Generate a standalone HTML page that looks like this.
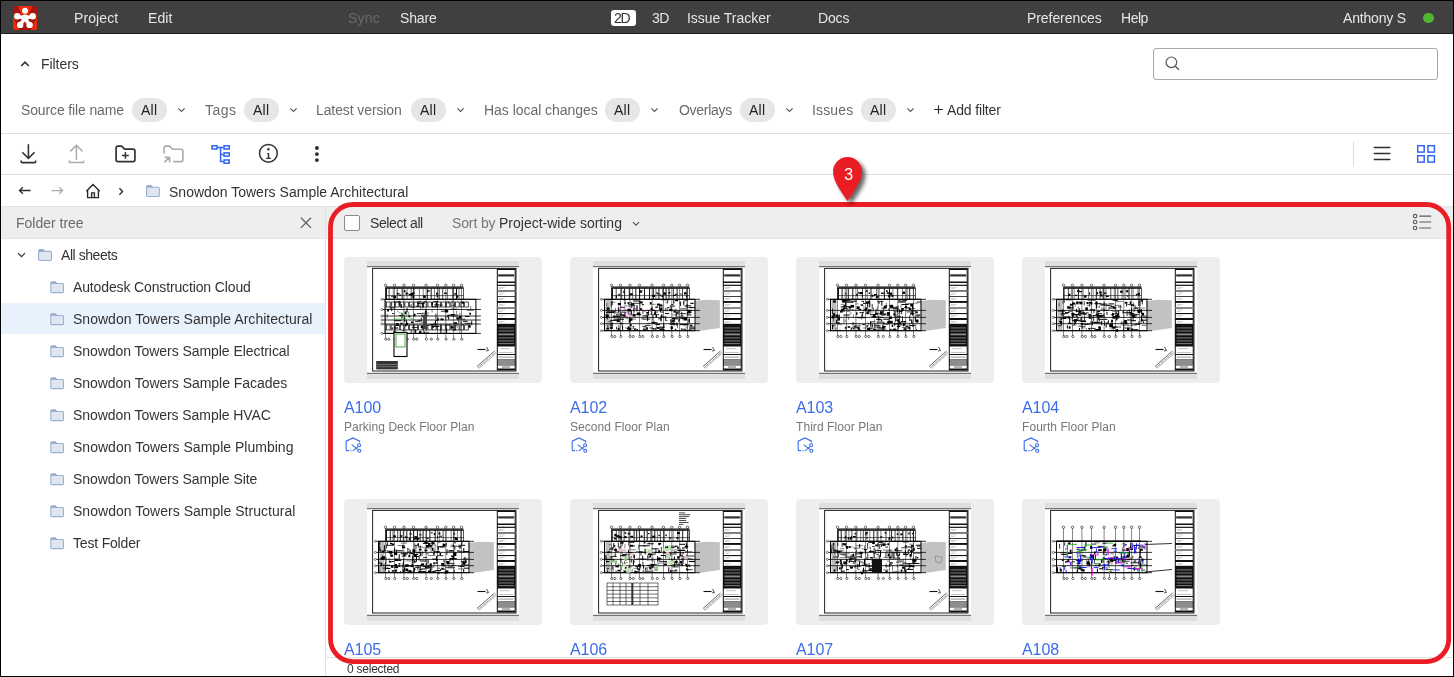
<!DOCTYPE html>
<html><head><meta charset="utf-8"><style>
html,body{margin:0;padding:0;}
body{width:1454px;height:677px;position:relative;overflow:hidden;background:#fff;font-family:"Liberation Sans",sans-serif;}
.t{position:absolute;white-space:nowrap;will-change:transform;}
.b{position:absolute;}
svg.b{overflow:visible}
</style></head><body>
<div class="b" style="left:1px;top:1px;width:1452px;height:32px;background:#404040"></div>
<div class="b" style="left:1px;top:33px;width:1452px;height:1px;background:#1f1f1f"></div>
<svg class="b" style="left:13px;top:6px" width="24" height="24" viewBox="0 0 24 24">
<defs><clipPath id="lc"><rect x="0" y="0" width="24" height="24" rx="2.5"/></clipPath></defs>
<g clip-path="url(#lc)">
<rect width="24" height="24" fill="#a8140e"/>
<path d="M4.9 0 L19.1 0 L12 19 Z" fill="#ec2a0c"/>
<path d="M0 10 L0 24 L6 24 Z" fill="#ec2a0c"/>
<path d="M24 10 L24 24 L18 24 Z" fill="#ec2a0c"/>
</g>
<g fill="#fff">
<circle cx="12" cy="4.75" r="3"/>
<circle cx="4.3" cy="10.3" r="3.2"/>
<circle cx="19.7" cy="10.3" r="3.2"/>
<circle cx="7.2" cy="18.9" r="3.2"/>
<circle cx="16.6" cy="18.9" r="3.2"/>
<circle cx="12" cy="12" r="3.6"/>
</g>
<g stroke="#fff" stroke-width="3.4" stroke-linecap="round">
<line x1="12" y1="12" x2="4.8" y2="10.5"/>
<line x1="12" y1="12" x2="19.2" y2="10.5"/>
<line x1="12" y1="12" x2="7.5" y2="18.5"/>
<line x1="12" y1="12" x2="16.3" y2="18.5"/>
</g>
</svg>
<div class="t" style="left:73.80px;top:11.15px;font-size:14px;line-height:14px;color:#e6e6e6;letter-spacing:0.108px;">Project</div>
<div class="t" style="left:148.40px;top:11.15px;font-size:14px;line-height:14px;color:#e6e6e6;letter-spacing:0.100px;">Edit</div>
<div class="t" style="left:348.00px;top:11.15px;font-size:14px;line-height:14px;color:#6a6a6a;letter-spacing:0.233px;">Sync</div>
<div class="t" style="left:400.30px;top:11.15px;font-size:14px;line-height:14px;color:#e6e6e6;letter-spacing:-0.138px;">Share</div>
<div class="b" style="left:611px;top:10px;width:25px;height:15.5px;background:#fff;border-radius:3px"></div>
<div class="t" style="left:614.30px;top:11.15px;font-size:14px;line-height:14px;color:#333;letter-spacing:-1.400px;">2D</div>
<div class="t" style="left:651.60px;top:11.15px;font-size:14px;line-height:14px;color:#e6e6e6;letter-spacing:-0.500px;">3D</div>
<div class="t" style="left:687.00px;top:11.15px;font-size:14px;line-height:14px;color:#e6e6e6;letter-spacing:-0.038px;">Issue Tracker</div>
<div class="t" style="left:818.20px;top:11.15px;font-size:14px;line-height:14px;color:#e6e6e6;letter-spacing:-0.167px;">Docs</div>
<div class="t" style="left:1027.00px;top:11.15px;font-size:14px;line-height:14px;color:#e6e6e6;letter-spacing:-0.070px;">Preferences</div>
<div class="t" style="left:1121.00px;top:11.15px;font-size:14px;line-height:14px;color:#e6e6e6;letter-spacing:-0.467px;">Help</div>
<div class="t" style="left:1343.20px;top:11.15px;font-size:14px;line-height:14px;color:#e6e6e6;letter-spacing:-0.187px;">Anthony S</div>
<div class="b" style="left:1423px;top:12.5px;width:10.5px;height:10.5px;background:#52b431;border-radius:50%"></div>
<svg class="b" style="left:19px;top:59px" width="12" height="9" viewBox="0 0 12 9"><path d="M2.2 7 L6 3.2 L9.8 7" fill="none" stroke="#333" stroke-width="1.6"/></svg>
<div class="t" style="left:40.60px;top:57.15px;font-size:14px;line-height:14px;color:#333;letter-spacing:-0.050px;">Filters</div>
<div class="b" style="left:1153px;top:48px;width:285px;height:32px;border:1px solid #a8a8a8;border-radius:3px;box-sizing:border-box"></div>
<svg class="b" style="left:1163px;top:54px" width="20" height="20" viewBox="0 0 20 20"><circle cx="8.4" cy="8.3" r="5.3" fill="none" stroke="#555" stroke-width="1.2"/><line x1="12.3" y1="12.2" x2="16" y2="15.8" stroke="#555" stroke-width="1.3"/></svg>
<div class="t" style="left:21.30px;top:103.15px;font-size:14px;line-height:14px;color:#6b6b6b;letter-spacing:-0.137px;">Source file name</div>
<div class="b" style="left:132px;top:98px;width:35px;height:24px;background:#e6e6e6;border-radius:12px"></div>
<div class="t" style="left:141.00px;top:103.15px;font-size:14px;line-height:14px;color:#222;letter-spacing:0.225px;">All</div>
<svg class="b" style="left:176px;top:105px" width="12" height="10" viewBox="0 0 12 10"><path d="M2.40 3.40 L5.50 6.40 L8.60 3.40" fill="none" stroke="#505050" stroke-width="1.1"/></svg>
<div class="t" style="left:205.20px;top:103.15px;font-size:14px;line-height:14px;color:#6b6b6b;letter-spacing:0.483px;">Tags</div>
<div class="b" style="left:244px;top:98px;width:35px;height:24px;background:#e6e6e6;border-radius:12px"></div>
<div class="t" style="left:253.00px;top:103.15px;font-size:14px;line-height:14px;color:#222;letter-spacing:0.225px;">All</div>
<svg class="b" style="left:288px;top:105px" width="12" height="10" viewBox="0 0 12 10"><path d="M2.40 3.40 L5.50 6.40 L8.60 3.40" fill="none" stroke="#505050" stroke-width="1.1"/></svg>
<div class="t" style="left:316.00px;top:103.15px;font-size:14px;line-height:14px;color:#6b6b6b;letter-spacing:-0.104px;">Latest version</div>
<div class="b" style="left:411px;top:98px;width:35px;height:24px;background:#e6e6e6;border-radius:12px"></div>
<div class="t" style="left:420.00px;top:103.15px;font-size:14px;line-height:14px;color:#222;letter-spacing:0.225px;">All</div>
<svg class="b" style="left:454px;top:105px" width="12" height="10" viewBox="0 0 12 10"><path d="M3.40 3.40 L6.50 6.40 L9.60 3.40" fill="none" stroke="#505050" stroke-width="1.1"/></svg>
<div class="t" style="left:483.60px;top:103.15px;font-size:14px;line-height:14px;color:#6b6b6b;letter-spacing:-0.037px;">Has local changes</div>
<div class="b" style="left:605px;top:98px;width:35px;height:24px;background:#e6e6e6;border-radius:12px"></div>
<div class="t" style="left:614.00px;top:103.15px;font-size:14px;line-height:14px;color:#222;letter-spacing:0.225px;">All</div>
<svg class="b" style="left:648px;top:105px" width="12" height="10" viewBox="0 0 12 10"><path d="M3.40 3.40 L6.50 6.40 L9.60 3.40" fill="none" stroke="#505050" stroke-width="1.1"/></svg>
<div class="t" style="left:678.60px;top:103.15px;font-size:14px;line-height:14px;color:#6b6b6b;letter-spacing:-0.293px;">Overlays</div>
<div class="b" style="left:740px;top:98px;width:35px;height:24px;background:#e6e6e6;border-radius:12px"></div>
<div class="t" style="left:749.00px;top:103.15px;font-size:14px;line-height:14px;color:#222;letter-spacing:0.225px;">All</div>
<svg class="b" style="left:784px;top:105px" width="12" height="10" viewBox="0 0 12 10"><path d="M2.40 3.40 L5.50 6.40 L8.60 3.40" fill="none" stroke="#505050" stroke-width="1.1"/></svg>
<div class="t" style="left:812.00px;top:103.15px;font-size:14px;line-height:14px;color:#6b6b6b;letter-spacing:0.150px;">Issues</div>
<div class="b" style="left:861px;top:98px;width:35px;height:24px;background:#e6e6e6;border-radius:12px"></div>
<div class="t" style="left:870.00px;top:103.15px;font-size:14px;line-height:14px;color:#222;letter-spacing:0.225px;">All</div>
<svg class="b" style="left:904px;top:105px" width="12" height="10" viewBox="0 0 12 10"><path d="M3.40 3.40 L6.50 6.40 L9.60 3.40" fill="none" stroke="#505050" stroke-width="1.1"/></svg>
<svg class="b" style="left:932px;top:103px" width="12" height="12" viewBox="0 0 12 12"><path d="M6.5 2.2 V10.7 M2.05 6.45 H10.8" stroke="#2a2a2a" stroke-width="1.1"/></svg>
<div class="t" style="left:946.50px;top:103.15px;font-size:14px;line-height:14px;color:#333;letter-spacing:-0.150px;">Add filter</div>
<div class="b" style="left:1px;top:133px;width:1452px;height:1px;background:#dedede"></div>
<div class="b" style="left:1px;top:174px;width:1452px;height:1px;background:#dedede"></div>
<svg class="b" style="left:0;top:0" width="340" height="180" viewBox="0 0 340 180">
<g fill="none" stroke="#333" stroke-width="1.6" stroke-linecap="butt" stroke-linejoin="miter">
<path d="M28.4 144.2 V158"/><path d="M22.3 152.3 L28.4 158.4 L34.5 152.3"/>
<path d="M21.2 160.4 V161.8 Q21.2 162.6 22 162.6 H34.8 Q35.6 162.6 35.6 161.8 V160.4"/>
</g>
<g fill="none" stroke="#ababab" stroke-width="1.5">
<path d="M76.4 145.2 V159.8"/><path d="M70.3 151.4 L76.4 145.3 L82.5 151.4"/>
<path d="M69.2 160.4 V161.8 Q69.2 162.6 70 162.6 H82.8 Q83.6 162.6 83.6 161.8 V160.4"/>
</g>
<g fill="none" stroke="#333" stroke-width="1.7" stroke-linejoin="round">
<path d="M116.1 148 Q116.1 146.1 118 146.1 H121.6 L124.6 149.2 H133 Q134.9 149.2 134.9 151.1 V159.7 Q134.9 161.6 133 161.6 H118 Q116.1 161.6 116.1 159.7 Z"/>
<path d="M125.4 152.1 V158.8 M122 155.4 H128.8" stroke-width="1.5"/>
</g>
<g fill="none" stroke="#ababab" stroke-width="1.6" stroke-linejoin="round">
<path d="M164.1 153.5 V148 Q164.1 146.1 166 146.1 H169.6 L172.6 149.2 H181 Q182.9 149.2 182.9 151.1 V159.7 Q182.9 161.6 181 161.6 H173.3"/>
<path d="M164.4 162.4 L169.4 157.4 M164.6 157.4 H169.6 V162.6"/>
</g>
<g fill="none" stroke="#2f63f4" stroke-width="1.5">
<rect x="212" y="145.8" width="5" height="3.2"/><rect x="224" y="145.8" width="5.2" height="3.2"/><rect x="224" y="152.9" width="5.2" height="3.2"/><rect x="224" y="160" width="5.2" height="3.2"/>
<path d="M217.7 147.4 H223.3 M220.6 147.4 V161.6 H223.3 M220.6 154.5 H223.3"/>
</g>
<g fill="none" stroke="#333">
<circle cx="268.4" cy="153.3" r="8.9" stroke-width="1.5"/>
<path d="M267.2 153.6 H268.5 V158.4 M266.2 158.4 H270.8" stroke-width="1.4"/>
</g>
<circle cx="268.4" cy="149.3" r="1.2" fill="#333"/>
<circle cx="316.9" cy="148" r="1.9" fill="#2b2b2b"/><circle cx="316.9" cy="154.1" r="1.9" fill="#2b2b2b"/><circle cx="316.9" cy="160.1" r="1.9" fill="#2b2b2b"/>
</svg>
<div class="b" style="left:1353px;top:141px;width:1px;height:26px;background:#dcdcdc"></div>
<svg class="b" style="left:1372px;top:144px" width="20" height="20" viewBox="0 0 20 20"><path d="M2.3 3.5 H17.8 M2.3 9.4 H17.8 M2.3 15.5 H17.8" stroke="#2e2e2e" stroke-width="1.5" stroke-linecap="round"/></svg>
<svg class="b" style="left:1414px;top:143px" width="24" height="22" viewBox="0 0 24 22"><g fill="none" stroke="#2f63f4" stroke-width="1.45"><rect x="3.7" y="2.7" width="6.5" height="6.4"/><rect x="13.9" y="2.7" width="6.5" height="6.4"/><rect x="3.7" y="12.7" width="6.5" height="6.4"/><rect x="13.9" y="12.7" width="6.5" height="6.4"/></g></svg>
<svg class="b" style="left:16px;top:184px" width="18" height="14" viewBox="0 0 18 14"><path d="M3.6 6.5 H14.6 M6.8 3.2 L3.5 6.5 L6.8 9.8" fill="none" stroke="#2e2e2e" stroke-width="1.35"/></svg>
<svg class="b" style="left:48px;top:184px" width="18" height="14" viewBox="0 0 18 14"><path d="M3.3 6.5 H14.6 M11.3 3.2 L14.6 6.5 L11.3 9.8" fill="none" stroke="#ababab" stroke-width="1.25"/></svg>
<svg class="b" style="left:84px;top:182px" width="18" height="18" viewBox="0 0 18 18"><path d="M2.3 9.3 L9 2.5 L15.7 9.3 M3.6 8 V15.6 H14.4 V8 M7.6 15.6 V10.9 H10.4 V15.6" fill="none" stroke="#2b2b2b" stroke-width="1.4" stroke-linejoin="miter"/></svg>
<svg class="b" style="left:116px;top:186px" width="10" height="11" viewBox="0 0 10 11"><path d="M3.4 2.3 L6.6 5.5 L3.4 8.7" fill="none" stroke="#2b2b2b" stroke-width="1.3"/></svg>
<svg class="b" style="left:145px;top:184px" width="16" height="14" viewBox="0 0 16 14"><g transform="translate(0.45,0.65)"><path d="M1.1 2.2 Q1.1 0.9 2.3 0.9 H5.6 L7.1 2.6 H12.6 Q13.9 2.6 13.9 3.9 V10.5 Q13.9 11.8 12.6 11.8 H2.4 Q1.1 11.8 1.1 10.5 Z" fill="#dfe6f0" stroke="#9cafd0" stroke-width="1.1"/><path d="M1.1 1.5 Q1.1 0.9 2.3 0.9 H5.6 L7.1 2.6 V3.2 H1.1 Z" fill="#9cafd0"/></g></svg>
<div class="t" style="left:169.40px;top:185.15px;font-size:14px;line-height:14px;color:#333;letter-spacing:0.019px;">Snowdon Towers Sample Architectural</div>
<div class="b" style="left:1px;top:206px;width:324px;height:32px;background:#eeeeee"></div>
<div class="b" style="left:1px;top:238px;width:324px;height:1px;background:#e3e3e3"></div>
<div class="b" style="left:1px;top:206px;width:324px;height:1px;background:#e4e4e4"></div>
<div class="t" style="left:16.20px;top:215.85px;font-size:14px;line-height:14px;color:#6a6a6a;letter-spacing:-0.010px;">Folder tree</div>
<svg class="b" style="left:298px;top:215px" width="16" height="16" viewBox="0 0 16 16"><path d="M2.9 2.8 L13 12.9 M13 2.8 L2.9 12.9" stroke="#606060" stroke-width="1.3"/></svg>
<div class="b" style="left:325px;top:206px;width:1px;height:470px;background:#e2e2e2"></div>
<div class="b" style="left:1px;top:303px;width:324px;height:31px;background:#e8f2fd"></div>
<svg class="b" style="left:16px;top:250px" width="12" height="10" viewBox="0 0 12 10"><path d="M2 3.1 L5.5 6.6 L9 3.1" fill="none" stroke="#333" stroke-width="1.25"/></svg>
<svg class="b" style="left:37px;top:248px" width="16" height="14" viewBox="0 0 16 14"><g transform="translate(0.55,0.75)"><path d="M1.1 2.2 Q1.1 0.9 2.3 0.9 H5.6 L7.1 2.6 H12.6 Q13.9 2.6 13.9 3.9 V10.5 Q13.9 11.8 12.6 11.8 H2.4 Q1.1 11.8 1.1 10.5 Z" fill="#dfe6f0" stroke="#9cafd0" stroke-width="1.1"/><path d="M1.1 1.5 Q1.1 0.9 2.3 0.9 H5.6 L7.1 2.6 V3.2 H1.1 Z" fill="#9cafd0"/></g></svg>
<div class="t" style="left:61.20px;top:248.35px;font-size:14px;line-height:14px;color:#333;letter-spacing:-0.444px;">All sheets</div>
<svg class="b" style="left:49px;top:280px" width="16" height="14" viewBox="0 0 16 14"><g transform="translate(0.65,0.85)"><path d="M1.1 2.2 Q1.1 0.9 2.3 0.9 H5.6 L7.1 2.6 H12.6 Q13.9 2.6 13.9 3.9 V10.5 Q13.9 11.8 12.6 11.8 H2.4 Q1.1 11.8 1.1 10.5 Z" fill="#dfe6f0" stroke="#9cafd0" stroke-width="1.1"/><path d="M1.1 1.5 Q1.1 0.9 2.3 0.9 H5.6 L7.1 2.6 V3.2 H1.1 Z" fill="#9cafd0"/></g></svg>
<div class="t" style="left:73.10px;top:280.15px;font-size:14px;line-height:14px;color:#333;letter-spacing:-0.135px;">Autodesk Construction Cloud</div>
<svg class="b" style="left:49px;top:312px" width="16" height="14" viewBox="0 0 16 14"><g transform="translate(0.65,0.85)"><path d="M1.1 2.2 Q1.1 0.9 2.3 0.9 H5.6 L7.1 2.6 H12.6 Q13.9 2.6 13.9 3.9 V10.5 Q13.9 11.8 12.6 11.8 H2.4 Q1.1 11.8 1.1 10.5 Z" fill="#dfe6f0" stroke="#9cafd0" stroke-width="1.1"/><path d="M1.1 1.5 Q1.1 0.9 2.3 0.9 H5.6 L7.1 2.6 V3.2 H1.1 Z" fill="#9cafd0"/></g></svg>
<div class="t" style="left:73.10px;top:312.15px;font-size:14px;line-height:14px;color:#333;letter-spacing:0.022px;">Snowdon Towers Sample Architectural</div>
<svg class="b" style="left:49px;top:344px" width="16" height="14" viewBox="0 0 16 14"><g transform="translate(0.65,0.85)"><path d="M1.1 2.2 Q1.1 0.9 2.3 0.9 H5.6 L7.1 2.6 H12.6 Q13.9 2.6 13.9 3.9 V10.5 Q13.9 11.8 12.6 11.8 H2.4 Q1.1 11.8 1.1 10.5 Z" fill="#dfe6f0" stroke="#9cafd0" stroke-width="1.1"/><path d="M1.1 1.5 Q1.1 0.9 2.3 0.9 H5.6 L7.1 2.6 V3.2 H1.1 Z" fill="#9cafd0"/></g></svg>
<div class="t" style="left:73.10px;top:344.15px;font-size:14px;line-height:14px;color:#333;letter-spacing:-0.055px;">Snowdon Towers Sample Electrical</div>
<svg class="b" style="left:49px;top:376px" width="16" height="14" viewBox="0 0 16 14"><g transform="translate(0.65,0.85)"><path d="M1.1 2.2 Q1.1 0.9 2.3 0.9 H5.6 L7.1 2.6 H12.6 Q13.9 2.6 13.9 3.9 V10.5 Q13.9 11.8 12.6 11.8 H2.4 Q1.1 11.8 1.1 10.5 Z" fill="#dfe6f0" stroke="#9cafd0" stroke-width="1.1"/><path d="M1.1 1.5 Q1.1 0.9 2.3 0.9 H5.6 L7.1 2.6 V3.2 H1.1 Z" fill="#9cafd0"/></g></svg>
<div class="t" style="left:73.10px;top:376.15px;font-size:14px;line-height:14px;color:#333;letter-spacing:-0.039px;">Snowdon Towers Sample Facades</div>
<svg class="b" style="left:49px;top:408px" width="16" height="14" viewBox="0 0 16 14"><g transform="translate(0.65,0.85)"><path d="M1.1 2.2 Q1.1 0.9 2.3 0.9 H5.6 L7.1 2.6 H12.6 Q13.9 2.6 13.9 3.9 V10.5 Q13.9 11.8 12.6 11.8 H2.4 Q1.1 11.8 1.1 10.5 Z" fill="#dfe6f0" stroke="#9cafd0" stroke-width="1.1"/><path d="M1.1 1.5 Q1.1 0.9 2.3 0.9 H5.6 L7.1 2.6 V3.2 H1.1 Z" fill="#9cafd0"/></g></svg>
<div class="t" style="left:73.10px;top:408.15px;font-size:14px;line-height:14px;color:#333;letter-spacing:-0.062px;">Snowdon Towers Sample HVAC</div>
<svg class="b" style="left:49px;top:440px" width="16" height="14" viewBox="0 0 16 14"><g transform="translate(0.65,0.85)"><path d="M1.1 2.2 Q1.1 0.9 2.3 0.9 H5.6 L7.1 2.6 H12.6 Q13.9 2.6 13.9 3.9 V10.5 Q13.9 11.8 12.6 11.8 H2.4 Q1.1 11.8 1.1 10.5 Z" fill="#dfe6f0" stroke="#9cafd0" stroke-width="1.1"/><path d="M1.1 1.5 Q1.1 0.9 2.3 0.9 H5.6 L7.1 2.6 V3.2 H1.1 Z" fill="#9cafd0"/></g></svg>
<div class="t" style="left:73.10px;top:440.15px;font-size:14px;line-height:14px;color:#333;letter-spacing:0.016px;">Snowdon Towers Sample Plumbing</div>
<svg class="b" style="left:49px;top:472px" width="16" height="14" viewBox="0 0 16 14"><g transform="translate(0.65,0.85)"><path d="M1.1 2.2 Q1.1 0.9 2.3 0.9 H5.6 L7.1 2.6 H12.6 Q13.9 2.6 13.9 3.9 V10.5 Q13.9 11.8 12.6 11.8 H2.4 Q1.1 11.8 1.1 10.5 Z" fill="#dfe6f0" stroke="#9cafd0" stroke-width="1.1"/><path d="M1.1 1.5 Q1.1 0.9 2.3 0.9 H5.6 L7.1 2.6 V3.2 H1.1 Z" fill="#9cafd0"/></g></svg>
<div class="t" style="left:73.10px;top:472.15px;font-size:14px;line-height:14px;color:#333;letter-spacing:-0.054px;">Snowdon Towers Sample Site</div>
<svg class="b" style="left:49px;top:504px" width="16" height="14" viewBox="0 0 16 14"><g transform="translate(0.65,0.85)"><path d="M1.1 2.2 Q1.1 0.9 2.3 0.9 H5.6 L7.1 2.6 H12.6 Q13.9 2.6 13.9 3.9 V10.5 Q13.9 11.8 12.6 11.8 H2.4 Q1.1 11.8 1.1 10.5 Z" fill="#dfe6f0" stroke="#9cafd0" stroke-width="1.1"/><path d="M1.1 1.5 Q1.1 0.9 2.3 0.9 H5.6 L7.1 2.6 V3.2 H1.1 Z" fill="#9cafd0"/></g></svg>
<div class="t" style="left:73.10px;top:504.15px;font-size:14px;line-height:14px;color:#333;letter-spacing:0.029px;">Snowdon Towers Sample Structural</div>
<svg class="b" style="left:49px;top:536px" width="16" height="14" viewBox="0 0 16 14"><g transform="translate(0.65,0.85)"><path d="M1.1 2.2 Q1.1 0.9 2.3 0.9 H5.6 L7.1 2.6 H12.6 Q13.9 2.6 13.9 3.9 V10.5 Q13.9 11.8 12.6 11.8 H2.4 Q1.1 11.8 1.1 10.5 Z" fill="#dfe6f0" stroke="#9cafd0" stroke-width="1.1"/><path d="M1.1 1.5 Q1.1 0.9 2.3 0.9 H5.6 L7.1 2.6 V3.2 H1.1 Z" fill="#9cafd0"/></g></svg>
<div class="t" style="left:73.10px;top:536.15px;font-size:14px;line-height:14px;color:#333;letter-spacing:-0.185px;">Test Folder</div>
<div class="b" style="left:326px;top:206px;width:1127px;height:32px;background:#eeeeee"></div>
<div class="b" style="left:326px;top:238px;width:1127px;height:1px;background:#e3e3e3"></div>
<div class="b" style="left:326px;top:206px;width:1127px;height:1px;background:#e4e4e4"></div>
<div class="b" style="left:344px;top:215px;width:16px;height:16px;background:#fff;border:1px solid #8a8a8a;border-radius:2px;box-sizing:border-box"></div>
<div class="t" style="left:370.40px;top:216.15px;font-size:14px;line-height:14px;color:#333;letter-spacing:-0.400px;">Select all</div>
<div class="t" style="left:452.20px;top:216.15px;font-size:14px;line-height:14px;color:#777;letter-spacing:-0.125px;">Sort by</div>
<div class="t" style="left:499.40px;top:216.15px;font-size:14px;line-height:14px;color:#333;">Project-wide sorting</div>
<svg class="b" style="left:630px;top:219px" width="12" height="10" viewBox="0 0 12 10"><path d="M2.90 3.20 L6.00 6.20 L9.10 3.20" fill="none" stroke="#505050" stroke-width="1.1"/></svg>
<svg class="b" style="left:1410px;top:211px" width="24" height="22" viewBox="0 0 24 22"><g fill="none" stroke="#5a5a5a" stroke-width="1.1"><circle cx="5.1" cy="5.1" r="1.75"/><circle cx="5.1" cy="11" r="1.75"/><circle cx="5.1" cy="17" r="1.75"/></g><path d="M9.2 5.1 H21.2 M9.2 11 H21.2 M9.2 17 H21.2" stroke="#5a5a5a" stroke-width="1.15"/></svg>
<svg width="0" height="0" style="position:absolute"><defs><symbol id="frame" viewBox="0 0 152 118"><rect width="152" height="118" fill="#dfdfdf"/><rect x="0" y="5.4" width="152" height="107.2" fill="#fff"/><path d="M0 5.7 H152 M0 112.3 H152" stroke="#444" stroke-width="0.9"/><rect x="5.6" y="7.4" width="143.4" height="102.6" fill="none" stroke="#222" stroke-width="1"/><g><rect x="129.8" y="7.5" width="18.9" height="102" fill="#111"/><rect x="130.8" y="9" width="16.9" height="11.5" fill="#fff"/><rect x="130.8" y="22" width="16.9" height="1.7" fill="#fff"/><rect x="130.8" y="24.9" width="16.9" height="4.4" fill="#fff"/><rect x="130.8" y="30.5" width="16.9" height="4.5" fill="#fff"/><rect x="130.8" y="35.8" width="16.9" height="4.2" fill="#fff"/><rect x="130.8" y="41.9" width="16.9" height="4.1" fill="#fff"/><rect x="130.8" y="47.5" width="16.9" height="4.5" fill="#fff"/><rect x="130.8" y="53.1" width="16.9" height="3.9" fill="#fff"/><rect x="130.8" y="59" width="16.9" height="3.8" fill="#fff"/><rect x="130.8" y="85.5" width="16.9" height="7.5" fill="#fff"/><rect x="130.8" y="94" width="16.9" height="4.2" fill="#fff"/><rect x="130.8" y="104.4" width="16.9" height="3.1" fill="#fff"/><rect x="131.8" y="26.1" width="6" height="0.5" fill="#aaa"/><rect x="131.8" y="27.5" width="4" height="0.5" fill="#aaa"/><rect x="131.8" y="31.7" width="6" height="0.5" fill="#aaa"/><rect x="131.8" y="33.1" width="4" height="0.5" fill="#aaa"/><rect x="131.8" y="37.0" width="6" height="0.5" fill="#aaa"/><rect x="131.8" y="38.4" width="4" height="0.5" fill="#aaa"/><rect x="131.8" y="43.1" width="6" height="0.5" fill="#aaa"/><rect x="131.8" y="44.5" width="4" height="0.5" fill="#aaa"/><rect x="131.8" y="48.7" width="6" height="0.5" fill="#aaa"/><rect x="131.8" y="50.1" width="4" height="0.5" fill="#aaa"/><rect x="131.8" y="54.3" width="6" height="0.5" fill="#aaa"/><rect x="131.8" y="55.7" width="4" height="0.5" fill="#aaa"/><rect x="131.8" y="60.2" width="6" height="0.5" fill="#aaa"/><rect x="131.8" y="61.6" width="4" height="0.5" fill="#aaa"/><rect x="129.8" y="29.3" width="18.9" height="1.2" fill="#888"/><rect x="129.8" y="46" width="18.9" height="1.5" fill="#888"/><rect x="131.2" y="13.3" width="16" height="2.2" fill="#333"/><rect x="131.5" y="66.5" width="15.5" height="0.9" fill="#8a8a8a"/><rect x="131.5" y="69.5" width="15.5" height="0.9" fill="#8a8a8a"/><rect x="131.5" y="72.5" width="15.5" height="1.8" fill="#8a8a8a"/><rect x="131.5" y="76.5" width="15.5" height="0.9" fill="#8a8a8a"/><rect x="131.5" y="79.5" width="15.5" height="0.9" fill="#8a8a8a"/><rect x="131.5" y="82.2" width="15.5" height="0.9" fill="#8a8a8a"/><rect x="133" y="87.5" width="10" height="0.6" fill="#999"/><rect x="132" y="91" width="14" height="0.6" fill="#999"/><rect x="131.5" y="95.5" width="15" height="1.2" fill="#aaa"/><rect x="130.8" y="98.2" width="16.9" height="6.2" fill="#8d8d8d"/><rect x="135" y="105.5" width="8" height="1" fill="#666"/></g><path d="M110.5 88.5 H118.5" stroke="#111" stroke-width="1.1"/><path d="M119.5 86 L121.5 89.5 L119 90" fill="none" stroke="#222" stroke-width="0.8"/><path d="M110 105.5 L127.5 90" stroke="#222" stroke-width="0.7"/><path d="M111.2 106.6 L128.5 91.3" stroke="#555" stroke-width="0.9" stroke-dasharray="1.2 0.8"/><path d="M112 107.5 L129 92.5" stroke="#888" stroke-width="0.6"/></symbol><symbol id="sheet0" viewBox="0 0 152 118"><use href="#frame"/><circle cx="18.5" cy="24.3" r="1.2" fill="#fff" stroke="#111" stroke-width="0.6"/><path d="M18.5 25.5 V78.4" stroke="#111" stroke-width="0.5"/><circle cx="27.5" cy="24.3" r="1.2" fill="#fff" stroke="#111" stroke-width="0.6"/><path d="M27.5 25.5 V78.4" stroke="#111" stroke-width="0.5"/><circle cx="36.9" cy="24.3" r="1.2" fill="#fff" stroke="#111" stroke-width="0.6"/><path d="M36.9 25.5 V78.4" stroke="#111" stroke-width="0.5"/><circle cx="46.5" cy="24.3" r="1.2" fill="#fff" stroke="#111" stroke-width="0.6"/><path d="M46.5 25.5 V78.4" stroke="#111" stroke-width="0.5"/><circle cx="59.1" cy="24.3" r="1.2" fill="#fff" stroke="#111" stroke-width="0.6"/><path d="M59.1 25.5 V78.4" stroke="#111" stroke-width="0.5"/><circle cx="70.5" cy="24.3" r="1.2" fill="#fff" stroke="#111" stroke-width="0.6"/><path d="M70.5 25.5 V78.4" stroke="#111" stroke-width="0.5"/><circle cx="78.8" cy="24.3" r="1.2" fill="#fff" stroke="#111" stroke-width="0.6"/><path d="M78.8 25.5 V78.4" stroke="#111" stroke-width="0.5"/><circle cx="86.6" cy="24.3" r="1.2" fill="#fff" stroke="#111" stroke-width="0.6"/><path d="M86.6 25.5 V78.4" stroke="#111" stroke-width="0.5"/><circle cx="94.5" cy="24.3" r="1.2" fill="#fff" stroke="#111" stroke-width="0.6"/><path d="M94.5 25.5 V78.4" stroke="#111" stroke-width="0.5"/><circle cx="18.8" cy="78.2" r="1.1" fill="#fff" stroke="#111" stroke-width="0.6"/><circle cx="27.8" cy="78.2" r="1.1" fill="#fff" stroke="#111" stroke-width="0.6"/><circle cx="37.199999999999996" cy="78.2" r="1.1" fill="#fff" stroke="#111" stroke-width="0.6"/><circle cx="46.8" cy="78.2" r="1.1" fill="#fff" stroke="#111" stroke-width="0.6"/><circle cx="59.4" cy="78.2" r="1.1" fill="#fff" stroke="#111" stroke-width="0.6"/><circle cx="70.8" cy="78.2" r="1.1" fill="#fff" stroke="#111" stroke-width="0.6"/><circle cx="79.1" cy="78.2" r="1.1" fill="#fff" stroke="#111" stroke-width="0.6"/><circle cx="86.89999999999999" cy="78.2" r="1.1" fill="#fff" stroke="#111" stroke-width="0.6"/><circle cx="94.8" cy="78.2" r="1.1" fill="#fff" stroke="#111" stroke-width="0.6"/><circle cx="21.8" cy="78.2" r="1.1" fill="#fff" stroke="#111" stroke-width="0.6"/><circle cx="40.3" cy="78.2" r="1.1" fill="#fff" stroke="#111" stroke-width="0.6"/><circle cx="49.8" cy="78.2" r="1.1" fill="#fff" stroke="#111" stroke-width="0.6"/><circle cx="64.3" cy="78.2" r="1.1" fill="#fff" stroke="#111" stroke-width="0.6"/><rect x="18.5" y="25.4" width="78" height="2" fill="#333"/><rect x="18.5" y="27.4" width="78" height="10.9" fill="none" stroke="#111" stroke-width="0.7"/><path d="M19.5 27.4 V38.3" stroke="#000" stroke-width="0.9"/><path d="M22.1 27.4 V38.3" stroke="#000" stroke-width="0.7"/><path d="M26.3 27.4 V38.3" stroke="#000" stroke-width="0.5"/><path d="M30.2 27.4 V38.3" stroke="#000" stroke-width="0.7"/><path d="M35.2 27.4 V38.3" stroke="#000" stroke-width="0.9"/><path d="M40.1 27.4 V38.3" stroke="#000" stroke-width="0.5"/><path d="M44.2 27.4 V38.3" stroke="#000" stroke-width="0.7"/><path d="M46.9 27.4 V38.3" stroke="#000" stroke-width="0.9"/><path d="M52.4 27.4 V38.3" stroke="#000" stroke-width="0.5"/><path d="M56.2 27.4 V38.3" stroke="#000" stroke-width="0.5"/><path d="M60.5 27.4 V38.3" stroke="#000" stroke-width="0.7"/><path d="M64.2 27.4 V38.3" stroke="#000" stroke-width="0.9"/><path d="M67.5 27.4 V38.3" stroke="#000" stroke-width="0.5"/><path d="M72.1 27.4 V38.3" stroke="#000" stroke-width="0.9"/><path d="M75.7 27.4 V38.3" stroke="#000" stroke-width="0.7"/><path d="M80.5 27.4 V38.3" stroke="#000" stroke-width="0.5"/><path d="M85.9 27.4 V38.3" stroke="#000" stroke-width="0.9"/><path d="M89.5 27.4 V38.3" stroke="#000" stroke-width="0.9"/><path d="M92.0 27.4 V38.3" stroke="#000" stroke-width="0.5"/><rect x="87.2" y="32.2" width="2.5" height="1.4" fill="#000"/><rect x="69.0" y="31.7" width="1.9" height="2.0" fill="#000"/><rect x="43.4" y="32.0" width="2.7" height="2.5" fill="#000"/><rect x="36.9" y="29.2" width="1.6" height="1.9" fill="#000"/><rect x="24.4" y="34.5" width="1.2" height="1.6" fill="#000"/><rect x="89.9" y="34.5" width="1.3" height="2.4" fill="#000"/><rect x="77.0" y="31.6" width="3.0" height="1.3" fill="#000"/><rect x="45.2" y="34.8" width="1.9" height="2.0" fill="#000"/><rect x="29.8" y="32.1" width="2.7" height="1.4" fill="#000"/><rect x="41.7" y="33.0" width="2.9" height="1.3" fill="#000"/><rect x="32.2" y="33.6" width="1.7" height="1.3" fill="#000"/><rect x="59.9" y="29.3" width="2.8" height="1.4" fill="#000"/><rect x="38.6" y="31.4" width="1.3" height="2.4" fill="#000"/><rect x="56.2" y="34.4" width="2.5" height="2.5" fill="#000"/><rect x="39.4" y="31.9" width="2.0" height="1.2" fill="#000"/><rect x="69.6" y="34.4" width="1.3" height="1.8" fill="#000"/><rect x="45.2" y="31.3" width="2.4" height="1.8" fill="#000"/><rect x="26.4" y="34.8" width="2.7" height="2.3" fill="#000"/><path d="M18.5 34.6 H96.5" stroke="#000" stroke-width="0.6"/><path d="M15.5 38.3 H113.9" stroke="#111" stroke-width="0.85"/><circle cx="14.8" cy="38.3" r="1" fill="#fff" stroke="#111" stroke-width="0.5"/><path d="M15.5 48.5 H113.9" stroke="#111" stroke-width="0.85"/><circle cx="14.8" cy="48.5" r="1" fill="#fff" stroke="#111" stroke-width="0.5"/><path d="M15.5 55 H113.9" stroke="#111" stroke-width="0.85"/><circle cx="14.8" cy="55" r="1" fill="#fff" stroke="#111" stroke-width="0.5"/><path d="M15.5 59 H113.9" stroke="#111" stroke-width="0.85"/><circle cx="14.8" cy="59" r="1" fill="#fff" stroke="#111" stroke-width="0.5"/><path d="M15.5 63 H113.9" stroke="#111" stroke-width="0.85"/><circle cx="14.8" cy="63" r="1" fill="#fff" stroke="#111" stroke-width="0.5"/><path d="M15.5 72.4 H113.9" stroke="#111" stroke-width="0.85"/><circle cx="14.8" cy="72.4" r="1" fill="#fff" stroke="#111" stroke-width="0.5"/><rect x="18" y="38.3" width="90.9" height="34.1" fill="none" stroke="#000" stroke-width="1"/><path d="M56.7 40.9 H59.6" stroke="#000" stroke-width="1.0"/><path d="M58.0 71.2 V72.4" stroke="#000" stroke-width="0.8"/><path d="M85.5 68.9 H89.1" stroke="#000" stroke-width="1.0"/><path d="M58.4 49.5 V53.6" stroke="#000" stroke-width="1.0"/><path d="M39.4 59.0 V63.6" stroke="#000" stroke-width="1.0"/><path d="M68.4 59.3 H71.1" stroke="#000" stroke-width="0.8"/><path d="M56.4 66.8 V72.4" stroke="#000" stroke-width="0.5"/><rect x="70.3" y="56.8" width="1.4" height="2.7" fill="#000"/><path d="M33.0 54.4 H37.4" stroke="#000" stroke-width="0.5"/><path d="M103.7 44.8 V48.5" stroke="#000" stroke-width="0.5"/><rect x="77.8" y="48.9" width="3.2" height="2.6" fill="#000"/><path d="M90.1 62.4 V67.3" stroke="#000" stroke-width="0.5"/><path d="M41.8 50.7 V55.2" stroke="#000" stroke-width="0.5"/><path d="M55.4 52.1 H62.3" stroke="#000" stroke-width="0.5"/><path d="M25.0 52.6 H27.4" stroke="#000" stroke-width="0.8"/><path d="M49.9 52.6 H56.4" stroke="#000" stroke-width="0.8"/><path d="M78.7 55.3 V58.4" stroke="#000" stroke-width="0.8"/><path d="M73.9 50.2 H81.4" stroke="#000" stroke-width="0.8"/><path d="M69.4 41.5 V45.0" stroke="#000" stroke-width="1.0"/><rect x="53.8" y="64.7" width="3.5" height="2.5" fill="#000"/><rect x="24.6" y="66.4" width="1.2" height="1.8" fill="#000"/><path d="M46.7 62.9 V66.1" stroke="#000" stroke-width="0.5"/><path d="M39.7 48.8 V54.1" stroke="#000" stroke-width="0.5"/><rect x="37.9" y="63.1" width="1.6" height="2.2" fill="#000"/><rect x="56.7" y="70.6" width="1.2" height="1.6" fill="#000"/><path d="M91.8 57.5 V62.8" stroke="#000" stroke-width="0.8"/><path d="M93.8 60.2 V62.4" stroke="#000" stroke-width="0.8"/><path d="M92.9 51.7 V54.4" stroke="#000" stroke-width="0.5"/><path d="M29.1 64.5 H32.1" stroke="#000" stroke-width="1.0"/><path d="M98.1 55.5 H102.5" stroke="#000" stroke-width="1.0"/><rect x="94.7" y="40.7" width="2.2" height="2.0" fill="#000"/><path d="M57.8 53.2 V56.6" stroke="#000" stroke-width="0.8"/><path d="M89.6 50.0 V53.8" stroke="#000" stroke-width="0.5"/><path d="M27.3 59.7 H34.5" stroke="#000" stroke-width="1.0"/><rect x="73.5" y="57.4" width="3.0" height="1.8" fill="#000"/><path d="M51.3 40.4 H55.2" stroke="#000" stroke-width="0.5"/><path d="M23.3 44.6 V48.0" stroke="#000" stroke-width="0.5"/><path d="M45.0 66.5 H51.6" stroke="#000" stroke-width="0.5"/><path d="M48.7 45.2 H53.1" stroke="#000" stroke-width="0.8"/><path d="M99.8 49.5 H106.8" stroke="#000" stroke-width="0.5"/><path d="M68.9 52.5 V58.1" stroke="#000" stroke-width="0.8"/><rect x="102.3" y="51.7" width="1.7" height="2.0" fill="#000"/><path d="M73.9 62.4 V67.8" stroke="#000" stroke-width="0.5"/><path d="M48.7 68.4 V72.4" stroke="#000" stroke-width="1.0"/><rect x="44.0" y="60.5" width="2.1" height="1.6" fill="#000"/><path d="M62.8 63.6 H70.3" stroke="#000" stroke-width="1.0"/><rect x="37.7" y="50.4" width="1.6" height="2.8" fill="#000"/><rect x="64.6" y="41.2" width="1.2" height="2.7" fill="#000"/><path d="M48.1 68.7 V72.2" stroke="#000" stroke-width="1.0"/><path d="M59.9 64.5 H62.7" stroke="#000" stroke-width="0.5"/><path d="M40.2 46.8 V51.2" stroke="#000" stroke-width="0.8"/><path d="M94.1 63.6 H96.8" stroke="#000" stroke-width="0.5"/><path d="M77.9 63.8 H84.1" stroke="#000" stroke-width="0.5"/><path d="M20.3 52.9 V57.4" stroke="#000" stroke-width="0.5"/><path d="M66.4 40.5 H71.1" stroke="#000" stroke-width="0.8"/><path d="M35.0 51.8 V57.6" stroke="#000" stroke-width="1.0"/><path d="M50.3 41.1 H53.4" stroke="#000" stroke-width="0.8"/><rect x="20.1" y="47.9" width="1.9" height="2.6" fill="#000"/><path d="M65.1 48.2 V51.5" stroke="#000" stroke-width="0.5"/><path d="M68.5 59.5 V63.2" stroke="#000" stroke-width="1.0"/><path d="M31.5 40.7 H33.9" stroke="#000" stroke-width="0.5"/><path d="M65.0 45.8 H71.2" stroke="#000" stroke-width="0.8"/><path d="M32.0 39.7 V44.5" stroke="#000" stroke-width="0.8"/><path d="M44.7 66.5 H50.5" stroke="#000" stroke-width="0.5"/><path d="M53.6 43.8 V48.6" stroke="#000" stroke-width="0.5"/><path d="M48.1 60.6 H53.0" stroke="#000" stroke-width="0.8"/><rect x="33.3" y="61.7" width="2.3" height="1.8" fill="#000"/><rect x="101.5" y="63.9" width="2.1" height="2.8" fill="#000"/><path d="M100.8 62.9 H103.2" stroke="#000" stroke-width="0.5"/><path d="M76.9 70.4 V72.4" stroke="#000" stroke-width="0.5"/><path d="M97.5 62.3 H105.4" stroke="#000" stroke-width="0.8"/><rect x="56.4" y="60.3" width="3.3" height="2.5" fill="#000"/><path d="M26.8 41.0 H31.5" stroke="#000" stroke-width="0.8"/><path d="M34.3 42.9 V47.1" stroke="#000" stroke-width="1.0"/><path d="M35.5 69.8 H38.5" stroke="#000" stroke-width="0.8"/><path d="M37.7 55.6 V60.9" stroke="#000" stroke-width="1.0"/><rect x="52.1" y="70.1" width="2.4" height="2.5" fill="#000"/><path d="M92.3 58.1 H98.3" stroke="#000" stroke-width="0.8"/><rect x="26.6" y="69.7" width="2.2" height="2.4" fill="#000"/><path d="M50.5 59.4 H54.3" stroke="#000" stroke-width="0.8"/><path d="M32.3 54.6 H34.3" stroke="#000" stroke-width="1.0"/><path d="M44.2 68.1 V72.4" stroke="#000" stroke-width="0.8"/><rect x="80.3" y="53.8" width="1.5" height="2.7" fill="#000"/><path d="M55.9 41.8 V47.3" stroke="#000" stroke-width="0.5"/><rect x="89.4" y="56.1" width="2.4" height="2.5" fill="#000"/><rect x="41.3" y="54.5" width="2.2" height="1.4" fill="#000"/><path d="M54.0 54.3 H61.3" stroke="#000" stroke-width="0.8"/><path d="M104.7 59.4 V64.2" stroke="#000" stroke-width="0.8"/><path d="M67.3 43.9 H72.1" stroke="#000" stroke-width="1.0"/><path d="M59.2 48.6 V54.3" stroke="#000" stroke-width="1.0"/><path d="M84.3 55.1 H90.5" stroke="#000" stroke-width="0.8"/><path d="M45.1 46.4 H48.0" stroke="#000" stroke-width="0.5"/><rect x="65.5" y="64.9" width="1.3" height="2.0" fill="#000"/><path d="M84.4 44.2 H87.4" stroke="#000" stroke-width="0.8"/><path d="M22.7 46.8 H28.8" stroke="#000" stroke-width="0.8"/><path d="M85.3 39.5 V42.9" stroke="#000" stroke-width="0.5"/><path d="M32.3 40.2 V44.8" stroke="#000" stroke-width="0.5"/><rect x="28.8" y="62.1" width="3.0" height="1.7" fill="#000"/><rect x="46.5" y="52.7" width="2.0" height="2.7" fill="#000"/><path d="M55.9 42.3 V47.2" stroke="#000" stroke-width="0.8"/><path d="M81.4 54.2 H86.9" stroke="#000" stroke-width="1.0"/><path d="M84.0 48.2 H90.4" stroke="#000" stroke-width="0.8"/><path d="M81.2 40.2 V42.8" stroke="#000" stroke-width="0.8"/><path d="M50.0 42.7 H57.7" stroke="#000" stroke-width="1.0"/><rect x="92.0" y="54.8" width="2.5" height="2.9" fill="#000"/><path d="M61.0 70.7 V72.4" stroke="#000" stroke-width="1.0"/><path d="M26.4 67.0 H31.1" stroke="#000" stroke-width="1.0"/><path d="M67.1 61.2 V64.9" stroke="#000" stroke-width="0.5"/><rect x="38.9" y="61.7" width="2.3" height="2.5" fill="#000"/><rect x="83.8" y="65.1" width="2.7" height="2.5" fill="#000"/><path d="M81.7 55.8 V58.6" stroke="#000" stroke-width="1.0"/><path d="M52.8 61.1 H57.8" stroke="#000" stroke-width="0.5"/><rect x="86.8" y="61.3" width="3.2" height="1.8" fill="#000"/><path d="M92.9 67.7 V72.4" stroke="#000" stroke-width="0.5"/><path d="M87.7 54.1 H92.5" stroke="#000" stroke-width="0.5"/><path d="M55.2 55.6 H57.6" stroke="#000" stroke-width="1.0"/><path d="M24.6 46.9 V50.2" stroke="#000" stroke-width="0.8"/><path d="M65.0 65.5 H72.3" stroke="#000" stroke-width="1.0"/><path d="M87.1 68.5 H89.5" stroke="#000" stroke-width="0.5"/><path d="M83.8 53.5 H88.2" stroke="#000" stroke-width="1.0"/><path d="M72.2 44.1 H75.6" stroke="#000" stroke-width="0.8"/><path d="M24.7 41.4 V44.4" stroke="#000" stroke-width="0.5"/><path d="M73.9 67.7 V72.4" stroke="#000" stroke-width="1.0"/><path d="M96.0 60.3 H100.6" stroke="#000" stroke-width="1.0"/><path d="M54.3 56.3 V60.6" stroke="#000" stroke-width="0.8"/><path d="M44.1 43.2 V46.6" stroke="#000" stroke-width="0.8"/><path d="M79.6 67.5 V72.3" stroke="#000" stroke-width="1.0"/><rect x="19.5" y="41" width="3.6" height="5" fill="none" stroke="#000" stroke-width="0.7"/><rect x="24.1" y="41" width="3.6" height="5" fill="none" stroke="#000" stroke-width="0.7"/><rect x="28.7" y="41" width="3.6" height="5" fill="none" stroke="#000" stroke-width="0.7"/><rect x="33.3" y="41" width="3.6" height="5" fill="none" stroke="#000" stroke-width="0.7"/><rect x="37.9" y="41" width="3.6" height="5" fill="none" stroke="#000" stroke-width="0.7"/><rect x="42.5" y="41" width="3.6" height="5" fill="none" stroke="#000" stroke-width="0.7"/><rect x="47.1" y="41" width="3.6" height="5" fill="none" stroke="#000" stroke-width="0.7"/><rect x="51.7" y="41" width="3.6" height="5" fill="none" stroke="#000" stroke-width="0.7"/><rect x="56.3" y="41" width="3.6" height="5" fill="none" stroke="#000" stroke-width="0.7"/><rect x="60.9" y="41" width="3.6" height="5" fill="none" stroke="#000" stroke-width="0.7"/><rect x="65.5" y="41" width="3.6" height="5" fill="none" stroke="#000" stroke-width="0.7"/><rect x="70.1" y="41" width="3.6" height="5" fill="none" stroke="#000" stroke-width="0.7"/><rect x="74.7" y="41" width="3.6" height="5" fill="none" stroke="#000" stroke-width="0.7"/><rect x="79.3" y="41" width="3.6" height="5" fill="none" stroke="#000" stroke-width="0.7"/><rect x="83.9" y="41" width="3.6" height="5" fill="none" stroke="#000" stroke-width="0.7"/><rect x="88.5" y="41" width="3.6" height="5" fill="none" stroke="#000" stroke-width="0.7"/><rect x="93.1" y="41" width="3.6" height="5" fill="none" stroke="#000" stroke-width="0.7"/><rect x="97.7" y="41" width="3.6" height="5" fill="none" stroke="#000" stroke-width="0.7"/><rect x="19.5" y="64" width="3.6" height="5" fill="none" stroke="#000" stroke-width="0.7"/><rect x="24.1" y="64" width="3.6" height="5" fill="none" stroke="#000" stroke-width="0.7"/><rect x="28.7" y="64" width="3.6" height="5" fill="none" stroke="#000" stroke-width="0.7"/><rect x="33.3" y="64" width="3.6" height="5" fill="none" stroke="#000" stroke-width="0.7"/><rect x="37.9" y="64" width="3.6" height="5" fill="none" stroke="#000" stroke-width="0.7"/><rect x="42.5" y="64" width="3.6" height="5" fill="none" stroke="#000" stroke-width="0.7"/><rect x="47.1" y="64" width="3.6" height="5" fill="none" stroke="#000" stroke-width="0.7"/><rect x="51.7" y="64" width="3.6" height="5" fill="none" stroke="#000" stroke-width="0.7"/><rect x="56.3" y="64" width="3.6" height="5" fill="none" stroke="#000" stroke-width="0.7"/><rect x="60.9" y="64" width="3.6" height="5" fill="none" stroke="#000" stroke-width="0.7"/><rect x="65.5" y="64" width="3.6" height="5" fill="none" stroke="#000" stroke-width="0.7"/><rect x="70.1" y="64" width="3.6" height="5" fill="none" stroke="#000" stroke-width="0.7"/><rect x="74.7" y="64" width="3.6" height="5" fill="none" stroke="#000" stroke-width="0.7"/><rect x="79.3" y="64" width="3.6" height="5" fill="none" stroke="#000" stroke-width="0.7"/><rect x="83.9" y="64" width="3.6" height="5" fill="none" stroke="#000" stroke-width="0.7"/><rect x="88.5" y="64" width="3.6" height="5" fill="none" stroke="#000" stroke-width="0.7"/><rect x="93.1" y="64" width="3.6" height="5" fill="none" stroke="#000" stroke-width="0.7"/><rect x="97.7" y="64" width="3.6" height="5" fill="none" stroke="#000" stroke-width="0.7"/><rect x="27" y="71.5" width="13" height="24" fill="#fff" stroke="#000" stroke-width="1.1"/><rect x="29" y="73" width="9" height="13" fill="none" stroke="#1a9a1a" stroke-width="0.8"/><path d="M27 58 L40 58 M30 50 Q40 56 50 60" fill="none" stroke="#22aa22" stroke-width="0.6"/><rect x="56" y="54" width="4" height="14" fill="#444"/><rect x="9.2" y="100" width="21.6" height="8.4" fill="#333"/><rect x="10" y="103" width="20" height="0.6" fill="#999"/><rect x="10" y="105.5" width="20" height="0.6" fill="#999"/></symbol><symbol id="sheet1" viewBox="0 0 152 118"><use href="#frame"/><path d="M101 40.1 L113 38.8 L126.8 39.2 L126.8 66.9 L107.4 69.7 L103 69.7 Z" fill="#c2c2c2"/><circle cx="18.5" cy="24.3" r="1.2" fill="#fff" stroke="#111" stroke-width="0.6"/><path d="M18.5 25.5 V75.7" stroke="#111" stroke-width="0.5"/><circle cx="27.5" cy="24.3" r="1.2" fill="#fff" stroke="#111" stroke-width="0.6"/><path d="M27.5 25.5 V75.7" stroke="#111" stroke-width="0.5"/><circle cx="36.9" cy="24.3" r="1.2" fill="#fff" stroke="#111" stroke-width="0.6"/><path d="M36.9 25.5 V75.7" stroke="#111" stroke-width="0.5"/><circle cx="46.5" cy="24.3" r="1.2" fill="#fff" stroke="#111" stroke-width="0.6"/><path d="M46.5 25.5 V75.7" stroke="#111" stroke-width="0.5"/><circle cx="59.1" cy="24.3" r="1.2" fill="#fff" stroke="#111" stroke-width="0.6"/><path d="M59.1 25.5 V75.7" stroke="#111" stroke-width="0.5"/><circle cx="70.5" cy="24.3" r="1.2" fill="#fff" stroke="#111" stroke-width="0.6"/><path d="M70.5 25.5 V75.7" stroke="#111" stroke-width="0.5"/><circle cx="78.8" cy="24.3" r="1.2" fill="#fff" stroke="#111" stroke-width="0.6"/><path d="M78.8 25.5 V75.7" stroke="#111" stroke-width="0.5"/><circle cx="86.6" cy="24.3" r="1.2" fill="#fff" stroke="#111" stroke-width="0.6"/><path d="M86.6 25.5 V75.7" stroke="#111" stroke-width="0.5"/><circle cx="94.5" cy="24.3" r="1.2" fill="#fff" stroke="#111" stroke-width="0.6"/><path d="M94.5 25.5 V75.7" stroke="#111" stroke-width="0.5"/><circle cx="18.8" cy="75.5" r="1.1" fill="#fff" stroke="#111" stroke-width="0.6"/><circle cx="27.8" cy="75.5" r="1.1" fill="#fff" stroke="#111" stroke-width="0.6"/><circle cx="37.199999999999996" cy="75.5" r="1.1" fill="#fff" stroke="#111" stroke-width="0.6"/><circle cx="46.8" cy="75.5" r="1.1" fill="#fff" stroke="#111" stroke-width="0.6"/><circle cx="59.4" cy="75.5" r="1.1" fill="#fff" stroke="#111" stroke-width="0.6"/><circle cx="70.8" cy="75.5" r="1.1" fill="#fff" stroke="#111" stroke-width="0.6"/><circle cx="79.1" cy="75.5" r="1.1" fill="#fff" stroke="#111" stroke-width="0.6"/><circle cx="86.89999999999999" cy="75.5" r="1.1" fill="#fff" stroke="#111" stroke-width="0.6"/><circle cx="94.8" cy="75.5" r="1.1" fill="#fff" stroke="#111" stroke-width="0.6"/><circle cx="21.8" cy="75.5" r="1.1" fill="#fff" stroke="#111" stroke-width="0.6"/><circle cx="40.3" cy="75.5" r="1.1" fill="#fff" stroke="#111" stroke-width="0.6"/><circle cx="49.8" cy="75.5" r="1.1" fill="#fff" stroke="#111" stroke-width="0.6"/><circle cx="64.3" cy="75.5" r="1.1" fill="#fff" stroke="#111" stroke-width="0.6"/><rect x="18.5" y="25.4" width="78" height="2" fill="#333"/><rect x="18.5" y="27.4" width="78" height="10.9" fill="none" stroke="#111" stroke-width="0.7"/><path d="M19.5 27.4 V38.3" stroke="#000" stroke-width="0.9"/><path d="M23.2 27.4 V38.3" stroke="#000" stroke-width="0.7"/><path d="M28.6 27.4 V38.3" stroke="#000" stroke-width="0.7"/><path d="M31.6 27.4 V38.3" stroke="#000" stroke-width="0.9"/><path d="M36.3 27.4 V38.3" stroke="#000" stroke-width="0.9"/><path d="M39.6 27.4 V38.3" stroke="#000" stroke-width="0.5"/><path d="M42.8 27.4 V38.3" stroke="#000" stroke-width="0.9"/><path d="M46.6 27.4 V38.3" stroke="#000" stroke-width="0.9"/><path d="M51.5 27.4 V38.3" stroke="#000" stroke-width="0.9"/><path d="M56.5 27.4 V38.3" stroke="#000" stroke-width="0.9"/><path d="M60.3 27.4 V38.3" stroke="#000" stroke-width="0.9"/><path d="M62.9 27.4 V38.3" stroke="#000" stroke-width="0.5"/><path d="M65.9 27.4 V38.3" stroke="#000" stroke-width="0.9"/><path d="M70.0 27.4 V38.3" stroke="#000" stroke-width="0.9"/><path d="M73.1 27.4 V38.3" stroke="#000" stroke-width="0.9"/><path d="M76.0 27.4 V38.3" stroke="#000" stroke-width="0.9"/><path d="M80.4 27.4 V38.3" stroke="#000" stroke-width="0.7"/><path d="M84.1 27.4 V38.3" stroke="#000" stroke-width="0.9"/><path d="M89.5 27.4 V38.3" stroke="#000" stroke-width="0.7"/><path d="M93.9 27.4 V38.3" stroke="#000" stroke-width="0.9"/><rect x="79.9" y="33.9" width="2.8" height="1.0" fill="#000"/><rect x="46.9" y="29.3" width="2.5" height="1.5" fill="#000"/><rect x="91.0" y="31.2" width="2.5" height="2.3" fill="#000"/><rect x="36.9" y="32.3" width="2.9" height="1.8" fill="#000"/><rect x="46.0" y="30.6" width="2.6" height="1.3" fill="#000"/><rect x="64.3" y="32.3" width="2.1" height="1.2" fill="#000"/><rect x="68.4" y="34.5" width="1.6" height="1.5" fill="#000"/><rect x="87.2" y="32.5" width="1.5" height="1.0" fill="#000"/><rect x="75.5" y="31.1" width="1.9" height="1.4" fill="#000"/><rect x="66.5" y="33.4" width="1.6" height="1.1" fill="#000"/><rect x="93.0" y="34.5" width="1.0" height="1.8" fill="#000"/><rect x="70.4" y="31.4" width="2.5" height="2.4" fill="#000"/><rect x="63.3" y="31.3" width="1.4" height="1.4" fill="#000"/><rect x="30.3" y="29.7" width="1.4" height="2.3" fill="#000"/><rect x="59.3" y="33.8" width="2.8" height="2.2" fill="#000"/><rect x="22.7" y="34.6" width="1.2" height="2.2" fill="#000"/><rect x="81.9" y="32.9" width="1.8" height="1.1" fill="#000"/><rect x="25.4" y="32.8" width="1.5" height="1.8" fill="#000"/><path d="M18.5 34.6 H96.5" stroke="#000" stroke-width="0.6"/><rect x="12.5" y="38.3" width="5" height="31.4" fill="#bdbdbd"/><path d="M9.0 38.3 H107" stroke="#111" stroke-width="0.85"/><circle cx="8.3" cy="38.3" r="1" fill="#fff" stroke="#111" stroke-width="0.5"/><path d="M9.0 49.4 H107" stroke="#111" stroke-width="0.85"/><circle cx="8.3" cy="49.4" r="1" fill="#fff" stroke="#111" stroke-width="0.5"/><path d="M9.0 56.4 H107" stroke="#111" stroke-width="0.85"/><circle cx="8.3" cy="56.4" r="1" fill="#fff" stroke="#111" stroke-width="0.5"/><path d="M9.0 62.7 H107" stroke="#111" stroke-width="0.85"/><circle cx="8.3" cy="62.7" r="1" fill="#fff" stroke="#111" stroke-width="0.5"/><path d="M9.0 69.7 H107" stroke="#111" stroke-width="0.85"/><circle cx="8.3" cy="69.7" r="1" fill="#fff" stroke="#111" stroke-width="0.5"/><rect x="11.5" y="38.3" width="90.5" height="31.4" fill="none" stroke="#000" stroke-width="1"/><path d="M35.2 43.7 H41.5" stroke="#000" stroke-width="0.8"/><path d="M62.6 63.5 H67.1" stroke="#000" stroke-width="1.0"/><path d="M50.6 67.7 V69.7" stroke="#000" stroke-width="0.8"/><path d="M82.6 67.8 V69.7" stroke="#000" stroke-width="1.0"/><rect x="61.1" y="51.4" width="2.0" height="2.2" fill="#000"/><path d="M92.0 55.4 V58.9" stroke="#000" stroke-width="0.5"/><path d="M38.4 49.4 V53.5" stroke="#000" stroke-width="1.0"/><rect x="13.4" y="67.0" width="2.5" height="1.5" fill="#000"/><path d="M52.1 64.4 H57.4" stroke="#000" stroke-width="0.8"/><rect x="13.5" y="46.7" width="3.1" height="2.0" fill="#000"/><path d="M76.8 45.1 H81.9" stroke="#000" stroke-width="1.0"/><path d="M13.8 42.2 V45.4" stroke="#000" stroke-width="0.5"/><rect x="97.4" y="41.8" width="3.1" height="1.2" fill="#000"/><path d="M58.4 61.5 H64.3" stroke="#000" stroke-width="0.8"/><path d="M80.4 51.6 H85.6" stroke="#000" stroke-width="0.5"/><path d="M95.8 46.6 H102.0" stroke="#000" stroke-width="1.0"/><path d="M82.6 68.0 V69.7" stroke="#000" stroke-width="0.8"/><path d="M19.4 61.2 V65.7" stroke="#000" stroke-width="0.8"/><path d="M40.3 42.3 H47.3" stroke="#000" stroke-width="0.8"/><path d="M82.8 52.0 H85.2" stroke="#000" stroke-width="0.8"/><path d="M39.0 44.8 H42.3" stroke="#000" stroke-width="1.0"/><path d="M25.5 47.6 V51.7" stroke="#000" stroke-width="0.8"/><rect x="79.3" y="56.9" width="2.7" height="1.5" fill="#000"/><path d="M62.6 66.8 V69.7" stroke="#000" stroke-width="0.8"/><path d="M94.3 51.0 V53.6" stroke="#000" stroke-width="1.0"/><path d="M25.4 45.8 V50.0" stroke="#000" stroke-width="0.8"/><path d="M76.7 62.7 H80.1" stroke="#000" stroke-width="0.8"/><path d="M55.5 49.9 V53.3" stroke="#000" stroke-width="0.5"/><path d="M49.3 65.4 H52.3" stroke="#000" stroke-width="0.8"/><path d="M18.7 49.0 V52.2" stroke="#000" stroke-width="0.5"/><rect x="76.1" y="48.0" width="3.3" height="2.1" fill="#000"/><rect x="24.8" y="41.9" width="3.2" height="2.4" fill="#000"/><path d="M78.7 62.5 H81.9" stroke="#000" stroke-width="0.8"/><path d="M84.3 51.8 H86.7" stroke="#000" stroke-width="0.8"/><rect x="95.5" y="58.1" width="1.2" height="2.8" fill="#000"/><path d="M62.3 49.3 V52.9" stroke="#000" stroke-width="1.0"/><rect x="34.7" y="47.8" width="3.4" height="2.6" fill="#000"/><path d="M30.7 45.0 H38.0" stroke="#000" stroke-width="0.5"/><path d="M32.2 57.7 H36.9" stroke="#000" stroke-width="0.5"/><path d="M42.9 53.8 H48.4" stroke="#000" stroke-width="1.0"/><path d="M50.3 58.1 H57.5" stroke="#000" stroke-width="0.8"/><path d="M32.0 50.8 V56.2" stroke="#000" stroke-width="1.0"/><path d="M80.4 48.6 H83.7" stroke="#000" stroke-width="0.5"/><path d="M54.6 52.9 V58.9" stroke="#000" stroke-width="0.8"/><path d="M21.0 68.5 V69.7" stroke="#000" stroke-width="0.5"/><path d="M29.5 46.5 H32.2" stroke="#000" stroke-width="0.8"/><rect x="17.1" y="65.7" width="2.7" height="2.2" fill="#000"/><rect x="67.8" y="54.3" width="1.3" height="2.4" fill="#000"/><path d="M73.1 47.3 V49.6" stroke="#000" stroke-width="0.5"/><rect x="36.0" y="57.2" width="3.4" height="2.6" fill="#000"/><path d="M21.7 49.9 V53.2" stroke="#000" stroke-width="0.8"/><path d="M43.9 45.4 V50.6" stroke="#000" stroke-width="0.8"/><path d="M56.8 43.3 H62.5" stroke="#000" stroke-width="0.5"/><path d="M16.0 50.5 H22.5" stroke="#000" stroke-width="0.5"/><path d="M68.0 55.2 V59.9" stroke="#000" stroke-width="0.8"/><path d="M14.1 56.5 V59.1" stroke="#000" stroke-width="0.5"/><path d="M38.9 58.1 H42.9" stroke="#000" stroke-width="0.5"/><path d="M49.9 50.3 V52.7" stroke="#000" stroke-width="0.8"/><path d="M58.4 48.5 V53.5" stroke="#000" stroke-width="0.8"/><path d="M20.5 58.1 H28.0" stroke="#000" stroke-width="1.0"/><path d="M86.6 63.6 H94.4" stroke="#000" stroke-width="1.0"/><path d="M40.0 40.0 H47.6" stroke="#000" stroke-width="1.0"/><path d="M70.5 64.9 V69.7" stroke="#000" stroke-width="0.5"/><path d="M82.2 50.2 H87.3" stroke="#000" stroke-width="0.8"/><path d="M80.7 59.0 V63.2" stroke="#000" stroke-width="1.0"/><path d="M47.1 42.7 V48.1" stroke="#000" stroke-width="0.5"/><path d="M68.7 52.9 V55.7" stroke="#000" stroke-width="0.5"/><path d="M83.9 61.3 V65.0" stroke="#000" stroke-width="0.8"/><path d="M82.0 57.3 H84.7" stroke="#000" stroke-width="0.5"/><rect x="34.7" y="65.4" width="2.0" height="2.0" fill="#000"/><path d="M72.9 54.8 V59.8" stroke="#000" stroke-width="0.5"/><path d="M66.3 68.6 H71.8" stroke="#000" stroke-width="1.0"/><path d="M88.2 68.2 H93.8" stroke="#000" stroke-width="0.8"/><path d="M63.7 63.5 V69.2" stroke="#000" stroke-width="0.5"/><path d="M23.5 65.7 V68.3" stroke="#000" stroke-width="0.8"/><path d="M91.0 39.0 H95.2" stroke="#000" stroke-width="1.0"/><path d="M72.3 41.8 H75.1" stroke="#000" stroke-width="0.5"/><path d="M64.4 67.3 H69.2" stroke="#000" stroke-width="0.8"/><path d="M72.3 46.6 V50.4" stroke="#000" stroke-width="0.5"/><path d="M27.2 46.2 H29.8" stroke="#000" stroke-width="1.0"/><path d="M74.3 46.5 V50.5" stroke="#000" stroke-width="0.5"/><path d="M51.2 65.6 V69.7" stroke="#000" stroke-width="0.5"/><path d="M30.7 39.8 H33.0" stroke="#000" stroke-width="0.8"/><path d="M78.0 45.6 V48.2" stroke="#000" stroke-width="1.0"/><path d="M96.2 57.3 V62.7" stroke="#000" stroke-width="1.0"/><path d="M77.8 58.3 V61.7" stroke="#000" stroke-width="1.0"/><rect x="52.3" y="65.3" width="1.3" height="1.3" fill="#000"/><rect x="26.9" y="61.7" width="2.7" height="1.5" fill="#000"/><rect x="37.0" y="63.0" width="1.6" height="2.5" fill="#000"/><path d="M41.6 67.9 V69.7" stroke="#000" stroke-width="0.8"/><path d="M68.0 57.5 V60.4" stroke="#000" stroke-width="1.0"/><rect x="63.7" y="66.0" width="2.3" height="1.8" fill="#000"/><path d="M17.8 61.8 V65.1" stroke="#000" stroke-width="0.8"/><path d="M15.7 60.7 H18.3" stroke="#000" stroke-width="0.8"/><rect x="62.6" y="53.8" width="1.4" height="2.6" fill="#000"/><path d="M25.9 64.1 V69.7" stroke="#000" stroke-width="0.8"/><path d="M83.3 53.0 H86.6" stroke="#000" stroke-width="0.8"/><path d="M15.0 45.9 V51.2" stroke="#000" stroke-width="1.0"/><path d="M67.4 51.1 H71.0" stroke="#000" stroke-width="0.8"/><path d="M58.0 49.1 H61.9" stroke="#000" stroke-width="0.8"/><rect x="36.1" y="67.7" width="1.8" height="2.0" fill="#000"/><path d="M80.8 39.1 V42.7" stroke="#000" stroke-width="1.0"/><path d="M41.2 45.1 V49.1" stroke="#000" stroke-width="0.5"/><path d="M65.0 57.8 H68.5" stroke="#000" stroke-width="0.8"/><path d="M72.6 59.6 H74.8" stroke="#000" stroke-width="0.5"/><path d="M76.8 63.4 H84.5" stroke="#000" stroke-width="0.8"/><path d="M86.2 57.2 H94.0" stroke="#000" stroke-width="1.0"/><rect x="67.6" y="46.7" width="1.9" height="2.9" fill="#000"/><rect x="82.1" y="39.0" width="3.1" height="1.2" fill="#000"/><rect x="62.3" y="45.5" width="2.8" height="1.3" fill="#000"/><path d="M84.5 63.0 V67.3" stroke="#000" stroke-width="0.5"/><rect x="29.5" y="54.1" width="2.5" height="1.6" fill="#000"/><path d="M13.2 51.4 H21.0" stroke="#000" stroke-width="1.0"/><path d="M96.1 66.1 H101.9" stroke="#000" stroke-width="1.0"/><path d="M55.6 50.2 V54.7" stroke="#000" stroke-width="0.8"/><path d="M17.2 59.4 H24.4" stroke="#000" stroke-width="1.0"/><path d="M86.0 42.2 H88.3" stroke="#000" stroke-width="0.5"/><rect x="80.4" y="49.9" width="2.3" height="1.2" fill="#000"/><path d="M92.0 68.3 V69.7" stroke="#000" stroke-width="1.0"/><path d="M26.7 58.2 H31.0" stroke="#000" stroke-width="1.0"/><path d="M12.9 51.0 H20.5" stroke="#000" stroke-width="0.5"/><path d="M22.4 46.9 V52.0" stroke="#000" stroke-width="0.5"/><path d="M70.8 62.4 V65.9" stroke="#000" stroke-width="1.0"/><rect x="96.7" y="63.7" width="2.7" height="1.6" fill="#000"/><rect x="94.5" y="49.6" width="2.7" height="2.9" fill="#000"/><path d="M38.7 41.3 V46.9" stroke="#000" stroke-width="1.0"/><rect x="59.6" y="67.0" width="2.0" height="1.6" fill="#000"/><path d="M56.4 67.0 H60.0" stroke="#000" stroke-width="0.8"/><path d="M96.4 67.8 H102.0" stroke="#000" stroke-width="1.0"/><path d="M58.9 45.5 V48.2" stroke="#000" stroke-width="1.0"/><rect x="79.2" y="59.0" width="1.9" height="1.9" fill="#000"/><rect x="57.6" y="47.0" width="1.7" height="2.3" fill="#000"/><path d="M61.3 51.0 H65.2" stroke="#000" stroke-width="0.8"/><path d="M93.1 46.2 H99.2" stroke="#000" stroke-width="0.5"/><path d="M23.0 54.2 H30.8" stroke="#000" stroke-width="0.5"/><path d="M33.5 67.5 H37.0" stroke="#000" stroke-width="0.5"/><path d="M42.0 67.3 V69.7" stroke="#000" stroke-width="1.0"/><rect x="34.4" y="41.2" width="2.1" height="1.6" fill="#000"/><path d="M25.0 53.0 H28.0" stroke="#000" stroke-width="0.8"/><path d="M69.3 66.2 V69.6" stroke="#000" stroke-width="0.8"/><path d="M72.4 56.1 V59.6" stroke="#000" stroke-width="0.8"/><path d="M93.9 39.6 V44.2" stroke="#000" stroke-width="0.5"/><path d="M92.2 66.1 H95.0" stroke="#000" stroke-width="0.5"/><path d="M27.2 53.9 H32.0" stroke="#000" stroke-width="1.0"/><path d="M33.7 48.6 H35.8" stroke="#000" stroke-width="0.5"/><path d="M90.2 56.3 V59.7" stroke="#000" stroke-width="0.5"/><path d="M40.5 54.9 H42.9" stroke="#000" stroke-width="0.8"/><rect x="63.9" y="42.6" width="3.2" height="2.0" fill="#000"/><path d="M18.2 40.5 V45.7" stroke="#000" stroke-width="0.8"/><path d="M29.6 65.0 V69.5" stroke="#000" stroke-width="1.0"/><path d="M69.1 44.5 V47.5" stroke="#000" stroke-width="0.5"/><path d="M24.0 52.4 V54.8" stroke="#000" stroke-width="1.0"/><path d="M79.1 57.8 H85.0" stroke="#000" stroke-width="1.0"/><path d="M78.3 47.5 V50.3" stroke="#000" stroke-width="0.5"/><path d="M90.9 39.4 V44.5" stroke="#000" stroke-width="0.5"/><path d="M78.2 43.5 H80.5" stroke="#000" stroke-width="0.8"/><path d="M66.0 66.2 H71.9" stroke="#000" stroke-width="1.0"/><path d="M54.6 55.1 V60.0" stroke="#000" stroke-width="1.0"/><path d="M19.3 39.9 V44.0" stroke="#000" stroke-width="0.8"/><path d="M88.5 67.0 V69.7" stroke="#000" stroke-width="0.5"/><rect x="17.5" y="62.8" width="1.3" height="1.7" fill="#000"/><path d="M19.6 55.4 H27.3" stroke="#000" stroke-width="1.0"/><rect x="38.7" y="42.2" width="2.3" height="1.6" fill="#000"/><rect x="20.4" y="54.5" width="1.9" height="1.9" fill="#000"/><path d="M86.2 58.1 V60.1" stroke="#000" stroke-width="0.8"/><rect x="97.0" y="50.3" width="1.5" height="1.7" fill="#000"/><path d="M91.2 45.4 H95.1" stroke="#000" stroke-width="0.5"/><rect x="39.7" y="65.0" width="1.4" height="1.5" fill="#000"/><path d="M25.4 54.5 V59.2" stroke="#000" stroke-width="0.5"/><path d="M66.7 45.0 V49.7" stroke="#000" stroke-width="0.8"/><rect x="12.6" y="53.5" width="3.2" height="2.9" fill="#000"/><path d="M88.7 50.8 V55.9" stroke="#000" stroke-width="0.8"/><rect x="53.2" y="66.3" width="1.8" height="2.4" fill="#000"/><path d="M68.1 55.9 H72.6" stroke="#000" stroke-width="0.8"/><path d="M35.7 66.9 V69.7" stroke="#000" stroke-width="0.5"/><path d="M49.5 54.9 H54.6" stroke="#000" stroke-width="1.0"/><path d="M48.4 57.9 H51.4" stroke="#000" stroke-width="0.8"/><path d="M87.5 40.5 V45.2" stroke="#000" stroke-width="0.8"/><path d="M67.6 47.2 V50.6" stroke="#000" stroke-width="0.8"/><path d="M90.7 39.9 V43.7" stroke="#000" stroke-width="0.8"/><path d="M94.2 43.2 V47.2" stroke="#000" stroke-width="0.8"/><path d="M92.0 44.7 H98.1" stroke="#000" stroke-width="0.8"/><path d="M87.2 47.9 H94.1" stroke="#000" stroke-width="0.8"/><path d="M31.9 66.9 H38.6" stroke="#000" stroke-width="0.5"/><path d="M81.6 56.7 V60.6" stroke="#000" stroke-width="1.0"/><path d="M79.0 58.6 V62.6" stroke="#000" stroke-width="0.8"/><path d="M88.9 57.7 H91.5" stroke="#000" stroke-width="1.0"/><path d="M72.0 52.6 H76.2" stroke="#000" stroke-width="1.0"/><path d="M53.1 53.3 V55.9" stroke="#000" stroke-width="0.5"/><path d="M20.3 49.8 V52.2" stroke="#000" stroke-width="0.8"/><path d="M35.2 47.8 V53.7" stroke="#000" stroke-width="0.8"/><path d="M34.7 67.0 V69.7" stroke="#000" stroke-width="0.8"/><rect x="35.2" y="67.1" width="3.1" height="1.7" fill="#000"/><path d="M93.6 53.9 H98.4" stroke="#000" stroke-width="1.0"/><path d="M13.8 51.9 V56.0" stroke="#000" stroke-width="0.5"/><path d="M40.9 46.6 V51.7" stroke="#000" stroke-width="1.0"/><path d="M78.7 65.0 V69.7" stroke="#000" stroke-width="0.8"/><rect x="46.8" y="47.3" width="2.4" height="1.9" fill="#000"/><rect x="90.9" y="56.6" width="3.1" height="2.9" fill="#000"/><rect x="35.7" y="58.8" width="2.1" height="2.8" fill="#000"/><path d="M18.4 41.2 H22.4" stroke="#000" stroke-width="0.5"/><path d="M29.7 56.7 V61.2" stroke="#000" stroke-width="0.5"/><path d="M97.0 67.9 V69.7" stroke="#000" stroke-width="1.0"/><rect x="46.3" y="40.4" width="3.4" height="2.1" fill="#000"/><path d="M96.3 68.3 V69.7" stroke="#000" stroke-width="1.0"/><path d="M50.2 68.3 H53.5" stroke="#000" stroke-width="0.8"/><path d="M14.2 53.5 V58.0" stroke="#000" stroke-width="0.8"/><path d="M60.7 59.2 V61.5" stroke="#000" stroke-width="0.5"/><path d="M69.2 38.9 H76.2" stroke="#000" stroke-width="0.8"/><rect x="43.9" y="51.4" width="3.4" height="2.6" fill="#000"/><path d="M37.4 40.5 V42.5" stroke="#000" stroke-width="0.5"/><rect x="31.3" y="41.1" width="1.4" height="2.2" fill="#000"/><rect x="53.3" y="51.0" width="2.1" height="1.7" fill="#000"/><path d="M48.8 43.7 H51.0" stroke="#000" stroke-width="1.0"/><path d="M61.9 63.1 H64.9" stroke="#000" stroke-width="0.8"/><path d="M27.5 51.1 H34.1" stroke="#000" stroke-width="0.5"/><path d="M83.2 51.2 V55.8" stroke="#000" stroke-width="1.0"/><path d="M83.7 55.3 H89.4" stroke="#000" stroke-width="0.5"/><path d="M66.6 45.3 V48.9" stroke="#000" stroke-width="0.5"/><path d="M54.2 54.5 V57.4" stroke="#000" stroke-width="0.5"/><path d="M53.6 62.3 H57.7" stroke="#000" stroke-width="0.5"/><path d="M67.3 46.7 V50.9" stroke="#000" stroke-width="1.0"/><path d="M89.8 53.7 V56.0" stroke="#000" stroke-width="0.8"/><rect x="39.5" y="52.8" width="2.9" height="2.6" fill="#000"/><path d="M81.1 62.2 V65.2" stroke="#000" stroke-width="0.5"/><path d="M26.0 66.7 V69.7" stroke="#000" stroke-width="0.5"/><path d="M85.9 56.8 V61.2" stroke="#000" stroke-width="0.8"/><path d="M87.3 52.6 H92.9" stroke="#000" stroke-width="0.8"/><path d="M52.6 67.8 V69.7" stroke="#000" stroke-width="1.0"/><rect x="59.1" y="60.8" width="2.9" height="1.8" fill="#000"/><path d="M14.9 63.7 V68.3" stroke="#000" stroke-width="0.8"/><path d="M74.6 39.4 V42.1" stroke="#000" stroke-width="0.8"/><path d="M60.0 54.0 V59.2" stroke="#000" stroke-width="0.8"/><path d="M29.3 63.1 V65.7" stroke="#000" stroke-width="0.8"/><path d="M49.4 50.1 H53.5" stroke="#000" stroke-width="0.5"/><rect x="56.8" y="41.1" width="1.8" height="2.1" fill="#000"/><path d="M59.4 53.6 H66.2" stroke="#000" stroke-width="0.8"/><path d="M38.9 67.7 H43.1" stroke="#000" stroke-width="0.5"/><path d="M78.6 53.9 H83.2" stroke="#000" stroke-width="0.5"/><rect x="77.5" y="65.5" width="2.4" height="2.5" fill="#000"/><path d="M54.3 49.4 H61.5" stroke="#000" stroke-width="1.0"/><path d="M38.4 51.3 V54.9" stroke="#000" stroke-width="0.5"/><rect x="66.4" y="43.4" width="3.0" height="2.0" fill="#000"/><path d="M27.3 51.2 H31.6" stroke="#000" stroke-width="0.5"/><rect x="24.6" y="67.1" width="1.8" height="2.3" fill="#000"/><path d="M28.2 52.0 V56.9" stroke="#000" stroke-width="0.8"/><path d="M44.1 44.0 V48.8" stroke="#000" stroke-width="0.8"/><path d="M74.2 46.7 H76.4" stroke="#000" stroke-width="1.0"/><rect x="23.7" y="58.3" width="3.1" height="2.9" fill="#000"/><path d="M89.8 63.8 H95.9" stroke="#000" stroke-width="1.0"/><path d="M26.0 48.4 V51.4" stroke="#000" stroke-width="1.0"/><path d="M93.1 49.3 H98.9" stroke="#000" stroke-width="1.0"/><rect x="43.3" y="68.0" width="1.7" height="1.8" fill="#000"/><path d="M68.8 53.6 V57.0" stroke="#000" stroke-width="1.0"/><path d="M56.8 53.5 H58.8" stroke="#000" stroke-width="0.5"/><rect x="36.4" y="52.6" width="2" height="1" fill="#d020d0"/><rect x="23.1" y="50.7" width="2" height="1" fill="#d020d0"/><rect x="56.8" y="49.3" width="2" height="1" fill="#d020d0"/><rect x="31.1" y="52.4" width="2" height="1" fill="#d020d0"/><rect x="41.3" y="47.1" width="2" height="1" fill="#d020d0"/><rect x="30.7" y="47.8" width="2" height="1" fill="#d020d0"/><rect x="26.2" y="46.5" width="2" height="1" fill="#d020d0"/><rect x="32.6" y="54.7" width="2" height="1" fill="#d020d0"/></symbol><symbol id="sheet2" viewBox="0 0 152 118"><use href="#frame"/><path d="M101 40.1 L113 38.8 L126.8 39.2 L126.8 66.9 L107.4 69.7 L103 69.7 Z" fill="#c2c2c2"/><circle cx="18.5" cy="24.3" r="1.2" fill="#fff" stroke="#111" stroke-width="0.6"/><path d="M18.5 25.5 V75.7" stroke="#111" stroke-width="0.5"/><circle cx="27.5" cy="24.3" r="1.2" fill="#fff" stroke="#111" stroke-width="0.6"/><path d="M27.5 25.5 V75.7" stroke="#111" stroke-width="0.5"/><circle cx="36.9" cy="24.3" r="1.2" fill="#fff" stroke="#111" stroke-width="0.6"/><path d="M36.9 25.5 V75.7" stroke="#111" stroke-width="0.5"/><circle cx="46.5" cy="24.3" r="1.2" fill="#fff" stroke="#111" stroke-width="0.6"/><path d="M46.5 25.5 V75.7" stroke="#111" stroke-width="0.5"/><circle cx="59.1" cy="24.3" r="1.2" fill="#fff" stroke="#111" stroke-width="0.6"/><path d="M59.1 25.5 V75.7" stroke="#111" stroke-width="0.5"/><circle cx="70.5" cy="24.3" r="1.2" fill="#fff" stroke="#111" stroke-width="0.6"/><path d="M70.5 25.5 V75.7" stroke="#111" stroke-width="0.5"/><circle cx="78.8" cy="24.3" r="1.2" fill="#fff" stroke="#111" stroke-width="0.6"/><path d="M78.8 25.5 V75.7" stroke="#111" stroke-width="0.5"/><circle cx="86.6" cy="24.3" r="1.2" fill="#fff" stroke="#111" stroke-width="0.6"/><path d="M86.6 25.5 V75.7" stroke="#111" stroke-width="0.5"/><circle cx="94.5" cy="24.3" r="1.2" fill="#fff" stroke="#111" stroke-width="0.6"/><path d="M94.5 25.5 V75.7" stroke="#111" stroke-width="0.5"/><circle cx="18.8" cy="75.5" r="1.1" fill="#fff" stroke="#111" stroke-width="0.6"/><circle cx="27.8" cy="75.5" r="1.1" fill="#fff" stroke="#111" stroke-width="0.6"/><circle cx="37.199999999999996" cy="75.5" r="1.1" fill="#fff" stroke="#111" stroke-width="0.6"/><circle cx="46.8" cy="75.5" r="1.1" fill="#fff" stroke="#111" stroke-width="0.6"/><circle cx="59.4" cy="75.5" r="1.1" fill="#fff" stroke="#111" stroke-width="0.6"/><circle cx="70.8" cy="75.5" r="1.1" fill="#fff" stroke="#111" stroke-width="0.6"/><circle cx="79.1" cy="75.5" r="1.1" fill="#fff" stroke="#111" stroke-width="0.6"/><circle cx="86.89999999999999" cy="75.5" r="1.1" fill="#fff" stroke="#111" stroke-width="0.6"/><circle cx="94.8" cy="75.5" r="1.1" fill="#fff" stroke="#111" stroke-width="0.6"/><circle cx="21.8" cy="75.5" r="1.1" fill="#fff" stroke="#111" stroke-width="0.6"/><circle cx="40.3" cy="75.5" r="1.1" fill="#fff" stroke="#111" stroke-width="0.6"/><circle cx="49.8" cy="75.5" r="1.1" fill="#fff" stroke="#111" stroke-width="0.6"/><circle cx="64.3" cy="75.5" r="1.1" fill="#fff" stroke="#111" stroke-width="0.6"/><rect x="18.5" y="25.4" width="78" height="2" fill="#333"/><rect x="18.5" y="27.4" width="78" height="10.9" fill="none" stroke="#111" stroke-width="0.7"/><path d="M19.5 27.4 V38.3" stroke="#000" stroke-width="0.9"/><path d="M23.1 27.4 V38.3" stroke="#000" stroke-width="0.9"/><path d="M26.2 27.4 V38.3" stroke="#000" stroke-width="0.5"/><path d="M29.3 27.4 V38.3" stroke="#000" stroke-width="0.9"/><path d="M33.8 27.4 V38.3" stroke="#000" stroke-width="0.9"/><path d="M38.6 27.4 V38.3" stroke="#000" stroke-width="0.5"/><path d="M43.5 27.4 V38.3" stroke="#000" stroke-width="0.7"/><path d="M48.2 27.4 V38.3" stroke="#000" stroke-width="0.5"/><path d="M52.0 27.4 V38.3" stroke="#000" stroke-width="0.9"/><path d="M57.5 27.4 V38.3" stroke="#000" stroke-width="0.5"/><path d="M60.1 27.4 V38.3" stroke="#000" stroke-width="0.5"/><path d="M65.4 27.4 V38.3" stroke="#000" stroke-width="0.9"/><path d="M70.5 27.4 V38.3" stroke="#000" stroke-width="0.9"/><path d="M73.9 27.4 V38.3" stroke="#000" stroke-width="0.5"/><path d="M78.4 27.4 V38.3" stroke="#000" stroke-width="0.7"/><path d="M83.5 27.4 V38.3" stroke="#000" stroke-width="0.5"/><path d="M88.0 27.4 V38.3" stroke="#000" stroke-width="0.7"/><path d="M90.7 27.4 V38.3" stroke="#000" stroke-width="0.9"/><path d="M94.3 27.4 V38.3" stroke="#000" stroke-width="0.5"/><rect x="42.7" y="34.4" width="1.1" height="1.1" fill="#000"/><rect x="68.9" y="33.8" width="2.6" height="2.5" fill="#000"/><rect x="83.5" y="30.6" width="2.5" height="2.4" fill="#000"/><rect x="26.0" y="32.0" width="1.3" height="1.2" fill="#000"/><rect x="55.0" y="33.0" width="2.9" height="1.2" fill="#000"/><rect x="56.9" y="35.0" width="2.5" height="1.8" fill="#000"/><rect x="37.2" y="32.8" width="1.5" height="2.0" fill="#000"/><rect x="67.7" y="31.3" width="2.6" height="1.6" fill="#000"/><rect x="54.2" y="34.0" width="1.5" height="1.3" fill="#000"/><rect x="62.1" y="31.6" width="2.7" height="1.4" fill="#000"/><rect x="46.8" y="29.3" width="1.9" height="1.5" fill="#000"/><rect x="52.7" y="33.6" width="1.1" height="2.5" fill="#000"/><rect x="72.4" y="33.9" width="2.1" height="1.9" fill="#000"/><rect x="49.7" y="31.4" width="1.4" height="1.5" fill="#000"/><rect x="41.0" y="31.0" width="2.8" height="2.2" fill="#000"/><rect x="67.1" y="29.1" width="1.5" height="1.8" fill="#000"/><rect x="70.9" y="31.5" width="2.3" height="2.4" fill="#000"/><rect x="39.1" y="31.3" width="2.5" height="1.5" fill="#000"/><path d="M18.5 34.6 H96.5" stroke="#000" stroke-width="0.6"/><rect x="12.5" y="38.3" width="5" height="31.4" fill="#bdbdbd"/><path d="M9.0 38.3 H107" stroke="#111" stroke-width="0.85"/><circle cx="8.3" cy="38.3" r="1" fill="#fff" stroke="#111" stroke-width="0.5"/><path d="M9.0 49.4 H107" stroke="#111" stroke-width="0.85"/><circle cx="8.3" cy="49.4" r="1" fill="#fff" stroke="#111" stroke-width="0.5"/><path d="M9.0 56.4 H107" stroke="#111" stroke-width="0.85"/><circle cx="8.3" cy="56.4" r="1" fill="#fff" stroke="#111" stroke-width="0.5"/><path d="M9.0 62.7 H107" stroke="#111" stroke-width="0.85"/><circle cx="8.3" cy="62.7" r="1" fill="#fff" stroke="#111" stroke-width="0.5"/><path d="M9.0 69.7 H107" stroke="#111" stroke-width="0.85"/><circle cx="8.3" cy="69.7" r="1" fill="#fff" stroke="#111" stroke-width="0.5"/><rect x="11.5" y="38.3" width="90.5" height="31.4" fill="none" stroke="#000" stroke-width="1"/><path d="M74.2 50.7 H78.9" stroke="#000" stroke-width="0.5"/><path d="M26.9 45.7 H32.8" stroke="#000" stroke-width="1.0"/><path d="M30.7 52.1 H33.0" stroke="#000" stroke-width="0.5"/><path d="M17.0 66.7 V69.7" stroke="#000" stroke-width="0.5"/><path d="M28.2 48.7 H35.3" stroke="#000" stroke-width="0.5"/><path d="M24.5 53.9 H31.3" stroke="#000" stroke-width="0.8"/><path d="M57.1 48.0 V53.6" stroke="#000" stroke-width="0.8"/><rect x="67.9" y="51.1" width="3.1" height="2.7" fill="#000"/><path d="M41.7 44.5 H44.5" stroke="#000" stroke-width="0.8"/><path d="M36.6 64.8 H42.3" stroke="#000" stroke-width="0.5"/><path d="M21.0 68.2 V69.7" stroke="#000" stroke-width="0.5"/><path d="M91.1 52.6 H95.4" stroke="#000" stroke-width="1.0"/><path d="M60.7 53.0 H67.3" stroke="#000" stroke-width="1.0"/><rect x="87.1" y="64.6" width="1.6" height="1.5" fill="#000"/><path d="M83.0 39.2 H87.9" stroke="#000" stroke-width="1.0"/><path d="M76.5 45.9 H79.9" stroke="#000" stroke-width="0.8"/><path d="M59.7 66.9 H65.5" stroke="#000" stroke-width="1.0"/><rect x="37.6" y="45.3" width="3.0" height="2.9" fill="#000"/><path d="M79.4 50.5 H83.5" stroke="#000" stroke-width="0.8"/><path d="M43.0 52.2 V55.2" stroke="#000" stroke-width="0.5"/><path d="M26.4 39.7 V44.8" stroke="#000" stroke-width="1.0"/><path d="M79.6 63.7 V67.1" stroke="#000" stroke-width="0.5"/><path d="M90.3 61.6 V65.0" stroke="#000" stroke-width="0.5"/><path d="M67.7 54.3 H71.2" stroke="#000" stroke-width="1.0"/><path d="M73.0 43.5 V47.3" stroke="#000" stroke-width="0.5"/><path d="M36.9 56.1 H38.9" stroke="#000" stroke-width="0.5"/><path d="M33.1 66.2 H39.8" stroke="#000" stroke-width="0.8"/><path d="M24.4 54.9 H30.0" stroke="#000" stroke-width="0.5"/><path d="M64.3 58.2 H70.6" stroke="#000" stroke-width="1.0"/><rect x="64.2" y="61.7" width="1.7" height="1.5" fill="#000"/><path d="M48.5 67.9 H53.3" stroke="#000" stroke-width="0.8"/><path d="M60.3 52.8 H63.5" stroke="#000" stroke-width="1.0"/><rect x="80.1" y="60.9" width="1.6" height="2.7" fill="#000"/><rect x="85.2" y="67.1" width="1.5" height="1.3" fill="#000"/><path d="M57.6 61.2 H65.2" stroke="#000" stroke-width="0.8"/><path d="M79.1 65.9 V68.6" stroke="#000" stroke-width="0.8"/><path d="M64.0 67.7 V69.7" stroke="#000" stroke-width="1.0"/><path d="M26.2 58.4 V61.2" stroke="#000" stroke-width="0.5"/><path d="M32.3 66.5 V69.7" stroke="#000" stroke-width="1.0"/><rect x="29.7" y="45.6" width="2.2" height="2.1" fill="#000"/><path d="M76.4 56.8 V60.9" stroke="#000" stroke-width="0.8"/><path d="M22.0 39.1 H27.5" stroke="#000" stroke-width="0.8"/><rect x="24.6" y="38.9" width="1.6" height="2.2" fill="#000"/><path d="M37.3 42.9 H39.7" stroke="#000" stroke-width="0.5"/><path d="M78.3 62.2 H82.2" stroke="#000" stroke-width="0.5"/><path d="M87.7 45.8 V48.7" stroke="#000" stroke-width="0.5"/><path d="M64.9 53.7 H67.1" stroke="#000" stroke-width="1.0"/><rect x="89.8" y="47.1" width="2.2" height="2.0" fill="#000"/><rect x="21.0" y="49.7" width="2.6" height="1.9" fill="#000"/><rect x="88.4" y="66.2" width="3.1" height="1.4" fill="#000"/><rect x="52.7" y="63.3" width="1.2" height="2.6" fill="#000"/><rect x="78.6" y="58.2" width="2.2" height="2.8" fill="#000"/><path d="M97.9 41.0 H101.7" stroke="#000" stroke-width="0.8"/><path d="M27.1 65.3 V69.7" stroke="#000" stroke-width="0.5"/><path d="M67.8 61.1 H71.3" stroke="#000" stroke-width="1.0"/><path d="M61.0 54.7 V60.6" stroke="#000" stroke-width="0.5"/><rect x="69.8" y="55.5" width="3.2" height="2.5" fill="#000"/><rect x="96.2" y="50.3" width="2.5" height="2.0" fill="#000"/><rect x="46.9" y="40.3" width="3.4" height="1.9" fill="#000"/><path d="M93.5 42.7 V48.7" stroke="#000" stroke-width="1.0"/><path d="M40.3 61.8 V64.6" stroke="#000" stroke-width="0.5"/><path d="M62.7 58.1 V60.5" stroke="#000" stroke-width="1.0"/><path d="M77.9 65.5 H81.2" stroke="#000" stroke-width="1.0"/><path d="M42.5 54.1 V58.7" stroke="#000" stroke-width="0.5"/><path d="M90.7 64.6 H96.2" stroke="#000" stroke-width="1.0"/><path d="M87.5 50.9 H93.5" stroke="#000" stroke-width="0.8"/><rect x="24.2" y="44.4" width="3.1" height="1.6" fill="#000"/><rect x="22.0" y="47.9" width="3.4" height="1.8" fill="#000"/><path d="M82.6 48.7 V52.7" stroke="#000" stroke-width="0.8"/><rect x="72.7" y="63.7" width="1.5" height="2.2" fill="#000"/><path d="M24.7 47.7 H29.1" stroke="#000" stroke-width="0.8"/><path d="M48.8 43.6 V46.6" stroke="#000" stroke-width="0.5"/><path d="M21.7 43.4 H25.5" stroke="#000" stroke-width="0.5"/><rect x="19.3" y="57.0" width="1.7" height="2.5" fill="#000"/><rect x="74.3" y="67.6" width="2.6" height="2.0" fill="#000"/><path d="M44.0 42.5 H49.8" stroke="#000" stroke-width="0.8"/><path d="M96.2 52.7 V57.9" stroke="#000" stroke-width="0.5"/><path d="M93.9 49.9 H96.9" stroke="#000" stroke-width="0.8"/><path d="M78.2 52.7 H83.1" stroke="#000" stroke-width="0.5"/><path d="M37.2 39.1 V41.4" stroke="#000" stroke-width="0.8"/><rect x="71.7" y="44.4" width="2.7" height="2.4" fill="#000"/><path d="M32.4 62.6 H38.1" stroke="#000" stroke-width="0.5"/><path d="M50.8 41.5 V45.8" stroke="#000" stroke-width="1.0"/><path d="M79.4 39.8 H81.5" stroke="#000" stroke-width="1.0"/><path d="M77.8 55.7 H82.2" stroke="#000" stroke-width="0.8"/><path d="M95.1 42.1 H99.6" stroke="#000" stroke-width="0.5"/><path d="M21.7 45.9 H25.2" stroke="#000" stroke-width="1.0"/><path d="M78.4 64.3 H83.6" stroke="#000" stroke-width="0.5"/><path d="M91.8 51.8 V54.5" stroke="#000" stroke-width="0.8"/><rect x="45.5" y="47.6" width="2.7" height="1.9" fill="#000"/><path d="M51.0 60.9 H56.2" stroke="#000" stroke-width="0.8"/><rect x="91.3" y="42.7" width="2.3" height="2.9" fill="#000"/><path d="M62.1 47.0 H68.0" stroke="#000" stroke-width="0.5"/><path d="M55.7 58.1 V61.3" stroke="#000" stroke-width="0.5"/><path d="M93.6 61.7 V66.2" stroke="#000" stroke-width="0.5"/><path d="M51.5 60.6 V63.0" stroke="#000" stroke-width="0.8"/><path d="M20.3 53.3 V57.0" stroke="#000" stroke-width="0.5"/><path d="M43.6 51.2 V56.8" stroke="#000" stroke-width="0.8"/><rect x="18.3" y="61.2" width="2.4" height="1.5" fill="#000"/><path d="M64.9 66.5 V69.7" stroke="#000" stroke-width="0.5"/><path d="M92.5 48.3 V53.2" stroke="#000" stroke-width="0.5"/><path d="M26.3 40.1 H32.1" stroke="#000" stroke-width="1.0"/><rect x="39.5" y="47.8" width="2.7" height="1.3" fill="#000"/><path d="M63.9 63.3 V67.3" stroke="#000" stroke-width="1.0"/><path d="M73.8 47.8 H79.9" stroke="#000" stroke-width="1.0"/><rect x="92.1" y="59.8" width="1.4" height="2.7" fill="#000"/><rect x="86.0" y="44.7" width="1.9" height="2.2" fill="#000"/><path d="M34.0 61.3 V64.1" stroke="#000" stroke-width="1.0"/><path d="M43.3 63.6 H46.0" stroke="#000" stroke-width="1.0"/><path d="M23.0 50.5 H26.4" stroke="#000" stroke-width="0.5"/><path d="M72.7 68.4 H79.3" stroke="#000" stroke-width="0.5"/><path d="M13.5 63.7 V68.1" stroke="#000" stroke-width="1.0"/><rect x="49.0" y="48.3" width="3.2" height="2.0" fill="#000"/><path d="M78.8 41.2 H86.1" stroke="#000" stroke-width="0.8"/><path d="M71.0 46.8 H78.8" stroke="#000" stroke-width="1.0"/><path d="M97.5 68.0 V69.7" stroke="#000" stroke-width="0.8"/><path d="M38.2 56.4 H45.2" stroke="#000" stroke-width="0.5"/><path d="M35.5 66.8 V69.0" stroke="#000" stroke-width="0.5"/><path d="M87.3 67.3 V69.7" stroke="#000" stroke-width="0.8"/><path d="M62.8 40.2 V44.7" stroke="#000" stroke-width="1.0"/><path d="M53.2 42.9 V48.6" stroke="#000" stroke-width="0.8"/><rect x="47.4" y="50.4" width="2.4" height="2.7" fill="#000"/><rect x="70.5" y="59.8" width="3.2" height="2.4" fill="#000"/><path d="M54.8 64.2 H58.3" stroke="#000" stroke-width="0.5"/><path d="M84.7 68.6 H86.8" stroke="#000" stroke-width="0.8"/><path d="M72.7 68.3 V69.7" stroke="#000" stroke-width="1.0"/><rect x="16.6" y="53.6" width="2.8" height="2.8" fill="#000"/><path d="M38.8 56.7 H46.2" stroke="#000" stroke-width="1.0"/><path d="M61.7 53.8 H65.3" stroke="#000" stroke-width="0.8"/><path d="M36.9 64.1 V67.3" stroke="#000" stroke-width="0.8"/><path d="M28.0 50.6 H31.2" stroke="#000" stroke-width="0.5"/><path d="M80.6 48.2 V52.2" stroke="#000" stroke-width="0.8"/><path d="M54.5 46.5 V50.5" stroke="#000" stroke-width="0.5"/><path d="M64.3 46.6 V51.5" stroke="#000" stroke-width="0.8"/><path d="M43.9 67.0 H50.7" stroke="#000" stroke-width="0.5"/><path d="M79.6 59.4 V65.4" stroke="#000" stroke-width="0.8"/><path d="M89.3 47.5 H96.4" stroke="#000" stroke-width="0.5"/><path d="M93.6 48.9 V54.6" stroke="#000" stroke-width="1.0"/><path d="M13.3 64.7 H15.5" stroke="#000" stroke-width="1.0"/><rect x="53.9" y="67.8" width="2.8" height="1.3" fill="#000"/><path d="M84.9 46.7 H91.3" stroke="#000" stroke-width="0.8"/><rect x="74.3" y="52.3" width="1.7" height="2.0" fill="#000"/><path d="M77.7 53.1 V55.4" stroke="#000" stroke-width="0.5"/><path d="M74.4 63.0 H79.4" stroke="#000" stroke-width="1.0"/><path d="M58.9 41.9 H61.0" stroke="#000" stroke-width="1.0"/><rect x="38.4" y="65.8" width="2.3" height="2.9" fill="#000"/><path d="M79.6 63.4 H86.6" stroke="#000" stroke-width="0.5"/><rect x="91.4" y="58.4" width="2.1" height="1.4" fill="#000"/><path d="M52.3 55.8 H57.2" stroke="#000" stroke-width="0.8"/><path d="M40.8 67.7 V69.7" stroke="#000" stroke-width="1.0"/><path d="M78.4 47.6 V51.6" stroke="#000" stroke-width="1.0"/><path d="M75.7 61.4 V65.1" stroke="#000" stroke-width="0.8"/><path d="M19.2 63.4 H23.0" stroke="#000" stroke-width="0.5"/><path d="M24.2 39.6 H30.7" stroke="#000" stroke-width="0.8"/><rect x="31.6" y="43.9" width="3.4" height="2.7" fill="#000"/><path d="M24.8 57.2 V62.5" stroke="#000" stroke-width="0.5"/><rect x="96.8" y="58.5" width="2.7" height="3.0" fill="#000"/><path d="M13.5 47.5 V53.3" stroke="#000" stroke-width="0.8"/><path d="M14.3 55.9 V60.7" stroke="#000" stroke-width="0.5"/><path d="M57.4 66.1 H61.4" stroke="#000" stroke-width="1.0"/><rect x="84.1" y="61.9" width="1.9" height="2.6" fill="#000"/><path d="M40.0 67.6 V69.7" stroke="#000" stroke-width="0.8"/><path d="M65.9 45.3 V48.3" stroke="#000" stroke-width="0.5"/><path d="M48.5 42.9 V45.9" stroke="#000" stroke-width="0.8"/><rect x="68.8" y="59.6" width="2.2" height="2.9" fill="#000"/><rect x="33.6" y="67.0" width="1.4" height="1.2" fill="#000"/><path d="M64.2 50.2 V52.5" stroke="#000" stroke-width="0.8"/><path d="M82.0 43.9 V46.8" stroke="#000" stroke-width="0.5"/><path d="M49.7 67.0 H54.7" stroke="#000" stroke-width="0.8"/><path d="M51.5 61.6 V65.0" stroke="#000" stroke-width="0.5"/><rect x="69.5" y="47.5" width="1.2" height="1.7" fill="#000"/><path d="M88.1 64.2 V67.4" stroke="#000" stroke-width="0.5"/><path d="M58.3 40.4 H64.4" stroke="#000" stroke-width="0.8"/><path d="M32.0 40.2 H36.8" stroke="#000" stroke-width="1.0"/><path d="M27.1 41.4 H34.6" stroke="#000" stroke-width="0.8"/><path d="M56.6 64.7 H61.6" stroke="#000" stroke-width="0.8"/><path d="M76.1 50.5 V55.4" stroke="#000" stroke-width="0.8"/><path d="M56.4 49.6 V52.2" stroke="#000" stroke-width="0.5"/><path d="M34.4 53.2 V56.8" stroke="#000" stroke-width="0.5"/><path d="M63.3 66.3 H66.3" stroke="#000" stroke-width="1.0"/><rect x="55.9" y="51.9" width="3.4" height="1.8" fill="#000"/><path d="M96.4 55.9 V60.7" stroke="#000" stroke-width="1.0"/><rect x="48.0" y="67.1" width="3.2" height="2.0" fill="#000"/><rect x="84.2" y="60.0" width="3.0" height="1.4" fill="#000"/><path d="M71.5 67.8 V69.7" stroke="#000" stroke-width="1.0"/><path d="M62.9 54.3 H65.4" stroke="#000" stroke-width="0.5"/><path d="M87.3 42.9 H94.6" stroke="#000" stroke-width="0.8"/><path d="M84.9 66.5 V69.7" stroke="#000" stroke-width="0.5"/><path d="M75.7 49.8 V52.9" stroke="#000" stroke-width="0.5"/><path d="M67.3 41.6 V44.9" stroke="#000" stroke-width="0.5"/><rect x="84.0" y="63.0" width="1.5" height="2.3" fill="#000"/><path d="M65.9 63.3 H70.3" stroke="#000" stroke-width="0.5"/><path d="M61.7 56.4 H64.2" stroke="#000" stroke-width="1.0"/><rect x="23.2" y="39.0" width="2.3" height="2.7" fill="#000"/><path d="M97.5 54.0 H101.6" stroke="#000" stroke-width="1.0"/><rect x="82.2" y="47.0" width="2.6" height="2.6" fill="#000"/><rect x="37.0" y="51.3" width="1.5" height="2.5" fill="#000"/><path d="M48.4 50.7 H51.6" stroke="#000" stroke-width="0.5"/><path d="M63.3 66.8 V69.4" stroke="#000" stroke-width="0.5"/><rect x="47.4" y="64.3" width="1.4" height="1.9" fill="#000"/><rect x="23.7" y="46.4" width="3.5" height="1.5" fill="#000"/><path d="M25.4 44.1 V48.6" stroke="#000" stroke-width="0.5"/><path d="M82.9 66.5 H87.6" stroke="#000" stroke-width="0.5"/><path d="M83.5 55.2 V60.9" stroke="#000" stroke-width="0.8"/><path d="M90.9 67.4 V69.7" stroke="#000" stroke-width="0.8"/><path d="M82.5 43.5 H89.5" stroke="#000" stroke-width="1.0"/><path d="M90.7 54.5 V60.2" stroke="#000" stroke-width="0.8"/><rect x="28.7" y="65.2" width="2.5" height="1.6" fill="#000"/><path d="M49.2 61.2 V65.0" stroke="#000" stroke-width="0.5"/><path d="M76.0 53.0 V57.1" stroke="#000" stroke-width="1.0"/><path d="M49.2 51.1 H54.1" stroke="#000" stroke-width="0.5"/><path d="M44.9 45.4 V50.9" stroke="#000" stroke-width="0.5"/><path d="M57.3 58.4 H61.8" stroke="#000" stroke-width="1.0"/><path d="M17.6 58.7 V62.5" stroke="#000" stroke-width="1.0"/><path d="M58.3 45.6 V49.3" stroke="#000" stroke-width="0.5"/><rect x="34.6" y="64.6" width="1.8" height="1.3" fill="#000"/><path d="M51.8 60.8 V65.8" stroke="#000" stroke-width="0.8"/><path d="M29.6 55.8 V58.8" stroke="#000" stroke-width="0.5"/><rect x="66.5" y="44.2" width="1.7" height="1.2" fill="#000"/><path d="M20.1 53.8 V59.1" stroke="#000" stroke-width="1.0"/><rect x="14.1" y="52.2" width="2.1" height="2.9" fill="#000"/><path d="M55.7 62.5 V67.5" stroke="#000" stroke-width="0.5"/><path d="M68.3 60.6 V63.9" stroke="#000" stroke-width="0.5"/><rect x="60.9" y="50.2" width="3.0" height="2.5" fill="#000"/><path d="M55.7 68.3 H59.3" stroke="#000" stroke-width="0.5"/><path d="M44.7 40.1 V42.5" stroke="#000" stroke-width="0.5"/><rect x="49.8" y="39.3" width="1.4" height="2.9" fill="#000"/><path d="M59.7 55.6 V59.6" stroke="#000" stroke-width="1.0"/><path d="M76.2 59.3 H79.8" stroke="#000" stroke-width="0.8"/><path d="M50.3 41.5 V47.2" stroke="#000" stroke-width="0.5"/><rect x="13.9" y="39.4" width="3.1" height="2.2" fill="#000"/><rect x="12.7" y="54.5" width="2.9" height="2.9" fill="#000"/><rect x="54.0" y="53.6" width="2.6" height="2.8" fill="#000"/><rect x="81.6" y="60.3" width="2.3" height="1.3" fill="#000"/><path d="M19.0 55.2 V59.8" stroke="#000" stroke-width="1.0"/><path d="M80.4 40.2 H86.7" stroke="#000" stroke-width="0.8"/><path d="M42.4 40.4 H45.0" stroke="#000" stroke-width="0.8"/><path d="M56.0 63.5 V67.5" stroke="#000" stroke-width="0.8"/><rect x="64.7" y="44.7" width="3.0" height="2.7" fill="#000"/><path d="M96.7 63.1 V68.5" stroke="#000" stroke-width="0.5"/><rect x="63.6" y="64.9" width="3.1" height="1.3" fill="#000"/><path d="M53.1 56.0 H60.5" stroke="#000" stroke-width="0.8"/><path d="M80.3 53.4 V59.0" stroke="#000" stroke-width="0.8"/><path d="M59.5 68.1 H67.2" stroke="#000" stroke-width="0.8"/><path d="M42.8 49.4 H48.4" stroke="#000" stroke-width="0.5"/><path d="M96.7 55.0 H100.5" stroke="#000" stroke-width="1.0"/><path d="M90.1 64.5 V68.4" stroke="#000" stroke-width="1.0"/><path d="M77.3 54.9 V59.7" stroke="#000" stroke-width="0.5"/><path d="M40.3 51.6 H45.0" stroke="#000" stroke-width="0.8"/><path d="M46.7 52.7 H52.0" stroke="#000" stroke-width="0.5"/><rect x="70.7" y="43.9" width="2.9" height="2.5" fill="#000"/><rect x="46.6" y="46.3" width="2.0" height="1.9" fill="#000"/><rect x="25.8" y="66.1" width="1.4" height="1.6" fill="#000"/><path d="M41.6 43.6 H43.9" stroke="#000" stroke-width="0.8"/><path d="M51.1 53.7 H56.5" stroke="#000" stroke-width="1.0"/></symbol><symbol id="sheet3" viewBox="0 0 152 118"><use href="#frame"/><path d="M101 40.1 L113 38.8 L126.8 39.2 L126.8 66.9 L107.4 69.7 L103 69.7 Z" fill="#c2c2c2"/><circle cx="18.5" cy="24.3" r="1.2" fill="#fff" stroke="#111" stroke-width="0.6"/><path d="M18.5 25.5 V75.7" stroke="#111" stroke-width="0.5"/><circle cx="27.5" cy="24.3" r="1.2" fill="#fff" stroke="#111" stroke-width="0.6"/><path d="M27.5 25.5 V75.7" stroke="#111" stroke-width="0.5"/><circle cx="36.9" cy="24.3" r="1.2" fill="#fff" stroke="#111" stroke-width="0.6"/><path d="M36.9 25.5 V75.7" stroke="#111" stroke-width="0.5"/><circle cx="46.5" cy="24.3" r="1.2" fill="#fff" stroke="#111" stroke-width="0.6"/><path d="M46.5 25.5 V75.7" stroke="#111" stroke-width="0.5"/><circle cx="59.1" cy="24.3" r="1.2" fill="#fff" stroke="#111" stroke-width="0.6"/><path d="M59.1 25.5 V75.7" stroke="#111" stroke-width="0.5"/><circle cx="70.5" cy="24.3" r="1.2" fill="#fff" stroke="#111" stroke-width="0.6"/><path d="M70.5 25.5 V75.7" stroke="#111" stroke-width="0.5"/><circle cx="78.8" cy="24.3" r="1.2" fill="#fff" stroke="#111" stroke-width="0.6"/><path d="M78.8 25.5 V75.7" stroke="#111" stroke-width="0.5"/><circle cx="86.6" cy="24.3" r="1.2" fill="#fff" stroke="#111" stroke-width="0.6"/><path d="M86.6 25.5 V75.7" stroke="#111" stroke-width="0.5"/><circle cx="94.5" cy="24.3" r="1.2" fill="#fff" stroke="#111" stroke-width="0.6"/><path d="M94.5 25.5 V75.7" stroke="#111" stroke-width="0.5"/><circle cx="18.8" cy="75.5" r="1.1" fill="#fff" stroke="#111" stroke-width="0.6"/><circle cx="27.8" cy="75.5" r="1.1" fill="#fff" stroke="#111" stroke-width="0.6"/><circle cx="37.199999999999996" cy="75.5" r="1.1" fill="#fff" stroke="#111" stroke-width="0.6"/><circle cx="46.8" cy="75.5" r="1.1" fill="#fff" stroke="#111" stroke-width="0.6"/><circle cx="59.4" cy="75.5" r="1.1" fill="#fff" stroke="#111" stroke-width="0.6"/><circle cx="70.8" cy="75.5" r="1.1" fill="#fff" stroke="#111" stroke-width="0.6"/><circle cx="79.1" cy="75.5" r="1.1" fill="#fff" stroke="#111" stroke-width="0.6"/><circle cx="86.89999999999999" cy="75.5" r="1.1" fill="#fff" stroke="#111" stroke-width="0.6"/><circle cx="94.8" cy="75.5" r="1.1" fill="#fff" stroke="#111" stroke-width="0.6"/><circle cx="21.8" cy="75.5" r="1.1" fill="#fff" stroke="#111" stroke-width="0.6"/><circle cx="40.3" cy="75.5" r="1.1" fill="#fff" stroke="#111" stroke-width="0.6"/><circle cx="49.8" cy="75.5" r="1.1" fill="#fff" stroke="#111" stroke-width="0.6"/><circle cx="64.3" cy="75.5" r="1.1" fill="#fff" stroke="#111" stroke-width="0.6"/><rect x="18.5" y="25.4" width="78" height="2" fill="#333"/><rect x="18.5" y="27.4" width="78" height="10.9" fill="none" stroke="#111" stroke-width="0.7"/><path d="M19.5 27.4 V38.3" stroke="#000" stroke-width="0.5"/><path d="M23.4 27.4 V38.3" stroke="#000" stroke-width="0.7"/><path d="M26.3 27.4 V38.3" stroke="#000" stroke-width="0.5"/><path d="M29.2 27.4 V38.3" stroke="#000" stroke-width="0.5"/><path d="M33.4 27.4 V38.3" stroke="#000" stroke-width="0.9"/><path d="M38.1 27.4 V38.3" stroke="#000" stroke-width="0.5"/><path d="M43.6 27.4 V38.3" stroke="#000" stroke-width="0.5"/><path d="M48.1 27.4 V38.3" stroke="#000" stroke-width="0.5"/><path d="M51.3 27.4 V38.3" stroke="#000" stroke-width="0.9"/><path d="M55.1 27.4 V38.3" stroke="#000" stroke-width="0.7"/><path d="M58.2 27.4 V38.3" stroke="#000" stroke-width="0.9"/><path d="M61.0 27.4 V38.3" stroke="#000" stroke-width="0.5"/><path d="M65.8 27.4 V38.3" stroke="#000" stroke-width="0.7"/><path d="M69.3 27.4 V38.3" stroke="#000" stroke-width="0.5"/><path d="M72.8 27.4 V38.3" stroke="#000" stroke-width="0.7"/><path d="M77.1 27.4 V38.3" stroke="#000" stroke-width="0.5"/><path d="M80.2 27.4 V38.3" stroke="#000" stroke-width="0.5"/><path d="M84.0 27.4 V38.3" stroke="#000" stroke-width="0.9"/><path d="M88.1 27.4 V38.3" stroke="#000" stroke-width="0.5"/><path d="M93.1 27.4 V38.3" stroke="#000" stroke-width="0.7"/><rect x="30.1" y="33.8" width="1.8" height="1.1" fill="#000"/><rect x="58.8" y="31.6" width="2.6" height="1.3" fill="#000"/><rect x="51.4" y="31.2" width="1.7" height="2.2" fill="#000"/><rect x="55.2" y="30.6" width="1.6" height="1.9" fill="#000"/><rect x="55.1" y="32.9" width="1.6" height="1.3" fill="#000"/><rect x="75.2" y="29.6" width="2.5" height="2.3" fill="#000"/><rect x="61.0" y="34.6" width="2.7" height="1.4" fill="#000"/><rect x="32.0" y="29.2" width="2.6" height="1.6" fill="#000"/><rect x="90.8" y="33.0" width="1.6" height="1.5" fill="#000"/><rect x="81.9" y="34.3" width="1.2" height="1.3" fill="#000"/><rect x="44.0" y="31.4" width="1.1" height="2.1" fill="#000"/><rect x="39.1" y="34.2" width="2.3" height="2.4" fill="#000"/><rect x="34.1" y="30.0" width="3.0" height="1.2" fill="#000"/><rect x="23.3" y="32.7" width="2.0" height="2.3" fill="#000"/><rect x="92.6" y="31.9" width="2.2" height="2.3" fill="#000"/><rect x="55.4" y="33.8" width="2.2" height="1.7" fill="#000"/><rect x="81.2" y="29.1" width="2.0" height="2.2" fill="#000"/><rect x="54.2" y="30.4" width="1.2" height="1.9" fill="#000"/><path d="M18.5 34.6 H96.5" stroke="#000" stroke-width="0.6"/><rect x="12.5" y="38.3" width="5" height="31.4" fill="#bdbdbd"/><path d="M9.0 38.3 H107" stroke="#111" stroke-width="0.85"/><circle cx="8.3" cy="38.3" r="1" fill="#fff" stroke="#111" stroke-width="0.5"/><path d="M9.0 49.4 H107" stroke="#111" stroke-width="0.85"/><circle cx="8.3" cy="49.4" r="1" fill="#fff" stroke="#111" stroke-width="0.5"/><path d="M9.0 56.4 H107" stroke="#111" stroke-width="0.85"/><circle cx="8.3" cy="56.4" r="1" fill="#fff" stroke="#111" stroke-width="0.5"/><path d="M9.0 62.7 H107" stroke="#111" stroke-width="0.85"/><circle cx="8.3" cy="62.7" r="1" fill="#fff" stroke="#111" stroke-width="0.5"/><path d="M9.0 69.7 H107" stroke="#111" stroke-width="0.85"/><circle cx="8.3" cy="69.7" r="1" fill="#fff" stroke="#111" stroke-width="0.5"/><rect x="11.5" y="38.3" width="90.5" height="31.4" fill="none" stroke="#000" stroke-width="1"/><path d="M50.6 68.5 H56.0" stroke="#000" stroke-width="1.0"/><path d="M16.8 57.2 H19.9" stroke="#000" stroke-width="0.8"/><path d="M71.4 55.4 V59.4" stroke="#000" stroke-width="1.0"/><path d="M86.0 50.8 V55.7" stroke="#000" stroke-width="0.8"/><path d="M38.9 63.3 H43.1" stroke="#000" stroke-width="1.0"/><rect x="79.5" y="61.1" width="2.8" height="2.2" fill="#000"/><path d="M26.7 64.3 H31.3" stroke="#000" stroke-width="0.5"/><path d="M33.5 65.2 H40.8" stroke="#000" stroke-width="0.8"/><path d="M58.8 46.1 V51.0" stroke="#000" stroke-width="0.5"/><rect x="15.3" y="57.2" width="1.8" height="1.6" fill="#000"/><path d="M82.1 49.7 V55.0" stroke="#000" stroke-width="0.8"/><path d="M73.0 46.0 H76.8" stroke="#000" stroke-width="0.8"/><rect x="22.1" y="45.3" width="3.2" height="2.4" fill="#000"/><path d="M88.4 52.3 V56.9" stroke="#000" stroke-width="0.8"/><path d="M15.4 53.2 H20.2" stroke="#000" stroke-width="0.5"/><path d="M96.4 47.1 H100.1" stroke="#000" stroke-width="0.5"/><path d="M62.0 50.9 V53.8" stroke="#000" stroke-width="1.0"/><path d="M24.7 57.7 V63.1" stroke="#000" stroke-width="1.0"/><path d="M61.6 44.4 H66.8" stroke="#000" stroke-width="0.8"/><rect x="70.1" y="54.3" width="1.9" height="1.9" fill="#000"/><path d="M70.4 55.4 H74.9" stroke="#000" stroke-width="1.0"/><path d="M33.2 59.9 H40.9" stroke="#000" stroke-width="1.0"/><path d="M90.5 47.0 H95.8" stroke="#000" stroke-width="0.8"/><rect x="33.7" y="53.5" width="1.5" height="1.3" fill="#000"/><path d="M39.2 40.1 V44.3" stroke="#000" stroke-width="0.8"/><path d="M59.2 41.1 V45.0" stroke="#000" stroke-width="0.8"/><path d="M53.5 53.1 V58.7" stroke="#000" stroke-width="1.0"/><rect x="68.1" y="45.8" width="2.3" height="1.8" fill="#000"/><rect x="92.6" y="50.5" width="2.6" height="1.6" fill="#000"/><rect x="31.2" y="40.5" width="2.2" height="2.8" fill="#000"/><path d="M47.7 61.3 H55.5" stroke="#000" stroke-width="1.0"/><path d="M56.7 48.3 H60.2" stroke="#000" stroke-width="0.5"/><path d="M51.3 42.9 V48.4" stroke="#000" stroke-width="0.5"/><path d="M23.2 50.2 H27.2" stroke="#000" stroke-width="0.8"/><path d="M78.7 63.7 V69.0" stroke="#000" stroke-width="0.8"/><path d="M41.8 44.4 H45.3" stroke="#000" stroke-width="0.5"/><path d="M22.4 64.3 V67.5" stroke="#000" stroke-width="1.0"/><path d="M79.2 51.7 H81.7" stroke="#000" stroke-width="1.0"/><path d="M86.9 53.1 H91.5" stroke="#000" stroke-width="0.5"/><path d="M17.8 56.8 H24.9" stroke="#000" stroke-width="1.0"/><path d="M17.6 48.5 V53.9" stroke="#000" stroke-width="1.0"/><path d="M88.1 55.3 V60.4" stroke="#000" stroke-width="0.8"/><path d="M24.5 47.9 H29.1" stroke="#000" stroke-width="0.8"/><path d="M85.7 68.0 H88.1" stroke="#000" stroke-width="1.0"/><path d="M26.9 59.4 H34.6" stroke="#000" stroke-width="1.0"/><path d="M82.4 64.8 H87.1" stroke="#000" stroke-width="0.5"/><path d="M27.2 54.1 V58.5" stroke="#000" stroke-width="0.8"/><path d="M54.2 44.8 V46.8" stroke="#000" stroke-width="0.8"/><path d="M69.2 44.4 H76.3" stroke="#000" stroke-width="0.5"/><path d="M30.2 41.7 V45.6" stroke="#000" stroke-width="0.5"/><rect x="79.7" y="40.9" width="2.7" height="1.7" fill="#000"/><rect x="26.9" y="41.7" width="3.2" height="1.8" fill="#000"/><path d="M27.9 41.0 V44.2" stroke="#000" stroke-width="0.5"/><path d="M94.8 50.8 H97.4" stroke="#000" stroke-width="0.5"/><path d="M56.5 43.6 H58.9" stroke="#000" stroke-width="0.5"/><path d="M46.3 47.4 V52.3" stroke="#000" stroke-width="0.5"/><rect x="40.3" y="46.3" width="2.6" height="2.9" fill="#000"/><path d="M43.2 51.2 V56.7" stroke="#000" stroke-width="0.5"/><path d="M96.0 60.1 V63.0" stroke="#000" stroke-width="0.5"/><path d="M61.1 43.2 V47.8" stroke="#000" stroke-width="0.5"/><path d="M89.2 47.2 H92.6" stroke="#000" stroke-width="0.8"/><path d="M26.2 52.8 H29.6" stroke="#000" stroke-width="1.0"/><path d="M43.0 67.4 H50.3" stroke="#000" stroke-width="0.8"/><path d="M73.7 50.0 V54.3" stroke="#000" stroke-width="1.0"/><path d="M16.1 52.6 H22.9" stroke="#000" stroke-width="0.8"/><path d="M48.6 54.1 V59.9" stroke="#000" stroke-width="0.8"/><path d="M54.5 54.5 V56.5" stroke="#000" stroke-width="1.0"/><rect x="71.3" y="68.0" width="1.8" height="2.9" fill="#000"/><path d="M36.4 52.3 H42.0" stroke="#000" stroke-width="0.8"/><path d="M28.5 53.5 H34.0" stroke="#000" stroke-width="1.0"/><path d="M63.9 47.0 H71.6" stroke="#000" stroke-width="1.0"/><path d="M96.8 64.5 H101.2" stroke="#000" stroke-width="0.5"/><path d="M52.3 55.4 V61.2" stroke="#000" stroke-width="0.8"/><path d="M67.2 50.3 H74.0" stroke="#000" stroke-width="0.5"/><path d="M41.5 67.2 V69.7" stroke="#000" stroke-width="0.5"/><path d="M22.7 46.4 H28.7" stroke="#000" stroke-width="0.8"/><path d="M16.4 55.2 H19.0" stroke="#000" stroke-width="0.5"/><rect x="77.5" y="50.2" width="1.3" height="2.2" fill="#000"/><path d="M25.6 42.3 V44.7" stroke="#000" stroke-width="0.5"/><path d="M84.3 48.4 V54.4" stroke="#000" stroke-width="0.8"/><rect x="23.0" y="61.8" width="3.5" height="1.3" fill="#000"/><rect x="26.6" y="51.8" width="2.4" height="2.8" fill="#000"/><path d="M31.7 52.9 V55.8" stroke="#000" stroke-width="1.0"/><path d="M67.6 39.5 H73.0" stroke="#000" stroke-width="0.8"/><path d="M97.7 56.9 H101.0" stroke="#000" stroke-width="0.5"/><path d="M51.4 43.1 V48.6" stroke="#000" stroke-width="0.5"/><path d="M71.6 50.5 V52.9" stroke="#000" stroke-width="0.8"/><path d="M53.7 54.6 H59.0" stroke="#000" stroke-width="0.8"/><path d="M55.7 41.7 V44.3" stroke="#000" stroke-width="0.5"/><path d="M90.2 63.2 H95.2" stroke="#000" stroke-width="1.0"/><rect x="78.9" y="59.1" width="3.0" height="2.5" fill="#000"/><path d="M41.7 63.4 H45.4" stroke="#000" stroke-width="0.8"/><path d="M37.2 64.8 V67.6" stroke="#000" stroke-width="0.8"/><path d="M29.3 59.6 V63.9" stroke="#000" stroke-width="1.0"/><rect x="67.4" y="55.1" width="2.7" height="2.6" fill="#000"/><path d="M33.0 52.7 H39.2" stroke="#000" stroke-width="1.0"/><path d="M38.1 49.4 V52.8" stroke="#000" stroke-width="0.8"/><path d="M34.5 67.1 V69.7" stroke="#000" stroke-width="1.0"/><rect x="64.2" y="63.1" width="3.5" height="2.9" fill="#000"/><path d="M39.6 54.3 V59.9" stroke="#000" stroke-width="0.8"/><path d="M44.3 67.2 V69.7" stroke="#000" stroke-width="1.0"/><path d="M66.2 68.3 V69.7" stroke="#000" stroke-width="0.5"/><path d="M47.3 59.9 V64.3" stroke="#000" stroke-width="1.0"/><path d="M75.5 44.1 V49.4" stroke="#000" stroke-width="0.5"/><path d="M31.9 41.3 H34.5" stroke="#000" stroke-width="1.0"/><path d="M56.6 59.9 V64.1" stroke="#000" stroke-width="1.0"/><path d="M95.7 55.1 H102.0" stroke="#000" stroke-width="0.8"/><path d="M70.8 40.6 H77.8" stroke="#000" stroke-width="0.5"/><path d="M75.1 64.7 V67.1" stroke="#000" stroke-width="0.8"/><path d="M46.9 54.1 V58.6" stroke="#000" stroke-width="0.8"/><path d="M65.9 61.2 V65.8" stroke="#000" stroke-width="0.8"/><path d="M67.3 61.9 V66.9" stroke="#000" stroke-width="1.0"/><rect x="87.0" y="54.1" width="3.4" height="1.7" fill="#000"/><path d="M52.2 52.6 H56.9" stroke="#000" stroke-width="0.8"/><path d="M90.6 44.2 V48.3" stroke="#000" stroke-width="0.5"/><rect x="92.4" y="48.5" width="2.8" height="2.8" fill="#000"/><path d="M12.9 50.0 H20.4" stroke="#000" stroke-width="1.0"/><path d="M38.2 53.3 H41.6" stroke="#000" stroke-width="1.0"/><rect x="33.4" y="50.2" width="3.0" height="1.6" fill="#000"/><path d="M35.4 60.2 H39.7" stroke="#000" stroke-width="0.5"/><path d="M88.9 53.6 H94.1" stroke="#000" stroke-width="0.8"/><path d="M85.7 44.6 H89.4" stroke="#000" stroke-width="1.0"/><path d="M61.2 62.6 V66.6" stroke="#000" stroke-width="1.0"/><path d="M88.5 54.7 H92.1" stroke="#000" stroke-width="0.5"/><path d="M63.9 44.9 V48.9" stroke="#000" stroke-width="0.5"/><rect x="50.9" y="40.5" width="1.7" height="3.0" fill="#000"/><rect x="96.4" y="51.8" width="2.7" height="2.8" fill="#000"/><path d="M44.7 52.9 V58.0" stroke="#000" stroke-width="1.0"/><path d="M54.4 43.0 H62.2" stroke="#000" stroke-width="0.8"/><path d="M63.6 42.9 H69.3" stroke="#000" stroke-width="1.0"/><path d="M51.9 50.4 V55.9" stroke="#000" stroke-width="1.0"/><path d="M66.8 66.1 H71.9" stroke="#000" stroke-width="0.5"/><path d="M54.5 58.3 H62.4" stroke="#000" stroke-width="1.0"/><path d="M86.1 68.5 H93.2" stroke="#000" stroke-width="0.8"/><rect x="23.6" y="46.1" width="2.0" height="1.2" fill="#000"/><path d="M84.5 56.4 H91.3" stroke="#000" stroke-width="0.8"/><rect x="67.4" y="65.8" width="2.7" height="1.8" fill="#000"/><path d="M55.9 44.2 H63.7" stroke="#000" stroke-width="0.8"/><path d="M33.4 45.5 V48.4" stroke="#000" stroke-width="0.5"/><path d="M47.7 54.7 H54.3" stroke="#000" stroke-width="1.0"/><path d="M45.3 53.0 V57.7" stroke="#000" stroke-width="1.0"/><path d="M56.7 46.4 V49.8" stroke="#000" stroke-width="0.5"/><path d="M45.8 60.5 V62.7" stroke="#000" stroke-width="0.8"/><path d="M86.0 57.0 V62.8" stroke="#000" stroke-width="0.8"/><path d="M54.3 57.5 V60.2" stroke="#000" stroke-width="1.0"/><path d="M23.6 54.7 V57.4" stroke="#000" stroke-width="0.5"/><rect x="45.7" y="41.0" width="1.7" height="2.7" fill="#000"/><path d="M63.1 60.7 V63.6" stroke="#000" stroke-width="0.8"/><path d="M21.2 39.1 H26.8" stroke="#000" stroke-width="0.5"/><path d="M58.5 49.3 H63.1" stroke="#000" stroke-width="1.0"/><path d="M55.2 66.0 V69.7" stroke="#000" stroke-width="0.8"/><path d="M79.6 67.0 H86.0" stroke="#000" stroke-width="0.8"/><path d="M77.5 64.2 H83.8" stroke="#000" stroke-width="0.5"/><path d="M95.1 39.4 V45.4" stroke="#000" stroke-width="0.8"/><rect x="84.7" y="40.4" width="1.4" height="2.7" fill="#000"/><path d="M97.3 39.0 V43.4" stroke="#000" stroke-width="0.8"/><rect x="85.3" y="51.8" width="3.2" height="2.0" fill="#000"/><path d="M44.6 48.6 H50.0" stroke="#000" stroke-width="0.8"/><rect x="66.1" y="58.7" width="1.9" height="2.7" fill="#000"/><rect x="51.0" y="53.1" width="2.7" height="1.4" fill="#000"/><path d="M32.9 57.0 V59.5" stroke="#000" stroke-width="1.0"/><path d="M30.5 50.4 H36.5" stroke="#000" stroke-width="0.8"/><path d="M51.7 43.2 V47.0" stroke="#000" stroke-width="1.0"/><path d="M35.5 49.8 V55.1" stroke="#000" stroke-width="0.5"/><path d="M34.4 47.2 V52.7" stroke="#000" stroke-width="0.8"/><path d="M14.1 41.8 V45.5" stroke="#000" stroke-width="0.5"/><path d="M96.5 48.0 V52.5" stroke="#000" stroke-width="1.0"/><path d="M88.3 41.1 V45.2" stroke="#000" stroke-width="0.5"/><path d="M78.7 53.6 V55.7" stroke="#000" stroke-width="0.5"/><rect x="95.5" y="39.2" width="2.3" height="1.4" fill="#000"/><rect x="15.0" y="59.8" width="2.1" height="2.8" fill="#000"/><path d="M12.8 64.8 H15.9" stroke="#000" stroke-width="0.8"/><path d="M51.4 62.0 H57.7" stroke="#000" stroke-width="0.5"/><path d="M81.9 51.7 H86.0" stroke="#000" stroke-width="1.0"/><path d="M51.9 50.6 H55.2" stroke="#000" stroke-width="1.0"/><path d="M72.1 53.6 V59.4" stroke="#000" stroke-width="0.5"/><path d="M42.7 39.4 H46.9" stroke="#000" stroke-width="0.5"/><path d="M45.8 39.2 H50.7" stroke="#000" stroke-width="0.8"/><rect x="34.3" y="40.7" width="3.0" height="2.6" fill="#000"/><path d="M19.2 39.2 V41.6" stroke="#000" stroke-width="1.0"/><path d="M49.2 42.6 H56.0" stroke="#000" stroke-width="0.8"/><path d="M60.8 61.9 H63.1" stroke="#000" stroke-width="0.8"/><path d="M17.8 39.6 V42.8" stroke="#000" stroke-width="0.5"/><path d="M29.6 54.0 H36.6" stroke="#000" stroke-width="0.5"/><rect x="14.1" y="59.8" width="1.8" height="1.4" fill="#000"/><path d="M91.1 53.3 V55.9" stroke="#000" stroke-width="0.5"/><path d="M53.0 51.3 V56.4" stroke="#000" stroke-width="0.8"/><path d="M93.8 39.3 V45.0" stroke="#000" stroke-width="1.0"/><rect x="53.2" y="65.4" width="2.5" height="2.4" fill="#000"/><path d="M18.6 55.8 H25.3" stroke="#000" stroke-width="0.8"/><rect x="67.0" y="51.9" width="1.6" height="2.9" fill="#000"/><path d="M96.5 55.0 V59.4" stroke="#000" stroke-width="1.0"/><rect x="82.0" y="66.7" width="2.5" height="2.5" fill="#000"/><path d="M48.9 48.3 V52.2" stroke="#000" stroke-width="0.8"/><rect x="71.7" y="52.9" width="2.2" height="2.5" fill="#000"/><rect x="24.9" y="43.1" width="3.1" height="1.6" fill="#000"/><path d="M48.5 61.6 H54.6" stroke="#000" stroke-width="1.0"/><path d="M16.4 60.4 V64.5" stroke="#000" stroke-width="1.0"/><path d="M82.4 43.6 H89.3" stroke="#000" stroke-width="0.8"/><path d="M82.0 59.0 H86.1" stroke="#000" stroke-width="1.0"/><path d="M97.3 59.2 H102.0" stroke="#000" stroke-width="1.0"/><rect x="44.0" y="40.8" width="2.3" height="1.8" fill="#000"/><path d="M27.4 55.2 H32.0" stroke="#000" stroke-width="0.5"/><path d="M50.2 53.4 H52.3" stroke="#000" stroke-width="0.5"/><path d="M93.8 60.3 V63.9" stroke="#000" stroke-width="0.8"/><rect x="55.1" y="53.8" width="2.6" height="2.3" fill="#000"/><path d="M65.7 53.8 H68.9" stroke="#000" stroke-width="0.8"/><path d="M78.2 60.7 V63.5" stroke="#000" stroke-width="1.0"/><rect x="27.1" y="53.1" width="1.5" height="3.0" fill="#000"/><path d="M86.3 59.7 H91.0" stroke="#000" stroke-width="1.0"/><path d="M81.5 41.2 V45.6" stroke="#000" stroke-width="0.8"/><path d="M36.1 66.9 H40.7" stroke="#000" stroke-width="0.5"/><rect x="97.9" y="60.4" width="1.3" height="1.4" fill="#000"/><path d="M68.3 68.0 V69.7" stroke="#000" stroke-width="0.8"/><path d="M30.6 58.5 V63.0" stroke="#000" stroke-width="1.0"/><rect x="95.7" y="58.3" width="2.2" height="2.2" fill="#000"/><path d="M43.8 52.7 V57.4" stroke="#000" stroke-width="0.5"/><path d="M40.9 51.6 H43.0" stroke="#000" stroke-width="0.5"/><path d="M35.4 60.6 H41.1" stroke="#000" stroke-width="1.0"/><path d="M20.0 51.6 H24.5" stroke="#000" stroke-width="1.0"/><path d="M67.3 52.8 H73.5" stroke="#000" stroke-width="0.8"/><path d="M28.1 44.5 V46.7" stroke="#000" stroke-width="0.8"/><path d="M71.9 55.4 V57.6" stroke="#000" stroke-width="0.5"/><path d="M24.7 55.9 V58.7" stroke="#000" stroke-width="1.0"/><rect x="28.9" y="58.1" width="3.2" height="2.6" fill="#000"/><rect x="37.5" y="51.2" width="2.3" height="1.6" fill="#000"/><rect x="41.5" y="41.0" width="2.1" height="2.1" fill="#000"/><path d="M17.7 57.5 H20.9" stroke="#000" stroke-width="1.0"/><path d="M53.8 55.5 H56.3" stroke="#000" stroke-width="0.8"/><path d="M63.5 59.3 V61.4" stroke="#000" stroke-width="1.0"/><path d="M59.6 59.9 V64.9" stroke="#000" stroke-width="0.8"/><path d="M86.3 52.6 V54.8" stroke="#000" stroke-width="0.8"/><path d="M51.0 40.2 V43.6" stroke="#000" stroke-width="1.0"/><path d="M37.0 60.6 H39.3" stroke="#000" stroke-width="0.5"/><path d="M16.7 54.4 H19.1" stroke="#000" stroke-width="0.5"/><path d="M70.7 57.2 H74.2" stroke="#000" stroke-width="0.8"/><path d="M28.3 40.6 V43.7" stroke="#000" stroke-width="0.5"/><path d="M89.1 45.5 V51.0" stroke="#000" stroke-width="0.8"/><rect x="94.7" y="48.7" width="2.1" height="2.1" fill="#000"/><path d="M76.4 60.6 V63.5" stroke="#000" stroke-width="0.8"/><path d="M31.5 47.9 V51.2" stroke="#000" stroke-width="1.0"/><path d="M86.6 46.7 V52.7" stroke="#000" stroke-width="1.0"/><path d="M17.4 48.3 V51.3" stroke="#000" stroke-width="0.5"/><path d="M59.0 52.5 V56.6" stroke="#000" stroke-width="1.0"/><rect x="35.5" y="57.0" width="1.3" height="2.5" fill="#000"/><path d="M50.0 67.4 V69.7" stroke="#000" stroke-width="1.0"/><path d="M44.6 42.6 V45.6" stroke="#000" stroke-width="0.8"/><path d="M32.3 55.1 V57.1" stroke="#000" stroke-width="0.8"/><path d="M86.1 68.1 V69.7" stroke="#000" stroke-width="0.5"/><path d="M64.4 67.0 H69.6" stroke="#000" stroke-width="0.5"/><path d="M86.0 64.0 H91.7" stroke="#000" stroke-width="0.8"/><rect x="35.8" y="62.1" width="2.5" height="1.9" fill="#000"/><path d="M65.7 45.6 H69.3" stroke="#000" stroke-width="1.0"/><rect x="23.7" y="65.3" width="1.9" height="2.4" fill="#000"/><path d="M66.5 66.0 H73.6" stroke="#000" stroke-width="1.0"/></symbol><symbol id="sheet4" viewBox="0 0 152 118"><use href="#frame"/><path d="M101 40.1 L113 38.8 L126.8 39.2 L126.8 66.9 L107.4 69.7 L103 69.7 Z" fill="#c2c2c2"/><circle cx="18.5" cy="24.3" r="1.2" fill="#fff" stroke="#111" stroke-width="0.6"/><path d="M18.5 25.5 V75.7" stroke="#111" stroke-width="0.5"/><circle cx="27.5" cy="24.3" r="1.2" fill="#fff" stroke="#111" stroke-width="0.6"/><path d="M27.5 25.5 V75.7" stroke="#111" stroke-width="0.5"/><circle cx="36.9" cy="24.3" r="1.2" fill="#fff" stroke="#111" stroke-width="0.6"/><path d="M36.9 25.5 V75.7" stroke="#111" stroke-width="0.5"/><circle cx="46.5" cy="24.3" r="1.2" fill="#fff" stroke="#111" stroke-width="0.6"/><path d="M46.5 25.5 V75.7" stroke="#111" stroke-width="0.5"/><circle cx="59.1" cy="24.3" r="1.2" fill="#fff" stroke="#111" stroke-width="0.6"/><path d="M59.1 25.5 V75.7" stroke="#111" stroke-width="0.5"/><circle cx="70.5" cy="24.3" r="1.2" fill="#fff" stroke="#111" stroke-width="0.6"/><path d="M70.5 25.5 V75.7" stroke="#111" stroke-width="0.5"/><circle cx="78.8" cy="24.3" r="1.2" fill="#fff" stroke="#111" stroke-width="0.6"/><path d="M78.8 25.5 V75.7" stroke="#111" stroke-width="0.5"/><circle cx="86.6" cy="24.3" r="1.2" fill="#fff" stroke="#111" stroke-width="0.6"/><path d="M86.6 25.5 V75.7" stroke="#111" stroke-width="0.5"/><circle cx="94.5" cy="24.3" r="1.2" fill="#fff" stroke="#111" stroke-width="0.6"/><path d="M94.5 25.5 V75.7" stroke="#111" stroke-width="0.5"/><circle cx="18.8" cy="75.5" r="1.1" fill="#fff" stroke="#111" stroke-width="0.6"/><circle cx="27.8" cy="75.5" r="1.1" fill="#fff" stroke="#111" stroke-width="0.6"/><circle cx="37.199999999999996" cy="75.5" r="1.1" fill="#fff" stroke="#111" stroke-width="0.6"/><circle cx="46.8" cy="75.5" r="1.1" fill="#fff" stroke="#111" stroke-width="0.6"/><circle cx="59.4" cy="75.5" r="1.1" fill="#fff" stroke="#111" stroke-width="0.6"/><circle cx="70.8" cy="75.5" r="1.1" fill="#fff" stroke="#111" stroke-width="0.6"/><circle cx="79.1" cy="75.5" r="1.1" fill="#fff" stroke="#111" stroke-width="0.6"/><circle cx="86.89999999999999" cy="75.5" r="1.1" fill="#fff" stroke="#111" stroke-width="0.6"/><circle cx="94.8" cy="75.5" r="1.1" fill="#fff" stroke="#111" stroke-width="0.6"/><circle cx="21.8" cy="75.5" r="1.1" fill="#fff" stroke="#111" stroke-width="0.6"/><circle cx="40.3" cy="75.5" r="1.1" fill="#fff" stroke="#111" stroke-width="0.6"/><circle cx="49.8" cy="75.5" r="1.1" fill="#fff" stroke="#111" stroke-width="0.6"/><circle cx="64.3" cy="75.5" r="1.1" fill="#fff" stroke="#111" stroke-width="0.6"/><rect x="18.5" y="25.4" width="78" height="2" fill="#333"/><rect x="18.5" y="27.4" width="78" height="10.9" fill="none" stroke="#111" stroke-width="0.7"/><path d="M19.5 27.4 V38.3" stroke="#000" stroke-width="0.9"/><path d="M23.3 27.4 V38.3" stroke="#000" stroke-width="0.9"/><path d="M26.1 27.4 V38.3" stroke="#000" stroke-width="0.7"/><path d="M30.7 27.4 V38.3" stroke="#000" stroke-width="0.7"/><path d="M33.3 27.4 V38.3" stroke="#000" stroke-width="0.9"/><path d="M36.3 27.4 V38.3" stroke="#000" stroke-width="0.7"/><path d="M39.8 27.4 V38.3" stroke="#000" stroke-width="0.9"/><path d="M43.3 27.4 V38.3" stroke="#000" stroke-width="0.9"/><path d="M46.7 27.4 V38.3" stroke="#000" stroke-width="0.9"/><path d="M50.4 27.4 V38.3" stroke="#000" stroke-width="0.9"/><path d="M53.2 27.4 V38.3" stroke="#000" stroke-width="0.7"/><path d="M56.1 27.4 V38.3" stroke="#000" stroke-width="0.9"/><path d="M59.3 27.4 V38.3" stroke="#000" stroke-width="0.7"/><path d="M62.9 27.4 V38.3" stroke="#000" stroke-width="0.9"/><path d="M68.2 27.4 V38.3" stroke="#000" stroke-width="0.9"/><path d="M72.2 27.4 V38.3" stroke="#000" stroke-width="0.5"/><path d="M76.1 27.4 V38.3" stroke="#000" stroke-width="0.7"/><path d="M79.0 27.4 V38.3" stroke="#000" stroke-width="0.5"/><path d="M84.1 27.4 V38.3" stroke="#000" stroke-width="0.5"/><path d="M87.0 27.4 V38.3" stroke="#000" stroke-width="0.7"/><path d="M90.4 27.4 V38.3" stroke="#000" stroke-width="0.5"/><path d="M93.9 27.4 V38.3" stroke="#000" stroke-width="0.7"/><rect x="66.8" y="30.1" width="1.5" height="2.0" fill="#000"/><rect x="71.4" y="29.5" width="2.0" height="1.9" fill="#000"/><rect x="41.8" y="35.0" width="1.3" height="2.3" fill="#000"/><rect x="86.6" y="30.4" width="1.7" height="1.1" fill="#000"/><rect x="88.0" y="34.9" width="2.7" height="2.1" fill="#000"/><rect x="87.3" y="34.2" width="2.2" height="1.1" fill="#000"/><rect x="47.3" y="33.1" width="2.9" height="1.1" fill="#000"/><rect x="63.9" y="29.3" width="1.9" height="1.0" fill="#000"/><rect x="47.2" y="34.4" width="2.7" height="2.3" fill="#000"/><rect x="69.9" y="33.4" width="1.4" height="1.5" fill="#000"/><rect x="37.9" y="33.4" width="2.5" height="1.7" fill="#000"/><rect x="60.0" y="34.9" width="1.6" height="1.2" fill="#000"/><rect x="32.9" y="32.2" width="2.4" height="1.6" fill="#000"/><rect x="26.1" y="32.3" width="2.8" height="1.8" fill="#000"/><rect x="52.2" y="31.3" width="2.4" height="1.0" fill="#000"/><rect x="49.7" y="34.9" width="2.8" height="1.7" fill="#000"/><rect x="42.7" y="30.3" width="2.1" height="1.2" fill="#000"/><rect x="72.2" y="32.7" width="2.9" height="1.0" fill="#000"/><path d="M18.5 34.6 H96.5" stroke="#000" stroke-width="0.6"/><rect x="12.5" y="38.3" width="5" height="31.4" fill="#bdbdbd"/><path d="M9.0 38.3 H107" stroke="#111" stroke-width="0.85"/><circle cx="8.3" cy="38.3" r="1" fill="#fff" stroke="#111" stroke-width="0.5"/><path d="M9.0 49.4 H107" stroke="#111" stroke-width="0.85"/><circle cx="8.3" cy="49.4" r="1" fill="#fff" stroke="#111" stroke-width="0.5"/><path d="M9.0 56.4 H107" stroke="#111" stroke-width="0.85"/><circle cx="8.3" cy="56.4" r="1" fill="#fff" stroke="#111" stroke-width="0.5"/><path d="M9.0 62.7 H107" stroke="#111" stroke-width="0.85"/><circle cx="8.3" cy="62.7" r="1" fill="#fff" stroke="#111" stroke-width="0.5"/><path d="M9.0 69.7 H107" stroke="#111" stroke-width="0.85"/><circle cx="8.3" cy="69.7" r="1" fill="#fff" stroke="#111" stroke-width="0.5"/><rect x="11.5" y="38.3" width="90.5" height="31.4" fill="none" stroke="#000" stroke-width="1"/><path d="M61.9 66.0 H65.8" stroke="#000" stroke-width="0.5"/><path d="M93.4 42.3 H98.2" stroke="#000" stroke-width="1.0"/><rect x="46.9" y="57.6" width="1.7" height="2.2" fill="#000"/><rect x="35.7" y="43.4" width="2.5" height="1.7" fill="#000"/><rect x="85.9" y="41.8" width="1.3" height="2.3" fill="#000"/><rect x="45.4" y="46.3" width="2.7" height="2.9" fill="#000"/><rect x="23.2" y="51.7" width="3.0" height="2.0" fill="#000"/><path d="M28.0 67.4 V69.7" stroke="#000" stroke-width="0.5"/><rect x="84.1" y="52.5" width="1.8" height="1.6" fill="#000"/><path d="M47.3 42.3 H51.4" stroke="#000" stroke-width="0.8"/><path d="M90.0 47.9 H92.9" stroke="#000" stroke-width="0.8"/><path d="M12.7 38.9 V42.0" stroke="#000" stroke-width="1.0"/><path d="M83.2 43.1 H90.1" stroke="#000" stroke-width="0.5"/><rect x="75.7" y="40.8" width="2.8" height="2.8" fill="#000"/><rect x="68.4" y="59.3" width="2.2" height="1.5" fill="#000"/><rect x="27.1" y="50.0" width="3.1" height="2.0" fill="#000"/><path d="M30.5 42.5 H37.7" stroke="#000" stroke-width="0.5"/><path d="M97.9 53.8 V57.6" stroke="#000" stroke-width="1.0"/><path d="M15.6 52.5 V55.0" stroke="#000" stroke-width="0.8"/><path d="M94.8 38.9 V41.6" stroke="#000" stroke-width="1.0"/><rect x="57.6" y="46.8" width="2.9" height="1.3" fill="#000"/><path d="M97.4 62.0 H102.0" stroke="#000" stroke-width="0.8"/><path d="M45.1 57.0 H48.8" stroke="#000" stroke-width="0.5"/><path d="M61.1 56.4 V60.0" stroke="#000" stroke-width="1.0"/><rect x="71.3" y="68.5" width="1.2" height="2.7" fill="#000"/><rect x="36.5" y="50.4" width="1.6" height="2.9" fill="#000"/><path d="M37.3 67.6 H42.4" stroke="#000" stroke-width="0.5"/><rect x="41.5" y="67.4" width="3.0" height="2.7" fill="#000"/><path d="M40.3 46.1 H42.4" stroke="#000" stroke-width="0.5"/><rect x="25.0" y="40.5" width="2.0" height="1.5" fill="#000"/><path d="M87.4 43.3 H93.0" stroke="#000" stroke-width="0.5"/><path d="M58.2 65.5 H61.7" stroke="#000" stroke-width="0.5"/><path d="M60.2 64.0 H67.3" stroke="#000" stroke-width="0.8"/><rect x="85.7" y="53.0" width="1.7" height="2.7" fill="#000"/><path d="M51.2 68.6 H59.0" stroke="#000" stroke-width="1.0"/><path d="M24.8 58.5 H26.9" stroke="#000" stroke-width="1.0"/><path d="M33.7 40.1 H40.2" stroke="#000" stroke-width="0.5"/><rect x="97.8" y="57.3" width="1.9" height="2.7" fill="#000"/><path d="M52.9 64.3 V68.3" stroke="#000" stroke-width="0.8"/><path d="M32.2 51.3 V56.4" stroke="#000" stroke-width="1.0"/><path d="M20.1 42.4 H26.5" stroke="#000" stroke-width="0.8"/><path d="M56.1 54.4 H60.1" stroke="#000" stroke-width="0.8"/><rect x="50.5" y="40.5" width="1.5" height="1.5" fill="#000"/><path d="M93.4 63.4 H95.6" stroke="#000" stroke-width="0.8"/><rect x="96.0" y="58.8" width="2.5" height="3.0" fill="#000"/><rect x="64.5" y="39.5" width="3.2" height="1.7" fill="#000"/><path d="M12.7 58.6 V60.9" stroke="#000" stroke-width="0.8"/><path d="M40.9 44.8 V50.5" stroke="#000" stroke-width="0.8"/><path d="M96.5 65.2 H102.0" stroke="#000" stroke-width="1.0"/><path d="M53.2 42.6 V45.3" stroke="#000" stroke-width="1.0"/><path d="M26.7 64.2 H29.4" stroke="#000" stroke-width="0.8"/><path d="M87.3 66.7 V69.6" stroke="#000" stroke-width="0.8"/><rect x="79.7" y="58.7" width="2.8" height="2.7" fill="#000"/><path d="M46.9 66.0 H49.0" stroke="#000" stroke-width="0.5"/><path d="M76.3 40.0 V43.6" stroke="#000" stroke-width="0.5"/><path d="M95.7 58.6 V63.7" stroke="#000" stroke-width="0.8"/><rect x="27.7" y="61.0" width="2.2" height="2.8" fill="#000"/><rect x="84.6" y="55.0" width="2.1" height="2.1" fill="#000"/><path d="M56.2 63.6 H62.1" stroke="#000" stroke-width="1.0"/><rect x="61.0" y="40.1" width="2.3" height="2.7" fill="#000"/><path d="M49.0 42.1 V46.3" stroke="#000" stroke-width="0.8"/><path d="M14.0 58.8 V63.8" stroke="#000" stroke-width="0.5"/><path d="M15.5 47.6 H21.7" stroke="#000" stroke-width="0.5"/><path d="M45.6 52.5 V57.7" stroke="#000" stroke-width="1.0"/><path d="M66.9 46.2 V50.9" stroke="#000" stroke-width="0.5"/><rect x="38.3" y="61.2" width="3.3" height="2.6" fill="#000"/><rect x="35.0" y="43.5" width="1.7" height="1.3" fill="#000"/><rect x="51.8" y="48.6" width="1.8" height="1.6" fill="#000"/><path d="M38.6 68.4 V69.7" stroke="#000" stroke-width="0.8"/><path d="M19.4 54.3 V59.8" stroke="#000" stroke-width="0.5"/><path d="M45.3 58.7 V62.3" stroke="#000" stroke-width="0.8"/><rect x="38.7" y="65.5" width="2.5" height="2.5" fill="#000"/><path d="M15.7 65.1 H21.7" stroke="#000" stroke-width="0.8"/><rect x="86.4" y="49.3" width="2.9" height="2.3" fill="#000"/><path d="M86.7 39.9 H88.9" stroke="#000" stroke-width="0.8"/><path d="M70.9 39.7 H73.4" stroke="#000" stroke-width="0.5"/><path d="M54.2 66.0 H58.4" stroke="#000" stroke-width="1.0"/><path d="M77.1 56.9 V59.7" stroke="#000" stroke-width="1.0"/><path d="M48.9 49.8 H56.3" stroke="#000" stroke-width="0.8"/><path d="M46.8 48.0 H50.5" stroke="#000" stroke-width="0.5"/><path d="M86.1 53.9 V57.3" stroke="#000" stroke-width="0.8"/><path d="M27.3 46.3 V49.0" stroke="#000" stroke-width="1.0"/><path d="M31.1 60.9 H33.7" stroke="#000" stroke-width="0.8"/><path d="M85.1 40.6 V44.2" stroke="#000" stroke-width="0.5"/><path d="M39.8 68.4 H47.6" stroke="#000" stroke-width="0.5"/><path d="M13.4 45.6 V48.9" stroke="#000" stroke-width="0.8"/><rect x="46.9" y="51.3" width="2.9" height="2.8" fill="#000"/><path d="M96.8 45.0 V50.1" stroke="#000" stroke-width="1.0"/><path d="M28.6 47.8 H36.2" stroke="#000" stroke-width="1.0"/><path d="M49.4 53.5 H51.8" stroke="#000" stroke-width="1.0"/><path d="M80.2 48.1 H87.7" stroke="#000" stroke-width="0.8"/><path d="M53.1 62.8 H56.6" stroke="#000" stroke-width="1.0"/><rect x="28.2" y="63.5" width="3.0" height="1.7" fill="#000"/><path d="M18.4 65.5 H23.4" stroke="#000" stroke-width="1.0"/><rect x="23.9" y="62.3" width="2.5" height="2.5" fill="#000"/><path d="M78.9 41.7 V44.1" stroke="#000" stroke-width="0.5"/><path d="M91.1 42.2 H95.4" stroke="#000" stroke-width="0.5"/><path d="M71.5 43.5 V48.2" stroke="#000" stroke-width="0.5"/><path d="M58.3 45.4 V49.5" stroke="#000" stroke-width="0.8"/><rect x="24.7" y="67.2" width="2.4" height="1.5" fill="#000"/><rect x="74.2" y="60.0" width="3.3" height="2.7" fill="#000"/><path d="M70.7 65.2 H72.8" stroke="#000" stroke-width="0.8"/><path d="M42.5 67.4 V69.7" stroke="#000" stroke-width="0.8"/><path d="M17.4 42.2 V47.8" stroke="#000" stroke-width="1.0"/><path d="M80.6 60.4 H87.5" stroke="#000" stroke-width="0.8"/><path d="M65.3 56.1 H69.2" stroke="#000" stroke-width="1.0"/><path d="M85.1 61.1 V64.8" stroke="#000" stroke-width="0.5"/><path d="M43.5 50.5 H46.4" stroke="#000" stroke-width="1.0"/><path d="M53.4 50.1 V52.7" stroke="#000" stroke-width="0.8"/><path d="M20.3 39.3 V42.5" stroke="#000" stroke-width="1.0"/><path d="M82.8 55.6 H89.8" stroke="#000" stroke-width="1.0"/><path d="M47.8 45.7 V49.9" stroke="#000" stroke-width="0.8"/><path d="M59.7 45.0 H65.0" stroke="#000" stroke-width="0.5"/><rect x="51.8" y="45.7" width="2.8" height="1.9" fill="#000"/><path d="M17.2 64.4 V69.7" stroke="#000" stroke-width="0.5"/><path d="M53.0 58.0 H60.0" stroke="#000" stroke-width="1.0"/><path d="M68.1 48.7 H73.1" stroke="#000" stroke-width="0.8"/><path d="M43.1 46.7 V51.7" stroke="#000" stroke-width="1.0"/><path d="M61.1 52.6 H68.5" stroke="#000" stroke-width="0.5"/><path d="M47.4 64.9 V68.3" stroke="#000" stroke-width="0.8"/><rect x="27.9" y="66.6" width="2.2" height="2.1" fill="#000"/><path d="M67.4 47.7 V51.2" stroke="#000" stroke-width="0.8"/><path d="M29.4 46.8 V52.3" stroke="#000" stroke-width="1.0"/><path d="M87.8 43.6 V46.8" stroke="#000" stroke-width="1.0"/><rect x="77.2" y="68.6" width="3.1" height="1.9" fill="#000"/><path d="M55.5 44.8 H60.5" stroke="#000" stroke-width="0.5"/><path d="M52.2 52.0 V57.6" stroke="#000" stroke-width="0.8"/><path d="M53.3 62.0 V65.4" stroke="#000" stroke-width="0.8"/><path d="M59.3 50.9 H61.5" stroke="#000" stroke-width="0.8"/><path d="M82.7 55.3 V59.4" stroke="#000" stroke-width="0.5"/><path d="M51.3 40.4 V44.6" stroke="#000" stroke-width="0.8"/><path d="M64.1 44.0 V49.9" stroke="#000" stroke-width="0.5"/><path d="M92.5 48.9 H94.9" stroke="#000" stroke-width="0.8"/><rect x="78.1" y="67.4" width="3.3" height="2.9" fill="#000"/><path d="M90.8 43.7 H94.5" stroke="#000" stroke-width="0.8"/><path d="M64.6 42.0 H69.3" stroke="#000" stroke-width="0.5"/><path d="M36.7 66.3 V69.1" stroke="#000" stroke-width="1.0"/><path d="M27.2 50.1 H29.9" stroke="#000" stroke-width="0.5"/><path d="M27.7 45.2 V50.3" stroke="#000" stroke-width="1.0"/><rect x="57.4" y="38.9" width="3.3" height="1.7" fill="#000"/><path d="M34.9 53.1 H37.7" stroke="#000" stroke-width="1.0"/><path d="M12.7 42.3 V48.2" stroke="#000" stroke-width="1.0"/><path d="M51.4 43.9 H56.1" stroke="#000" stroke-width="0.5"/><path d="M75.6 62.9 H79.2" stroke="#000" stroke-width="0.8"/><path d="M66.6 68.2 H69.2" stroke="#000" stroke-width="0.8"/><path d="M64.1 62.0 V67.1" stroke="#000" stroke-width="0.8"/><rect x="72.6" y="49.8" width="1.5" height="2.5" fill="#000"/><path d="M49.5 52.8 V58.7" stroke="#000" stroke-width="1.0"/><rect x="69.0" y="48.4" width="2.8" height="1.3" fill="#000"/><path d="M53.9 50.7 V53.3" stroke="#000" stroke-width="1.0"/><path d="M91.3 63.4 H97.7" stroke="#000" stroke-width="0.8"/><path d="M37.7 63.1 H45.5" stroke="#000" stroke-width="1.0"/><rect x="14.0" y="54.2" width="3.1" height="2.5" fill="#000"/><rect x="14.6" y="47.6" width="3.1" height="1.7" fill="#000"/><path d="M45.7 56.1 V59.8" stroke="#000" stroke-width="0.8"/><path d="M38.7 57.9 H46.1" stroke="#000" stroke-width="0.5"/><path d="M61.4 68.4 V69.7" stroke="#000" stroke-width="1.0"/><path d="M78.1 64.5 H84.7" stroke="#000" stroke-width="0.5"/><rect x="62.6" y="60.4" width="2.2" height="2.9" fill="#000"/><path d="M96.7 54.6 V58.5" stroke="#000" stroke-width="0.5"/><path d="M65.6 44.9 V48.0" stroke="#000" stroke-width="1.0"/><path d="M41.1 68.6 V69.7" stroke="#000" stroke-width="0.5"/><path d="M36.2 66.6 V69.7" stroke="#000" stroke-width="1.0"/><rect x="13.5" y="60.0" width="1.8" height="1.9" fill="#000"/><path d="M73.2 66.2 H78.5" stroke="#000" stroke-width="1.0"/><path d="M33.7 50.8 H41.0" stroke="#000" stroke-width="1.0"/><path d="M45.5 51.4 H51.0" stroke="#000" stroke-width="1.0"/><rect x="41.4" y="52.0" width="1.9" height="2.2" fill="#000"/><path d="M70.4 56.1 V58.4" stroke="#000" stroke-width="0.5"/><path d="M36.5 55.5 V61.1" stroke="#000" stroke-width="0.8"/><path d="M21.9 67.9 V69.7" stroke="#000" stroke-width="0.8"/><path d="M97.3 55.6 H101.2" stroke="#000" stroke-width="0.5"/><path d="M50.9 62.8 V67.5" stroke="#000" stroke-width="0.8"/><path d="M22.3 55.2 V59.7" stroke="#000" stroke-width="0.5"/><rect x="22.1" y="57.9" width="2.5" height="1.6" fill="#000"/><path d="M85.0 62.4 H88.5" stroke="#000" stroke-width="0.8"/><rect x="43.7" y="62.4" width="3.0" height="1.6" fill="#000"/><path d="M19.6 41.5 V45.4" stroke="#000" stroke-width="0.8"/><path d="M96.1 48.5 H101.9" stroke="#000" stroke-width="1.0"/><path d="M68.1 42.3 V48.0" stroke="#000" stroke-width="0.5"/><path d="M79.9 46.1 V51.9" stroke="#000" stroke-width="0.8"/><rect x="14.8" y="53.3" width="3.5" height="2.6" fill="#000"/><rect x="57.9" y="64.0" width="1.4" height="1.3" fill="#000"/><path d="M32.6 60.0 V64.0" stroke="#000" stroke-width="0.5"/><path d="M80.4 64.8 H88.1" stroke="#000" stroke-width="0.8"/><path d="M70.6 43.7 H76.6" stroke="#000" stroke-width="1.0"/><path d="M63.5 65.7 V68.4" stroke="#000" stroke-width="1.0"/><path d="M66.9 48.2 V52.2" stroke="#000" stroke-width="1.0"/><path d="M91.1 65.9 H96.0" stroke="#000" stroke-width="0.5"/><rect x="27.8" y="55.6" width="3.4" height="2.0" fill="#000"/><path d="M96.7 66.1 V69.7" stroke="#000" stroke-width="1.0"/><path d="M62.1 62.3 V64.4" stroke="#000" stroke-width="1.0"/><path d="M36.2 60.4 V63.9" stroke="#000" stroke-width="1.0"/><path d="M83.2 55.2 V57.7" stroke="#000" stroke-width="1.0"/><rect x="52.9" y="65.8" width="1.7" height="1.5" fill="#000"/><path d="M27.5 57.5 H34.3" stroke="#000" stroke-width="0.8"/><path d="M93.0 43.2 V46.1" stroke="#000" stroke-width="0.5"/><path d="M48.4 62.8 H53.4" stroke="#000" stroke-width="1.0"/><path d="M47.7 39.7 V45.6" stroke="#000" stroke-width="0.5"/><rect x="66.3" y="59.3" width="1.6" height="2.1" fill="#000"/><path d="M68.6 67.5 H74.0" stroke="#000" stroke-width="1.0"/><rect x="53.9" y="60.4" width="3.2" height="2.1" fill="#000"/><path d="M38.8 49.8 V53.8" stroke="#000" stroke-width="0.8"/><path d="M16.1 62.2 H23.1" stroke="#000" stroke-width="1.0"/><path d="M71.1 43.8 V46.2" stroke="#000" stroke-width="1.0"/><path d="M55.8 40.3 H63.6" stroke="#000" stroke-width="1.0"/><path d="M24.1 48.0 V52.3" stroke="#000" stroke-width="0.8"/><path d="M33.0 63.7 H38.7" stroke="#000" stroke-width="0.5"/><path d="M37.5 66.1 V69.7" stroke="#000" stroke-width="0.5"/><path d="M55.6 48.2 V52.9" stroke="#000" stroke-width="0.5"/><rect x="58.8" y="42.0" width="3.2" height="2.5" fill="#000"/><path d="M90.0 48.3 H96.2" stroke="#000" stroke-width="0.5"/><rect x="86.2" y="50.2" width="3.1" height="2.9" fill="#000"/><path d="M64.7 68.6 H68.5" stroke="#000" stroke-width="1.0"/><path d="M27.9 57.1 H34.1" stroke="#000" stroke-width="0.8"/><rect x="37.0" y="64.4" width="1.4" height="3.0" fill="#000"/><rect x="22.9" y="39.7" width="2.3" height="1.7" fill="#000"/><path d="M12.7 63.5 V69.4" stroke="#000" stroke-width="0.5"/><path d="M47.3 49.3 V54.0" stroke="#000" stroke-width="1.0"/><rect x="61.0" y="67.4" width="3.5" height="2.4" fill="#000"/><path d="M58.6 64.8 H64.1" stroke="#000" stroke-width="1.0"/><path d="M42.4 47.8 V51.5" stroke="#000" stroke-width="0.5"/><path d="M59.4 59.9 V62.4" stroke="#000" stroke-width="1.0"/><rect x="79.2" y="58.0" width="2.8" height="2.0" fill="#000"/><path d="M18.7 59.4 V61.5" stroke="#000" stroke-width="1.0"/><path d="M79.4 40.0 V42.3" stroke="#000" stroke-width="0.8"/><path d="M22.0 66.8 V69.7" stroke="#000" stroke-width="0.8"/><rect x="22.0" y="47.8" width="3.5" height="2.8" fill="#000"/><path d="M12.7 55.4 H16.5" stroke="#000" stroke-width="0.8"/><path d="M36.2 59.4 V65.4" stroke="#000" stroke-width="0.5"/><path d="M80.6 62.9 H85.6" stroke="#000" stroke-width="1.0"/><path d="M61.0 58.9 V63.4" stroke="#000" stroke-width="0.5"/><rect x="65.0" y="44.7" width="1.4" height="2.2" fill="#000"/><path d="M82.0 47.7 H86.4" stroke="#000" stroke-width="1.0"/><rect x="74.5" y="64.7" width="2.1" height="1.4" fill="#000"/><path d="M64.7 39.3 H67.2" stroke="#000" stroke-width="0.8"/><path d="M18.5 62.5 V67.2" stroke="#000" stroke-width="1.0"/><path d="M65.2 38.9 V41.8" stroke="#000" stroke-width="1.0"/><path d="M46.9 64.6 V69.7" stroke="#000" stroke-width="0.8"/><path d="M72.8 44.0 H77.7" stroke="#000" stroke-width="0.8"/><path d="M93.8 58.5 H97.6" stroke="#000" stroke-width="0.8"/><path d="M70.3 52.7 H76.3" stroke="#000" stroke-width="0.8"/><path d="M69.6 52.9 V58.3" stroke="#000" stroke-width="1.0"/><path d="M45.0 61.0 V64.3" stroke="#000" stroke-width="1.0"/><path d="M27.8 63.1 H33.0" stroke="#000" stroke-width="1.0"/><path d="M48.1 64.6 H52.5" stroke="#000" stroke-width="0.8"/><path d="M20.0 48.9 H23.6" stroke="#000" stroke-width="1.0"/><path d="M35.6 63.9 V68.5" stroke="#000" stroke-width="0.5"/><path d="M35.6 41.9 V45.6" stroke="#000" stroke-width="1.0"/><rect x="62.2" y="42.1" width="3.1" height="1.8" fill="#000"/><path d="M33.7 68.1 V69.7" stroke="#000" stroke-width="1.0"/><path d="M93.0 42.5 V45.5" stroke="#000" stroke-width="1.0"/><path d="M43.4 66.5 V69.7" stroke="#000" stroke-width="0.5"/><path d="M47.6 64.8 V68.3" stroke="#000" stroke-width="0.8"/><path d="M60.3 43.6 H62.7" stroke="#000" stroke-width="0.8"/></symbol><symbol id="sheet5" viewBox="0 0 152 118"><use href="#frame"/><path d="M101 40.1 L113 38.8 L126.8 39.2 L126.8 66.9 L107.4 69.7 L103 69.7 Z" fill="#c2c2c2"/><circle cx="18.5" cy="24.3" r="1.2" fill="#fff" stroke="#111" stroke-width="0.6"/><path d="M18.5 25.5 V75.7" stroke="#111" stroke-width="0.5"/><circle cx="27.5" cy="24.3" r="1.2" fill="#fff" stroke="#111" stroke-width="0.6"/><path d="M27.5 25.5 V75.7" stroke="#111" stroke-width="0.5"/><circle cx="36.9" cy="24.3" r="1.2" fill="#fff" stroke="#111" stroke-width="0.6"/><path d="M36.9 25.5 V75.7" stroke="#111" stroke-width="0.5"/><circle cx="46.5" cy="24.3" r="1.2" fill="#fff" stroke="#111" stroke-width="0.6"/><path d="M46.5 25.5 V75.7" stroke="#111" stroke-width="0.5"/><circle cx="59.1" cy="24.3" r="1.2" fill="#fff" stroke="#111" stroke-width="0.6"/><path d="M59.1 25.5 V75.7" stroke="#111" stroke-width="0.5"/><circle cx="70.5" cy="24.3" r="1.2" fill="#fff" stroke="#111" stroke-width="0.6"/><path d="M70.5 25.5 V75.7" stroke="#111" stroke-width="0.5"/><circle cx="78.8" cy="24.3" r="1.2" fill="#fff" stroke="#111" stroke-width="0.6"/><path d="M78.8 25.5 V75.7" stroke="#111" stroke-width="0.5"/><circle cx="86.6" cy="24.3" r="1.2" fill="#fff" stroke="#111" stroke-width="0.6"/><path d="M86.6 25.5 V75.7" stroke="#111" stroke-width="0.5"/><circle cx="94.5" cy="24.3" r="1.2" fill="#fff" stroke="#111" stroke-width="0.6"/><path d="M94.5 25.5 V75.7" stroke="#111" stroke-width="0.5"/><circle cx="18.8" cy="75.5" r="1.1" fill="#fff" stroke="#111" stroke-width="0.6"/><circle cx="27.8" cy="75.5" r="1.1" fill="#fff" stroke="#111" stroke-width="0.6"/><circle cx="37.199999999999996" cy="75.5" r="1.1" fill="#fff" stroke="#111" stroke-width="0.6"/><circle cx="46.8" cy="75.5" r="1.1" fill="#fff" stroke="#111" stroke-width="0.6"/><circle cx="59.4" cy="75.5" r="1.1" fill="#fff" stroke="#111" stroke-width="0.6"/><circle cx="70.8" cy="75.5" r="1.1" fill="#fff" stroke="#111" stroke-width="0.6"/><circle cx="79.1" cy="75.5" r="1.1" fill="#fff" stroke="#111" stroke-width="0.6"/><circle cx="86.89999999999999" cy="75.5" r="1.1" fill="#fff" stroke="#111" stroke-width="0.6"/><circle cx="94.8" cy="75.5" r="1.1" fill="#fff" stroke="#111" stroke-width="0.6"/><circle cx="21.8" cy="75.5" r="1.1" fill="#fff" stroke="#111" stroke-width="0.6"/><circle cx="40.3" cy="75.5" r="1.1" fill="#fff" stroke="#111" stroke-width="0.6"/><circle cx="49.8" cy="75.5" r="1.1" fill="#fff" stroke="#111" stroke-width="0.6"/><circle cx="64.3" cy="75.5" r="1.1" fill="#fff" stroke="#111" stroke-width="0.6"/><rect x="18.5" y="25.4" width="78" height="2" fill="#333"/><rect x="18.5" y="27.4" width="78" height="10.9" fill="none" stroke="#111" stroke-width="0.7"/><path d="M19.5 27.4 V38.3" stroke="#000" stroke-width="0.7"/><path d="M23.3 27.4 V38.3" stroke="#000" stroke-width="0.7"/><path d="M26.0 27.4 V38.3" stroke="#000" stroke-width="0.7"/><path d="M28.6 27.4 V38.3" stroke="#000" stroke-width="0.7"/><path d="M31.1 27.4 V38.3" stroke="#000" stroke-width="0.7"/><path d="M36.0 27.4 V38.3" stroke="#000" stroke-width="0.7"/><path d="M41.1 27.4 V38.3" stroke="#000" stroke-width="0.9"/><path d="M43.7 27.4 V38.3" stroke="#000" stroke-width="0.9"/><path d="M46.4 27.4 V38.3" stroke="#000" stroke-width="0.7"/><path d="M51.3 27.4 V38.3" stroke="#000" stroke-width="0.9"/><path d="M54.2 27.4 V38.3" stroke="#000" stroke-width="0.9"/><path d="M58.0 27.4 V38.3" stroke="#000" stroke-width="0.9"/><path d="M61.8 27.4 V38.3" stroke="#000" stroke-width="0.9"/><path d="M64.4 27.4 V38.3" stroke="#000" stroke-width="0.5"/><path d="M67.4 27.4 V38.3" stroke="#000" stroke-width="0.7"/><path d="M71.0 27.4 V38.3" stroke="#000" stroke-width="0.9"/><path d="M76.4 27.4 V38.3" stroke="#000" stroke-width="0.5"/><path d="M80.1 27.4 V38.3" stroke="#000" stroke-width="0.5"/><path d="M84.9 27.4 V38.3" stroke="#000" stroke-width="0.7"/><path d="M89.7 27.4 V38.3" stroke="#000" stroke-width="0.9"/><path d="M94.9 27.4 V38.3" stroke="#000" stroke-width="0.9"/><rect x="59.3" y="32.8" width="2.2" height="2.1" fill="#000"/><rect x="38.1" y="33.0" width="2.0" height="1.6" fill="#000"/><rect x="34.7" y="29.9" width="2.6" height="1.4" fill="#000"/><rect x="72.4" y="31.5" width="1.4" height="1.6" fill="#000"/><rect x="47.5" y="32.5" width="2.1" height="1.8" fill="#000"/><rect x="23.6" y="32.1" width="2.8" height="1.9" fill="#000"/><rect x="59.7" y="32.8" width="2.5" height="1.5" fill="#000"/><rect x="31.6" y="29.1" width="1.6" height="1.6" fill="#000"/><rect x="84.0" y="29.0" width="2.8" height="2.1" fill="#000"/><rect x="65.4" y="31.7" width="1.4" height="1.4" fill="#000"/><rect x="37.2" y="32.8" width="2.9" height="1.3" fill="#000"/><rect x="21.1" y="35.0" width="2.2" height="1.4" fill="#000"/><rect x="55.0" y="30.0" width="1.4" height="1.1" fill="#000"/><rect x="25.9" y="33.2" width="3.0" height="2.2" fill="#000"/><rect x="31.3" y="33.0" width="2.3" height="2.1" fill="#000"/><rect x="83.2" y="34.4" width="2.3" height="1.4" fill="#000"/><rect x="76.5" y="34.3" width="1.3" height="1.8" fill="#000"/><rect x="21.3" y="30.9" width="2.3" height="2.5" fill="#000"/><path d="M18.5 34.6 H96.5" stroke="#000" stroke-width="0.6"/><rect x="12.5" y="38.3" width="5" height="31.4" fill="#bdbdbd"/><path d="M9.0 38.3 H107" stroke="#111" stroke-width="0.85"/><circle cx="8.3" cy="38.3" r="1" fill="#fff" stroke="#111" stroke-width="0.5"/><path d="M9.0 49.4 H107" stroke="#111" stroke-width="0.85"/><circle cx="8.3" cy="49.4" r="1" fill="#fff" stroke="#111" stroke-width="0.5"/><path d="M9.0 56.4 H107" stroke="#111" stroke-width="0.85"/><circle cx="8.3" cy="56.4" r="1" fill="#fff" stroke="#111" stroke-width="0.5"/><path d="M9.0 62.7 H107" stroke="#111" stroke-width="0.85"/><circle cx="8.3" cy="62.7" r="1" fill="#fff" stroke="#111" stroke-width="0.5"/><path d="M9.0 69.7 H107" stroke="#111" stroke-width="0.85"/><circle cx="8.3" cy="69.7" r="1" fill="#fff" stroke="#111" stroke-width="0.5"/><rect x="11.5" y="38.3" width="90.5" height="31.4" fill="none" stroke="#000" stroke-width="1"/><path d="M48.0 48.4 V52.7" stroke="#000" stroke-width="0.8"/><path d="M91.4 54.9 H95.8" stroke="#000" stroke-width="0.5"/><rect x="86.7" y="57.9" width="2.7" height="2.3" fill="#000"/><path d="M17.4 66.0 H20.7" stroke="#000" stroke-width="0.5"/><path d="M19.8 62.3 V65.5" stroke="#000" stroke-width="0.8"/><rect x="93.0" y="62.8" width="2.1" height="1.3" fill="#000"/><path d="M78.3 68.6 V69.7" stroke="#000" stroke-width="1.0"/><path d="M16.2 46.2 H18.7" stroke="#000" stroke-width="1.0"/><path d="M35.2 63.8 H39.2" stroke="#000" stroke-width="0.5"/><path d="M47.2 61.0 V65.4" stroke="#000" stroke-width="1.0"/><path d="M47.5 56.2 H53.5" stroke="#000" stroke-width="1.0"/><path d="M24.1 61.3 H26.6" stroke="#000" stroke-width="0.5"/><path d="M95.8 58.4 H102.0" stroke="#000" stroke-width="1.0"/><path d="M59.9 67.8 V69.7" stroke="#000" stroke-width="0.8"/><path d="M61.8 66.4 H63.9" stroke="#000" stroke-width="0.5"/><path d="M20.8 40.2 V44.6" stroke="#000" stroke-width="1.0"/><path d="M41.5 52.0 V56.0" stroke="#000" stroke-width="0.8"/><path d="M35.8 39.2 V42.6" stroke="#000" stroke-width="0.8"/><path d="M58.2 45.9 H65.8" stroke="#000" stroke-width="1.0"/><rect x="64.4" y="54.6" width="2.9" height="2.9" fill="#000"/><rect x="19.4" y="56.1" width="2.0" height="2.9" fill="#000"/><rect x="41.3" y="67.7" width="2.1" height="2.6" fill="#000"/><path d="M85.3 53.5 H91.7" stroke="#000" stroke-width="0.5"/><path d="M46.2 64.8 V66.9" stroke="#000" stroke-width="0.5"/><rect x="21.2" y="45.8" width="2.7" height="2.1" fill="#000"/><path d="M50.3 42.8 H56.6" stroke="#000" stroke-width="1.0"/><path d="M93.6 65.0 V67.2" stroke="#000" stroke-width="0.8"/><rect x="81.7" y="57.9" width="2.9" height="2.3" fill="#000"/><path d="M41.4 57.4 V60.1" stroke="#000" stroke-width="0.5"/><path d="M79.2 63.9 H85.7" stroke="#000" stroke-width="0.8"/><rect x="36.8" y="41.8" width="3.2" height="1.9" fill="#000"/><path d="M77.7 66.9 V69.7" stroke="#000" stroke-width="1.0"/><path d="M56.2 61.6 V65.2" stroke="#000" stroke-width="0.8"/><rect x="20.6" y="42.4" width="1.9" height="1.3" fill="#000"/><path d="M25.4 39.5 V44.0" stroke="#000" stroke-width="0.8"/><path d="M93.2 66.7 H99.6" stroke="#000" stroke-width="0.8"/><path d="M32.9 52.2 V57.9" stroke="#000" stroke-width="1.0"/><path d="M55.5 47.1 V51.8" stroke="#000" stroke-width="0.8"/><path d="M28.6 63.5 V67.4" stroke="#000" stroke-width="0.5"/><path d="M68.3 43.9 V49.3" stroke="#000" stroke-width="0.8"/><path d="M72.1 50.0 H78.3" stroke="#000" stroke-width="0.8"/><rect x="82.1" y="42.9" width="1.5" height="1.2" fill="#000"/><path d="M50.6 61.9 V65.8" stroke="#000" stroke-width="1.0"/><path d="M64.9 49.4 H67.4" stroke="#000" stroke-width="0.5"/><path d="M79.4 61.7 H87.2" stroke="#000" stroke-width="0.8"/><path d="M32.6 51.7 H37.2" stroke="#000" stroke-width="0.5"/><rect x="92.2" y="60.8" width="1.8" height="1.7" fill="#000"/><path d="M80.1 49.8 H86.1" stroke="#000" stroke-width="0.5"/><path d="M27.3 52.7 H30.5" stroke="#000" stroke-width="1.0"/><path d="M76.8 62.3 H81.9" stroke="#000" stroke-width="0.5"/><path d="M90.1 53.4 V57.6" stroke="#000" stroke-width="0.5"/><path d="M71.1 47.9 V50.8" stroke="#000" stroke-width="1.0"/><path d="M26.2 43.7 V46.3" stroke="#000" stroke-width="0.8"/><path d="M64.6 53.0 V58.9" stroke="#000" stroke-width="0.8"/><path d="M55.5 51.2 H62.5" stroke="#000" stroke-width="0.8"/><path d="M12.9 52.1 V57.1" stroke="#000" stroke-width="1.0"/><path d="M17.3 53.4 H23.6" stroke="#000" stroke-width="1.0"/><path d="M81.3 58.5 V64.2" stroke="#000" stroke-width="1.0"/><path d="M42.0 63.2 H45.4" stroke="#000" stroke-width="1.0"/><path d="M93.5 51.2 V57.1" stroke="#000" stroke-width="0.5"/><path d="M88.2 59.8 V62.8" stroke="#000" stroke-width="1.0"/><rect x="45.0" y="61.1" width="2.9" height="2.7" fill="#000"/><path d="M36.8 53.8 V59.5" stroke="#000" stroke-width="0.5"/><rect x="24.5" y="66.8" width="3.0" height="1.6" fill="#000"/><path d="M22.4 48.3 H27.7" stroke="#000" stroke-width="0.8"/><path d="M36.9 42.3 V46.2" stroke="#000" stroke-width="0.5"/><path d="M35.5 64.0 V69.3" stroke="#000" stroke-width="0.5"/><rect x="70.7" y="48.9" width="1.4" height="1.3" fill="#000"/><path d="M45.8 42.8 H52.3" stroke="#000" stroke-width="1.0"/><path d="M18.5 56.1 V61.0" stroke="#000" stroke-width="0.8"/><path d="M19.8 44.1 V47.4" stroke="#000" stroke-width="1.0"/><path d="M44.4 63.1 V66.4" stroke="#000" stroke-width="1.0"/><path d="M35.9 39.2 H41.4" stroke="#000" stroke-width="1.0"/><path d="M13.6 54.9 V60.4" stroke="#000" stroke-width="0.5"/><path d="M57.1 61.8 H63.9" stroke="#000" stroke-width="1.0"/><rect x="80.8" y="48.5" width="2.9" height="1.2" fill="#000"/><path d="M52.2 65.8 V69.3" stroke="#000" stroke-width="0.5"/><path d="M85.6 47.3 H91.5" stroke="#000" stroke-width="0.8"/><path d="M63.3 46.8 V49.6" stroke="#000" stroke-width="0.5"/><rect x="88.7" y="60.8" width="1.2" height="2.3" fill="#000"/><path d="M90.0 49.0 V51.4" stroke="#000" stroke-width="1.0"/><path d="M31.4 68.1 V69.7" stroke="#000" stroke-width="1.0"/><path d="M31.5 57.9 V62.8" stroke="#000" stroke-width="0.5"/><path d="M71.4 59.0 H74.0" stroke="#000" stroke-width="1.0"/><path d="M78.8 54.6 V57.4" stroke="#000" stroke-width="0.5"/><path d="M52.1 45.7 V51.4" stroke="#000" stroke-width="1.0"/><path d="M87.6 48.7 V52.2" stroke="#000" stroke-width="1.0"/><path d="M94.4 47.0 V49.5" stroke="#000" stroke-width="0.8"/><path d="M54.9 52.1 V57.7" stroke="#000" stroke-width="1.0"/><path d="M57.3 46.1 V49.1" stroke="#000" stroke-width="0.5"/><rect x="21.3" y="50.7" width="1.3" height="2.7" fill="#000"/><path d="M64.1 60.0 H70.5" stroke="#000" stroke-width="0.5"/><path d="M14.4 66.4 V69.7" stroke="#000" stroke-width="0.5"/><path d="M92.7 55.9 H99.5" stroke="#000" stroke-width="0.8"/><path d="M14.6 68.2 V69.7" stroke="#000" stroke-width="1.0"/><rect x="50.7" y="38.8" width="1.6" height="1.7" fill="#000"/><rect x="55.6" y="49.4" width="3.1" height="2.8" fill="#000"/><path d="M53.5 40.8 H56.4" stroke="#000" stroke-width="0.5"/><path d="M45.4 41.7 V46.9" stroke="#000" stroke-width="0.5"/><path d="M86.6 52.3 H89.9" stroke="#000" stroke-width="1.0"/><path d="M40.8 51.0 V54.7" stroke="#000" stroke-width="1.0"/><path d="M20.1 63.7 V69.0" stroke="#000" stroke-width="0.5"/><path d="M86.4 41.3 H92.1" stroke="#000" stroke-width="1.0"/><path d="M13.4 49.3 H17.0" stroke="#000" stroke-width="1.0"/><path d="M29.1 40.8 V43.0" stroke="#000" stroke-width="0.8"/><path d="M25.6 43.8 H28.5" stroke="#000" stroke-width="0.5"/><path d="M57.3 51.9 H60.6" stroke="#000" stroke-width="0.5"/><rect x="29.3" y="51.1" width="3.1" height="1.4" fill="#000"/><rect x="22.9" y="62.6" width="3.0" height="1.7" fill="#000"/><rect x="56.3" y="64.1" width="2.1" height="2.3" fill="#000"/><path d="M81.7 67.1 H84.4" stroke="#000" stroke-width="0.8"/><path d="M29.5 59.5 V63.6" stroke="#000" stroke-width="0.8"/><path d="M36.5 62.1 V65.6" stroke="#000" stroke-width="0.5"/><path d="M77.7 51.3 V53.3" stroke="#000" stroke-width="0.8"/><path d="M13.9 65.4 H16.0" stroke="#000" stroke-width="0.8"/><path d="M61.1 49.4 H68.0" stroke="#000" stroke-width="0.8"/><path d="M22.7 45.0 V50.9" stroke="#000" stroke-width="0.5"/><path d="M52.5 64.6 V66.9" stroke="#000" stroke-width="0.8"/><path d="M31.9 41.2 V45.1" stroke="#000" stroke-width="0.5"/><path d="M22.6 60.0 V64.5" stroke="#000" stroke-width="0.5"/><path d="M58.1 64.4 H65.2" stroke="#000" stroke-width="0.8"/><path d="M40.4 56.9 V62.4" stroke="#000" stroke-width="1.0"/><path d="M95.5 62.9 H97.8" stroke="#000" stroke-width="0.5"/><rect x="28.2" y="47.8" width="1.4" height="2.8" fill="#000"/><path d="M66.1 58.4 H74.0" stroke="#000" stroke-width="0.8"/><path d="M90.0 54.9 V60.8" stroke="#000" stroke-width="1.0"/><path d="M64.7 55.8 H68.3" stroke="#000" stroke-width="0.8"/><rect x="65.2" y="47.1" width="1.7" height="2.9" fill="#000"/><path d="M65.0 60.2 V63.1" stroke="#000" stroke-width="0.5"/><path d="M76.1 51.0 H83.6" stroke="#000" stroke-width="0.8"/><path d="M62.4 45.2 V51.2" stroke="#000" stroke-width="0.5"/><path d="M81.4 53.5 V56.9" stroke="#000" stroke-width="1.0"/><rect x="74.0" y="43.2" width="2.6" height="1.7" fill="#000"/><rect x="56.1" y="53.1" width="1.4" height="1.7" fill="#000"/><path d="M43.1 48.5 H49.4" stroke="#000" stroke-width="0.5"/><path d="M58.5 47.6 V50.9" stroke="#000" stroke-width="0.5"/><path d="M77.7 56.8 H81.7" stroke="#000" stroke-width="0.5"/><rect x="65.5" y="39.9" width="1.6" height="2.3" fill="#000"/><path d="M93.8 61.8 H96.7" stroke="#000" stroke-width="0.5"/><rect x="57.3" y="62.1" width="2.6" height="1.6" fill="#000"/><path d="M72.7 51.5 V55.4" stroke="#000" stroke-width="0.8"/><path d="M39.2 65.7 V68.8" stroke="#000" stroke-width="0.5"/><rect x="84.2" y="53.2" width="2.2" height="2.5" fill="#000"/><path d="M61.5 57.9 V62.3" stroke="#000" stroke-width="0.5"/><path d="M89.0 54.0 V57.3" stroke="#000" stroke-width="0.5"/><rect x="27.4" y="39.1" width="3.1" height="1.7" fill="#000"/><path d="M93.6 40.7 V45.6" stroke="#000" stroke-width="1.0"/><rect x="31.9" y="63.9" width="1.7" height="1.9" fill="#000"/><path d="M45.5 49.2 H52.8" stroke="#000" stroke-width="0.8"/><path d="M30.7 67.2 V69.5" stroke="#000" stroke-width="0.5"/><path d="M75.8 64.3 V69.7" stroke="#000" stroke-width="1.0"/><path d="M17.3 45.0 H20.5" stroke="#000" stroke-width="0.8"/><path d="M55.7 56.9 H62.6" stroke="#000" stroke-width="0.5"/><path d="M38.6 56.7 V59.6" stroke="#000" stroke-width="0.8"/><rect x="70.8" y="60.6" width="3.2" height="1.7" fill="#000"/><path d="M17.1 54.9 H19.9" stroke="#000" stroke-width="0.8"/><path d="M73.0 42.6 V47.6" stroke="#000" stroke-width="0.8"/><path d="M50.2 66.9 V69.7" stroke="#000" stroke-width="0.8"/><path d="M49.7 52.8 V57.4" stroke="#000" stroke-width="1.0"/><path d="M96.7 58.6 H102.0" stroke="#000" stroke-width="1.0"/><path d="M84.6 47.5 H92.3" stroke="#000" stroke-width="1.0"/><path d="M89.2 44.8 H94.7" stroke="#000" stroke-width="0.8"/><path d="M49.9 58.7 V63.1" stroke="#000" stroke-width="0.8"/><path d="M81.7 58.5 V62.7" stroke="#000" stroke-width="0.8"/><path d="M31.9 51.2 H33.9" stroke="#000" stroke-width="1.0"/><rect x="22.3" y="57.8" width="1.7" height="2.4" fill="#000"/><path d="M43.3 56.1 H48.2" stroke="#000" stroke-width="0.8"/><path d="M90.1 44.4 V46.6" stroke="#000" stroke-width="0.8"/><path d="M78.1 58.6 H83.4" stroke="#000" stroke-width="0.5"/><rect x="42.8" y="68.3" width="3.2" height="1.7" fill="#000"/><path d="M55.3 47.7 V52.4" stroke="#000" stroke-width="0.5"/><path d="M93.9 53.0 H101.5" stroke="#000" stroke-width="0.8"/><path d="M38.6 53.0 V55.2" stroke="#000" stroke-width="0.5"/><rect x="95.7" y="61.8" width="1.3" height="1.9" fill="#000"/><path d="M13.3 56.4 H18.4" stroke="#000" stroke-width="1.0"/><path d="M87.3 44.8 V50.3" stroke="#000" stroke-width="0.5"/><path d="M31.2 67.6 H35.6" stroke="#000" stroke-width="0.5"/><rect x="31.0" y="68.2" width="3.4" height="1.8" fill="#000"/><rect x="58.2" y="61.2" width="3.3" height="2.5" fill="#000"/><path d="M53.0 68.1 V69.7" stroke="#000" stroke-width="0.5"/><path d="M79.5 56.8 V59.4" stroke="#000" stroke-width="0.5"/><path d="M23.1 67.6 V69.7" stroke="#000" stroke-width="0.8"/><path d="M78.7 67.9 H84.3" stroke="#000" stroke-width="0.5"/><rect x="93.4" y="65.8" width="2.0" height="1.5" fill="#000"/><path d="M30.7 59.8 H34.7" stroke="#000" stroke-width="0.5"/><path d="M79.2 47.0 H86.2" stroke="#000" stroke-width="0.5"/><rect x="65.3" y="40.0" width="2.9" height="1.4" fill="#000"/><rect x="44.7" y="65.6" width="2.5" height="1.7" fill="#000"/><path d="M67.8 52.5 H72.2" stroke="#000" stroke-width="1.0"/><path d="M76.4 53.9 V56.9" stroke="#000" stroke-width="0.5"/><path d="M57.5 51.1 V53.9" stroke="#000" stroke-width="1.0"/><path d="M54.7 40.3 H57.1" stroke="#000" stroke-width="0.8"/><path d="M77.1 68.0 H83.6" stroke="#000" stroke-width="0.5"/><path d="M59.8 54.1 V58.8" stroke="#000" stroke-width="0.5"/><path d="M71.8 44.4 H74.8" stroke="#000" stroke-width="0.8"/><path d="M92.0 48.6 H99.2" stroke="#000" stroke-width="0.5"/><rect x="91.8" y="42.6" width="3.4" height="1.5" fill="#000"/><path d="M64.1 55.4 H69.1" stroke="#000" stroke-width="0.5"/><path d="M13.1 58.5 H20.0" stroke="#000" stroke-width="1.0"/><rect x="61.9" y="64.7" width="2.9" height="2.8" fill="#000"/><path d="M14.8 48.9 H17.7" stroke="#000" stroke-width="1.0"/><path d="M54.0 64.1 V67.5" stroke="#000" stroke-width="0.8"/><rect x="84.2" y="43.8" width="1.6" height="2.1" fill="#000"/><path d="M53.8 62.4 H56.9" stroke="#000" stroke-width="0.8"/><path d="M28.2 43.2 V45.4" stroke="#000" stroke-width="0.5"/><path d="M35.6 46.6 V50.1" stroke="#000" stroke-width="1.0"/><path d="M35.3 50.4 V55.7" stroke="#000" stroke-width="0.5"/><path d="M35.0 49.7 H39.4" stroke="#000" stroke-width="1.0"/><path d="M15.8 41.8 H18.4" stroke="#000" stroke-width="0.5"/><path d="M85.5 59.6 V62.0" stroke="#000" stroke-width="0.5"/><path d="M77.6 43.2 H85.2" stroke="#000" stroke-width="0.8"/><path d="M83.6 56.8 V60.9" stroke="#000" stroke-width="0.8"/><path d="M28.0 55.2 V59.6" stroke="#000" stroke-width="0.8"/><path d="M77.9 44.5 H81.8" stroke="#000" stroke-width="0.8"/><path d="M39.7 43.0 H41.9" stroke="#000" stroke-width="1.0"/><path d="M37.2 46.8 H43.1" stroke="#000" stroke-width="0.5"/><path d="M40.7 65.3 H44.4" stroke="#000" stroke-width="0.5"/><path d="M93.3 39.3 V41.7" stroke="#000" stroke-width="0.8"/><path d="M52.4 68.2 H58.6" stroke="#000" stroke-width="0.8"/><path d="M28.9 52.8 H32.4" stroke="#000" stroke-width="1.0"/><path d="M55.9 40.8 H60.7" stroke="#000" stroke-width="1.0"/><rect x="86" y="9.5" width="6.2" height="0.8" fill="#222"/><rect x="86" y="11.4" width="11.4" height="0.8" fill="#222"/><rect x="86" y="13.3" width="10.1" height="0.8" fill="#222"/><rect x="86" y="15.2" width="7.1" height="0.8" fill="#222"/><rect x="86" y="17.1" width="7.2" height="0.8" fill="#222"/><rect x="86" y="19.0" width="9.6" height="0.8" fill="#222"/><rect x="86" y="20.9" width="4.3" height="0.8" fill="#222"/><g fill="none" stroke="#111" stroke-width="0.6"><rect x="14" y="80" width="25" height="22"/><rect x="40" y="80" width="25" height="22"/><path d="M14 83.7 H39 M40 83.7 H65"/><path d="M14 87.4 H39 M40 87.4 H65"/><path d="M14 91.1 H39 M40 91.1 H65"/><path d="M14 94.8 H39 M40 94.8 H65"/><path d="M14 98.5 H39 M40 98.5 H65"/><path d="M20 80 V102 M27 80 V102 M33 80 V102 M47 80 V102 M55 80 V102"/></g><rect x="38.5" y="80" width="1.5" height="22" fill="#333"/><rect x="73.2" y="48.8" width="3.1" height="4.0" fill="#e8c8c0" opacity="0.9"/><rect x="30.7" y="53.4" width="3.5" height="3.5" fill="#a8d8a0" opacity="0.9"/><rect x="17.6" y="51.1" width="4.3" height="2.1" fill="#c8e8b8" opacity="0.9"/><rect x="74.9" y="57.6" width="6.5" height="3.8" fill="#c8e8b8" opacity="0.9"/><rect x="60.8" y="62.7" width="4.6" height="4.6" fill="#a8d8a0" opacity="0.9"/><rect x="16.4" y="57.3" width="7.9" height="2.6" fill="#a8d8a0" opacity="0.9"/><rect x="74.8" y="42.1" width="3.4" height="4.3" fill="#c8e8b8" opacity="0.9"/><rect x="29.2" y="60.6" width="4.0" height="3.5" fill="#c8e8b8" opacity="0.9"/><rect x="37.1" y="50.1" width="3.8" height="2.2" fill="#e8c8c0" opacity="0.9"/><rect x="73.3" y="51.6" width="3.0" height="3.3" fill="#a8d8a0" opacity="0.9"/><rect x="53.5" y="45.9" width="5.7" height="4.6" fill="#c8e8b8" opacity="0.9"/><rect x="91.6" y="53.2" width="3.3" height="3.2" fill="#e8c8c0" opacity="0.9"/><rect x="33.2" y="65.1" width="4.2" height="4.7" fill="#c8e8b8" opacity="0.9"/><rect x="72.9" y="45.0" width="7.8" height="2.5" fill="#a8d8a0" opacity="0.9"/><rect x="68.7" y="45.5" width="6.9" height="2.2" fill="#c8e8b8" opacity="0.9"/><rect x="25.9" y="45.8" width="7.3" height="3.5" fill="#e8c8c0" opacity="0.9"/></symbol><symbol id="sheet6" viewBox="0 0 152 118"><use href="#frame"/><path d="M101 40.1 L113 38.8 L126.8 39.2 L126.8 66.9 L107.4 69.7 L103 69.7 Z" fill="#c2c2c2"/><path d="M116 53 L123 54 L122 60 L117 59 Z" fill="none" stroke="#777" stroke-width="0.6"/><circle cx="18.5" cy="24.3" r="1.2" fill="#fff" stroke="#111" stroke-width="0.6"/><path d="M18.5 25.5 V75.7" stroke="#111" stroke-width="0.5"/><circle cx="27.5" cy="24.3" r="1.2" fill="#fff" stroke="#111" stroke-width="0.6"/><path d="M27.5 25.5 V75.7" stroke="#111" stroke-width="0.5"/><circle cx="36.9" cy="24.3" r="1.2" fill="#fff" stroke="#111" stroke-width="0.6"/><path d="M36.9 25.5 V75.7" stroke="#111" stroke-width="0.5"/><circle cx="46.5" cy="24.3" r="1.2" fill="#fff" stroke="#111" stroke-width="0.6"/><path d="M46.5 25.5 V75.7" stroke="#111" stroke-width="0.5"/><circle cx="59.1" cy="24.3" r="1.2" fill="#fff" stroke="#111" stroke-width="0.6"/><path d="M59.1 25.5 V75.7" stroke="#111" stroke-width="0.5"/><circle cx="70.5" cy="24.3" r="1.2" fill="#fff" stroke="#111" stroke-width="0.6"/><path d="M70.5 25.5 V75.7" stroke="#111" stroke-width="0.5"/><circle cx="78.8" cy="24.3" r="1.2" fill="#fff" stroke="#111" stroke-width="0.6"/><path d="M78.8 25.5 V75.7" stroke="#111" stroke-width="0.5"/><circle cx="86.6" cy="24.3" r="1.2" fill="#fff" stroke="#111" stroke-width="0.6"/><path d="M86.6 25.5 V75.7" stroke="#111" stroke-width="0.5"/><circle cx="94.5" cy="24.3" r="1.2" fill="#fff" stroke="#111" stroke-width="0.6"/><path d="M94.5 25.5 V75.7" stroke="#111" stroke-width="0.5"/><circle cx="18.8" cy="75.5" r="1.1" fill="#fff" stroke="#111" stroke-width="0.6"/><circle cx="27.8" cy="75.5" r="1.1" fill="#fff" stroke="#111" stroke-width="0.6"/><circle cx="37.199999999999996" cy="75.5" r="1.1" fill="#fff" stroke="#111" stroke-width="0.6"/><circle cx="46.8" cy="75.5" r="1.1" fill="#fff" stroke="#111" stroke-width="0.6"/><circle cx="59.4" cy="75.5" r="1.1" fill="#fff" stroke="#111" stroke-width="0.6"/><circle cx="70.8" cy="75.5" r="1.1" fill="#fff" stroke="#111" stroke-width="0.6"/><circle cx="79.1" cy="75.5" r="1.1" fill="#fff" stroke="#111" stroke-width="0.6"/><circle cx="86.89999999999999" cy="75.5" r="1.1" fill="#fff" stroke="#111" stroke-width="0.6"/><circle cx="94.8" cy="75.5" r="1.1" fill="#fff" stroke="#111" stroke-width="0.6"/><circle cx="21.8" cy="75.5" r="1.1" fill="#fff" stroke="#111" stroke-width="0.6"/><circle cx="40.3" cy="75.5" r="1.1" fill="#fff" stroke="#111" stroke-width="0.6"/><circle cx="49.8" cy="75.5" r="1.1" fill="#fff" stroke="#111" stroke-width="0.6"/><circle cx="64.3" cy="75.5" r="1.1" fill="#fff" stroke="#111" stroke-width="0.6"/><rect x="18.5" y="25.4" width="78" height="2" fill="#333"/><rect x="18.5" y="27.4" width="78" height="10.9" fill="none" stroke="#111" stroke-width="0.7"/><path d="M19.5 27.4 V38.3" stroke="#000" stroke-width="0.7"/><path d="M22.2 27.4 V38.3" stroke="#000" stroke-width="0.9"/><path d="M26.2 27.4 V38.3" stroke="#000" stroke-width="0.7"/><path d="M29.9 27.4 V38.3" stroke="#000" stroke-width="0.5"/><path d="M32.9 27.4 V38.3" stroke="#000" stroke-width="0.7"/><path d="M37.9 27.4 V38.3" stroke="#000" stroke-width="0.7"/><path d="M41.7 27.4 V38.3" stroke="#000" stroke-width="0.5"/><path d="M44.3 27.4 V38.3" stroke="#000" stroke-width="0.7"/><path d="M48.1 27.4 V38.3" stroke="#000" stroke-width="0.5"/><path d="M50.8 27.4 V38.3" stroke="#000" stroke-width="0.5"/><path d="M54.8 27.4 V38.3" stroke="#000" stroke-width="0.9"/><path d="M58.1 27.4 V38.3" stroke="#000" stroke-width="0.7"/><path d="M61.9 27.4 V38.3" stroke="#000" stroke-width="0.5"/><path d="M67.0 27.4 V38.3" stroke="#000" stroke-width="0.7"/><path d="M72.4 27.4 V38.3" stroke="#000" stroke-width="0.9"/><path d="M76.1 27.4 V38.3" stroke="#000" stroke-width="0.7"/><path d="M80.2 27.4 V38.3" stroke="#000" stroke-width="0.5"/><path d="M83.9 27.4 V38.3" stroke="#000" stroke-width="0.9"/><path d="M88.0 27.4 V38.3" stroke="#000" stroke-width="0.5"/><path d="M91.3 27.4 V38.3" stroke="#000" stroke-width="0.7"/><path d="M94.4 27.4 V38.3" stroke="#000" stroke-width="0.9"/><rect x="61.2" y="33.3" width="2.2" height="1.3" fill="#000"/><rect x="34.3" y="33.3" width="2.0" height="1.2" fill="#000"/><rect x="73.2" y="33.6" width="1.2" height="1.9" fill="#000"/><rect x="35.4" y="30.2" width="2.1" height="1.1" fill="#000"/><rect x="31.7" y="33.3" width="1.4" height="1.8" fill="#000"/><rect x="81.4" y="30.4" width="2.1" height="1.9" fill="#000"/><rect x="30.5" y="34.4" width="2.1" height="2.2" fill="#000"/><rect x="69.5" y="34.5" width="1.8" height="2.4" fill="#000"/><rect x="34.1" y="33.0" width="2.6" height="1.1" fill="#000"/><rect x="65.7" y="29.0" width="1.5" height="1.6" fill="#000"/><rect x="28.7" y="34.5" width="1.2" height="2.1" fill="#000"/><rect x="47.2" y="34.1" width="1.0" height="1.5" fill="#000"/><rect x="92.9" y="30.1" width="1.3" height="1.2" fill="#000"/><rect x="25.7" y="33.4" width="1.5" height="2.0" fill="#000"/><rect x="46.4" y="30.2" width="1.3" height="2.1" fill="#000"/><rect x="89.4" y="29.4" width="1.2" height="2.0" fill="#000"/><rect x="77.7" y="30.4" width="1.7" height="1.5" fill="#000"/><rect x="46.5" y="29.1" width="2.4" height="1.4" fill="#000"/><path d="M18.5 34.6 H96.5" stroke="#000" stroke-width="0.6"/><rect x="12.5" y="38.3" width="5" height="31.4" fill="#bdbdbd"/><path d="M9.0 38.3 H107" stroke="#111" stroke-width="0.85"/><circle cx="8.3" cy="38.3" r="1" fill="#fff" stroke="#111" stroke-width="0.5"/><path d="M9.0 49.4 H107" stroke="#111" stroke-width="0.85"/><circle cx="8.3" cy="49.4" r="1" fill="#fff" stroke="#111" stroke-width="0.5"/><path d="M9.0 56.4 H107" stroke="#111" stroke-width="0.85"/><circle cx="8.3" cy="56.4" r="1" fill="#fff" stroke="#111" stroke-width="0.5"/><path d="M9.0 62.7 H107" stroke="#111" stroke-width="0.85"/><circle cx="8.3" cy="62.7" r="1" fill="#fff" stroke="#111" stroke-width="0.5"/><path d="M9.0 69.7 H107" stroke="#111" stroke-width="0.85"/><circle cx="8.3" cy="69.7" r="1" fill="#fff" stroke="#111" stroke-width="0.5"/><rect x="11.5" y="38.3" width="90.5" height="31.4" fill="none" stroke="#000" stroke-width="1"/><path d="M53.8 63.2 H60.3" stroke="#000" stroke-width="1.0"/><path d="M92.5 46.6 V51.3" stroke="#000" stroke-width="1.0"/><rect x="53.2" y="39.0" width="2.6" height="2.1" fill="#000"/><path d="M96.8 42.2 H102.0" stroke="#000" stroke-width="0.8"/><path d="M51.1 67.7 H57.5" stroke="#000" stroke-width="1.0"/><rect x="91.0" y="47.4" width="3.1" height="1.5" fill="#000"/><path d="M13.9 54.0 H19.7" stroke="#000" stroke-width="0.8"/><rect x="21.2" y="59.6" width="1.3" height="2.1" fill="#000"/><path d="M80.2 62.1 H85.4" stroke="#000" stroke-width="1.0"/><path d="M37.4 46.9 V49.2" stroke="#000" stroke-width="0.8"/><path d="M23.2 39.5 V43.9" stroke="#000" stroke-width="0.8"/><path d="M41.3 67.9 V69.7" stroke="#000" stroke-width="0.5"/><path d="M23.0 60.3 V62.9" stroke="#000" stroke-width="0.8"/><path d="M40.7 41.1 V44.7" stroke="#000" stroke-width="1.0"/><path d="M50.1 60.1 V65.4" stroke="#000" stroke-width="0.8"/><path d="M93.2 59.4 H96.5" stroke="#000" stroke-width="0.8"/><path d="M21.9 68.2 H25.8" stroke="#000" stroke-width="1.0"/><rect x="85.8" y="42.3" width="2.0" height="1.9" fill="#000"/><path d="M84.1 51.5 H89.3" stroke="#000" stroke-width="1.0"/><path d="M36.0 62.5 V65.2" stroke="#000" stroke-width="0.8"/><path d="M88.3 44.0 H95.3" stroke="#000" stroke-width="1.0"/><path d="M91.4 52.8 V56.7" stroke="#000" stroke-width="0.5"/><path d="M80.4 48.7 V53.0" stroke="#000" stroke-width="0.8"/><path d="M38.1 62.3 H41.1" stroke="#000" stroke-width="0.5"/><path d="M38.6 66.6 H41.1" stroke="#000" stroke-width="0.5"/><path d="M34.1 45.0 H41.3" stroke="#000" stroke-width="0.5"/><rect x="93.2" y="55.8" width="3.2" height="3.0" fill="#000"/><path d="M62.6 42.0 V44.2" stroke="#000" stroke-width="0.8"/><path d="M47.5 53.9 V56.5" stroke="#000" stroke-width="0.5"/><path d="M73.1 50.2 V52.7" stroke="#000" stroke-width="1.0"/><path d="M67.9 48.5 V53.9" stroke="#000" stroke-width="0.5"/><path d="M61.5 48.0 V53.8" stroke="#000" stroke-width="1.0"/><path d="M66.4 39.1 V43.3" stroke="#000" stroke-width="0.5"/><path d="M57.2 47.5 H62.6" stroke="#000" stroke-width="0.8"/><path d="M84.0 39.2 H89.8" stroke="#000" stroke-width="0.5"/><path d="M66.6 49.0 V54.6" stroke="#000" stroke-width="0.5"/><path d="M26.5 50.1 V53.7" stroke="#000" stroke-width="0.5"/><path d="M53.3 43.5 H55.6" stroke="#000" stroke-width="0.8"/><path d="M78.2 44.6 V50.6" stroke="#000" stroke-width="0.8"/><path d="M77.8 48.9 V52.7" stroke="#000" stroke-width="1.0"/><rect x="49.8" y="65.5" width="3.0" height="1.3" fill="#000"/><path d="M22.3 63.9 V67.1" stroke="#000" stroke-width="0.5"/><rect x="30.9" y="63.6" width="3.1" height="2.0" fill="#000"/><path d="M12.6 45.9 V50.6" stroke="#000" stroke-width="0.8"/><path d="M89.1 60.5 H95.8" stroke="#000" stroke-width="0.8"/><rect x="26.9" y="56.3" width="1.8" height="2.2" fill="#000"/><rect x="66.4" y="67.5" width="2.3" height="2.3" fill="#000"/><path d="M30.0 63.4 H35.9" stroke="#000" stroke-width="0.5"/><path d="M14.3 47.4 H19.1" stroke="#000" stroke-width="0.8"/><path d="M26.2 54.5 H33.8" stroke="#000" stroke-width="0.5"/><path d="M31.9 52.4 V57.6" stroke="#000" stroke-width="1.0"/><path d="M74.1 53.5 V56.2" stroke="#000" stroke-width="0.8"/><path d="M74.0 68.1 V69.7" stroke="#000" stroke-width="0.8"/><path d="M55.2 44.6 V50.6" stroke="#000" stroke-width="0.8"/><path d="M86.3 46.8 V51.5" stroke="#000" stroke-width="0.8"/><rect x="60.3" y="66.9" width="2.3" height="1.6" fill="#000"/><path d="M34.5 50.6 V54.2" stroke="#000" stroke-width="1.0"/><path d="M90.3 41.2 H94.6" stroke="#000" stroke-width="0.5"/><path d="M30.3 55.0 V60.0" stroke="#000" stroke-width="0.8"/><rect x="20.0" y="64.3" width="1.7" height="2.0" fill="#000"/><path d="M83.5 60.6 H91.1" stroke="#000" stroke-width="0.8"/><path d="M77.1 59.0 H81.9" stroke="#000" stroke-width="0.8"/><path d="M20.9 45.7 H25.2" stroke="#000" stroke-width="0.5"/><path d="M98.0 45.4 H102.0" stroke="#000" stroke-width="1.0"/><path d="M82.4 44.8 H88.3" stroke="#000" stroke-width="0.8"/><path d="M19.0 47.7 H25.1" stroke="#000" stroke-width="0.5"/><path d="M40.5 57.8 V63.7" stroke="#000" stroke-width="1.0"/><path d="M49.2 39.3 H55.4" stroke="#000" stroke-width="1.0"/><path d="M49.1 67.5 H53.8" stroke="#000" stroke-width="1.0"/><rect x="23.8" y="40.2" width="3.3" height="2.0" fill="#000"/><path d="M90.8 60.6 V65.2" stroke="#000" stroke-width="1.0"/><rect x="70.3" y="53.6" width="2.2" height="2.0" fill="#000"/><path d="M80.6 54.4 V56.4" stroke="#000" stroke-width="1.0"/><path d="M16.8 58.3 V60.7" stroke="#000" stroke-width="0.5"/><path d="M64.7 54.4 H72.4" stroke="#000" stroke-width="0.5"/><rect x="25.0" y="41.2" width="2.2" height="1.3" fill="#000"/><path d="M42.2 50.1 V55.0" stroke="#000" stroke-width="1.0"/><path d="M12.9 41.7 V46.4" stroke="#000" stroke-width="0.8"/><path d="M85.7 64.9 V67.7" stroke="#000" stroke-width="1.0"/><path d="M50.9 65.9 H53.5" stroke="#000" stroke-width="1.0"/><path d="M46.6 47.1 V51.1" stroke="#000" stroke-width="1.0"/><path d="M92.6 42.5 V46.5" stroke="#000" stroke-width="0.8"/><path d="M96.9 52.9 V58.6" stroke="#000" stroke-width="1.0"/><path d="M70.0 61.8 H72.9" stroke="#000" stroke-width="1.0"/><path d="M35.4 63.2 H41.8" stroke="#000" stroke-width="0.8"/><path d="M87.7 49.8 V53.8" stroke="#000" stroke-width="0.5"/><path d="M56.6 46.4 V50.8" stroke="#000" stroke-width="0.8"/><path d="M44.5 64.7 V68.9" stroke="#000" stroke-width="1.0"/><path d="M37.5 53.9 H43.0" stroke="#000" stroke-width="1.0"/><path d="M70.2 49.7 H77.1" stroke="#000" stroke-width="0.8"/><rect x="30.6" y="55.0" width="2.6" height="2.3" fill="#000"/><path d="M84.4 63.4 H90.6" stroke="#000" stroke-width="0.8"/><path d="M42.6 45.9 H44.9" stroke="#000" stroke-width="0.5"/><path d="M22.3 62.4 H24.4" stroke="#000" stroke-width="0.8"/><path d="M35.9 50.8 H41.5" stroke="#000" stroke-width="0.8"/><path d="M60.5 41.5 H68.2" stroke="#000" stroke-width="0.5"/><path d="M32.8 55.7 H37.5" stroke="#000" stroke-width="0.8"/><path d="M33.6 60.0 H36.3" stroke="#000" stroke-width="1.0"/><path d="M69.8 47.2 H72.9" stroke="#000" stroke-width="0.8"/><path d="M44.9 66.4 V68.6" stroke="#000" stroke-width="0.8"/><path d="M56.5 64.5 V69.7" stroke="#000" stroke-width="0.5"/><path d="M20.5 54.7 H26.8" stroke="#000" stroke-width="0.5"/><path d="M36.7 42.6 H44.1" stroke="#000" stroke-width="0.5"/><path d="M24.5 50.8 H30.8" stroke="#000" stroke-width="0.5"/><path d="M16.0 66.0 V68.5" stroke="#000" stroke-width="0.8"/><path d="M66.0 63.0 H71.8" stroke="#000" stroke-width="0.8"/><path d="M27.3 66.5 H29.8" stroke="#000" stroke-width="1.0"/><path d="M35.7 53.5 V57.8" stroke="#000" stroke-width="1.0"/><path d="M33.7 53.4 V56.0" stroke="#000" stroke-width="0.8"/><path d="M97.7 43.0 H101.3" stroke="#000" stroke-width="1.0"/><path d="M60.8 52.0 V56.1" stroke="#000" stroke-width="1.0"/><path d="M45.5 55.7 V61.5" stroke="#000" stroke-width="1.0"/><path d="M51.2 43.8 V46.2" stroke="#000" stroke-width="0.8"/><path d="M23.4 61.5 V65.6" stroke="#000" stroke-width="1.0"/><rect x="20.8" y="56.5" width="1.8" height="2.8" fill="#000"/><path d="M43.1 67.9 H48.6" stroke="#000" stroke-width="1.0"/><path d="M53.2 55.4 V60.8" stroke="#000" stroke-width="1.0"/><path d="M73.5 62.1 V67.5" stroke="#000" stroke-width="0.5"/><path d="M15.3 66.4 V69.7" stroke="#000" stroke-width="1.0"/><path d="M55.1 59.4 V63.6" stroke="#000" stroke-width="0.8"/><rect x="93.0" y="62.9" width="2.6" height="1.3" fill="#000"/><path d="M22.3 62.9 V68.4" stroke="#000" stroke-width="0.8"/><path d="M15.6 48.4 H23.2" stroke="#000" stroke-width="0.8"/><rect x="81.8" y="66.4" width="1.4" height="2.4" fill="#000"/><path d="M47.0 56.3 H51.6" stroke="#000" stroke-width="0.8"/><path d="M67.3 60.3 V65.2" stroke="#000" stroke-width="0.5"/><path d="M59.7 49.4 H63.1" stroke="#000" stroke-width="0.5"/><path d="M19.0 48.1 V51.3" stroke="#000" stroke-width="0.5"/><rect x="90.6" y="62.0" width="3.3" height="1.9" fill="#000"/><path d="M79.0 52.2 V56.9" stroke="#000" stroke-width="1.0"/><path d="M74.9 68.3 H80.7" stroke="#000" stroke-width="0.5"/><path d="M55.1 49.8 V55.4" stroke="#000" stroke-width="1.0"/><path d="M94.0 60.4 H100.7" stroke="#000" stroke-width="0.8"/><path d="M26.0 43.9 H33.5" stroke="#000" stroke-width="0.5"/><path d="M15.3 47.2 H17.4" stroke="#000" stroke-width="0.5"/><rect x="68.8" y="50.6" width="2.1" height="2.8" fill="#000"/><path d="M18.8 39.7 V43.1" stroke="#000" stroke-width="0.8"/><rect x="89.0" y="62.0" width="2.8" height="1.4" fill="#000"/><path d="M59.1 64.9 V69.7" stroke="#000" stroke-width="1.0"/><rect x="41.9" y="68.7" width="2.0" height="2.6" fill="#000"/><path d="M92.2 60.6 H99.9" stroke="#000" stroke-width="0.8"/><path d="M77.6 44.4 V46.5" stroke="#000" stroke-width="0.8"/><path d="M14.6 43.9 V49.7" stroke="#000" stroke-width="0.5"/><path d="M87.5 66.4 H94.0" stroke="#000" stroke-width="1.0"/><path d="M35.2 56.8 H38.1" stroke="#000" stroke-width="1.0"/><path d="M35.3 45.6 H38.4" stroke="#000" stroke-width="0.5"/><path d="M61.7 58.5 V60.6" stroke="#000" stroke-width="1.0"/><path d="M19.5 51.3 V53.5" stroke="#000" stroke-width="0.8"/><path d="M35.8 67.7 V69.7" stroke="#000" stroke-width="0.5"/><path d="M42.6 62.3 H46.3" stroke="#000" stroke-width="1.0"/><path d="M44.7 61.3 H48.5" stroke="#000" stroke-width="1.0"/><rect x="68.4" y="40.2" width="1.6" height="2.0" fill="#000"/><path d="M48.6 40.0 V45.7" stroke="#000" stroke-width="0.8"/><path d="M89.2 46.8 V51.0" stroke="#000" stroke-width="1.0"/><path d="M62.0 39.3 V42.9" stroke="#000" stroke-width="0.5"/><rect x="16.9" y="58.4" width="3.3" height="1.9" fill="#000"/><path d="M54.1 62.8 H60.5" stroke="#000" stroke-width="0.5"/><path d="M81.2 68.0 H87.5" stroke="#000" stroke-width="0.5"/><rect x="95.2" y="57.0" width="2.0" height="1.6" fill="#000"/><path d="M51.8 46.9 V49.5" stroke="#000" stroke-width="0.8"/><path d="M21.6 51.4 H25.8" stroke="#000" stroke-width="0.8"/><path d="M58.4 67.5 V69.7" stroke="#000" stroke-width="0.5"/><rect x="29.8" y="43.1" width="1.7" height="1.9" fill="#000"/><rect x="50.9" y="54.1" width="3.0" height="1.2" fill="#000"/><rect x="90.5" y="50.9" width="2.3" height="2.7" fill="#000"/><path d="M94.8 50.5 H102.0" stroke="#000" stroke-width="0.5"/><path d="M66.3 44.1 H69.1" stroke="#000" stroke-width="0.8"/><rect x="24.3" y="58.6" width="3.3" height="2.5" fill="#000"/><rect x="13.9" y="40.1" width="1.3" height="2.1" fill="#000"/><path d="M64.1 66.9 H69.6" stroke="#000" stroke-width="0.5"/><path d="M46.6 63.2 H54.5" stroke="#000" stroke-width="1.0"/><path d="M94.3 53.8 V59.2" stroke="#000" stroke-width="0.5"/><path d="M37.0 50.2 V55.0" stroke="#000" stroke-width="0.5"/><path d="M56.9 51.5 H59.7" stroke="#000" stroke-width="0.5"/><path d="M64.2 47.1 H70.9" stroke="#000" stroke-width="0.5"/><path d="M94.5 45.6 V48.0" stroke="#000" stroke-width="0.8"/><path d="M33.2 51.0 V56.5" stroke="#000" stroke-width="0.8"/><path d="M55.1 65.2 H62.1" stroke="#000" stroke-width="0.8"/><rect x="75.6" y="45.6" width="2.0" height="2.7" fill="#000"/><path d="M15.8 45.9 V51.5" stroke="#000" stroke-width="0.5"/><path d="M78.3 52.1 H80.6" stroke="#000" stroke-width="1.0"/><path d="M56.9 54.2 V56.2" stroke="#000" stroke-width="0.5"/><path d="M59.5 39.3 H64.3" stroke="#000" stroke-width="1.0"/><path d="M49.8 48.4 H55.0" stroke="#000" stroke-width="1.0"/><path d="M62.1 65.3 V68.8" stroke="#000" stroke-width="1.0"/><path d="M48.8 50.4 V55.8" stroke="#000" stroke-width="0.8"/><rect x="89.1" y="64.9" width="1.2" height="1.7" fill="#000"/><path d="M74.9 49.5 V55.1" stroke="#000" stroke-width="1.0"/><rect x="25.3" y="58.6" width="2.9" height="2.9" fill="#000"/><rect x="18.0" y="47.9" width="3.2" height="2.3" fill="#000"/><rect x="63.3" y="40.3" width="2.6" height="2.7" fill="#000"/><path d="M81.5 62.3 H83.5" stroke="#000" stroke-width="0.5"/><path d="M45.5 42.5 V48.3" stroke="#000" stroke-width="0.5"/><path d="M76.9 47.7 H83.3" stroke="#000" stroke-width="0.8"/><path d="M29.7 68.7 V69.7" stroke="#000" stroke-width="0.5"/><path d="M22.4 58.9 V61.5" stroke="#000" stroke-width="1.0"/><path d="M47.7 67.7 H52.1" stroke="#000" stroke-width="0.5"/><path d="M84.1 55.9 V59.1" stroke="#000" stroke-width="0.5"/><rect x="85.6" y="66.9" width="1.8" height="2.6" fill="#000"/><path d="M18.1 63.1 V67.9" stroke="#000" stroke-width="0.8"/><path d="M29.7 58.5 H36.1" stroke="#000" stroke-width="0.8"/><rect x="98.0" y="54.0" width="1.3" height="1.4" fill="#000"/><path d="M32.8 52.2 H36.8" stroke="#000" stroke-width="0.5"/><rect x="27.0" y="43.0" width="2.2" height="2.7" fill="#000"/><path d="M36.4 54.9 V59.1" stroke="#000" stroke-width="1.0"/><rect x="93.4" y="45.3" width="2.5" height="2.3" fill="#000"/><rect x="70.6" y="59.2" width="3.1" height="1.4" fill="#000"/><path d="M66.8 48.2 H74.6" stroke="#000" stroke-width="0.5"/><path d="M14.6 41.6 V46.7" stroke="#000" stroke-width="0.5"/><rect x="56.3" y="41.5" width="3.1" height="1.8" fill="#000"/><rect x="89.6" y="46.2" width="1.3" height="1.5" fill="#000"/><rect x="40.4" y="48.8" width="3.3" height="2.2" fill="#000"/><path d="M78.3 60.9 V64.6" stroke="#000" stroke-width="0.5"/><path d="M38.8 60.5 V66.1" stroke="#000" stroke-width="0.8"/><path d="M84.1 50.0 H87.4" stroke="#000" stroke-width="1.0"/><path d="M60.7 41.2 V45.9" stroke="#000" stroke-width="0.8"/><rect x="83.0" y="63.7" width="2.8" height="2.0" fill="#000"/><path d="M59.0 40.1 V42.4" stroke="#000" stroke-width="0.8"/><path d="M67.9 58.0 H70.8" stroke="#000" stroke-width="0.5"/><path d="M45.1 46.4 H48.3" stroke="#000" stroke-width="1.0"/><rect x="92.0" y="42.0" width="2.7" height="1.5" fill="#000"/><rect x="53" y="56" width="10" height="14" fill="#111"/><path d="M20 50 L45 60 M70 52 L90 62" stroke="#555" stroke-width="2" opacity="0.6"/></symbol><symbol id="sheet7" viewBox="0 0 152 118"><use href="#frame"/><path d="M100 41.5 L127 40.5 M100 69 L127 66.5" stroke="#000" stroke-width="0.8"/><circle cx="18.5" cy="24.3" r="1.2" fill="#fff" stroke="#111" stroke-width="0.6"/><path d="M18.5 25.5 V75.7" stroke="#111" stroke-width="0.5"/><circle cx="27.5" cy="24.3" r="1.2" fill="#fff" stroke="#111" stroke-width="0.6"/><path d="M27.5 25.5 V75.7" stroke="#111" stroke-width="0.5"/><circle cx="36.9" cy="24.3" r="1.2" fill="#fff" stroke="#111" stroke-width="0.6"/><path d="M36.9 25.5 V75.7" stroke="#111" stroke-width="0.5"/><circle cx="46.5" cy="24.3" r="1.2" fill="#fff" stroke="#111" stroke-width="0.6"/><path d="M46.5 25.5 V75.7" stroke="#111" stroke-width="0.5"/><circle cx="59.1" cy="24.3" r="1.2" fill="#fff" stroke="#111" stroke-width="0.6"/><path d="M59.1 25.5 V75.7" stroke="#111" stroke-width="0.5"/><circle cx="70.5" cy="24.3" r="1.2" fill="#fff" stroke="#111" stroke-width="0.6"/><path d="M70.5 25.5 V75.7" stroke="#111" stroke-width="0.5"/><circle cx="78.8" cy="24.3" r="1.2" fill="#fff" stroke="#111" stroke-width="0.6"/><path d="M78.8 25.5 V75.7" stroke="#111" stroke-width="0.5"/><circle cx="86.6" cy="24.3" r="1.2" fill="#fff" stroke="#111" stroke-width="0.6"/><path d="M86.6 25.5 V75.7" stroke="#111" stroke-width="0.5"/><circle cx="94.5" cy="24.3" r="1.2" fill="#fff" stroke="#111" stroke-width="0.6"/><path d="M94.5 25.5 V75.7" stroke="#111" stroke-width="0.5"/><circle cx="18.8" cy="75.5" r="1.1" fill="#fff" stroke="#111" stroke-width="0.6"/><circle cx="27.8" cy="75.5" r="1.1" fill="#fff" stroke="#111" stroke-width="0.6"/><circle cx="37.199999999999996" cy="75.5" r="1.1" fill="#fff" stroke="#111" stroke-width="0.6"/><circle cx="46.8" cy="75.5" r="1.1" fill="#fff" stroke="#111" stroke-width="0.6"/><circle cx="59.4" cy="75.5" r="1.1" fill="#fff" stroke="#111" stroke-width="0.6"/><circle cx="70.8" cy="75.5" r="1.1" fill="#fff" stroke="#111" stroke-width="0.6"/><circle cx="79.1" cy="75.5" r="1.1" fill="#fff" stroke="#111" stroke-width="0.6"/><circle cx="86.89999999999999" cy="75.5" r="1.1" fill="#fff" stroke="#111" stroke-width="0.6"/><circle cx="94.8" cy="75.5" r="1.1" fill="#fff" stroke="#111" stroke-width="0.6"/><circle cx="21.8" cy="75.5" r="1.1" fill="#fff" stroke="#111" stroke-width="0.6"/><circle cx="40.3" cy="75.5" r="1.1" fill="#fff" stroke="#111" stroke-width="0.6"/><circle cx="49.8" cy="75.5" r="1.1" fill="#fff" stroke="#111" stroke-width="0.6"/><circle cx="64.3" cy="75.5" r="1.1" fill="#fff" stroke="#111" stroke-width="0.6"/><path d="M11.5 38.3 H96" stroke="#000" stroke-width="1.6"/><path d="M9.0 38.3 H107" stroke="#111" stroke-width="0.85"/><circle cx="8.3" cy="38.3" r="1" fill="#fff" stroke="#111" stroke-width="0.5"/><path d="M9.0 49.4 H107" stroke="#111" stroke-width="0.85"/><circle cx="8.3" cy="49.4" r="1" fill="#fff" stroke="#111" stroke-width="0.5"/><path d="M9.0 56.4 H107" stroke="#111" stroke-width="0.85"/><circle cx="8.3" cy="56.4" r="1" fill="#fff" stroke="#111" stroke-width="0.5"/><path d="M9.0 62.7 H107" stroke="#111" stroke-width="0.85"/><circle cx="8.3" cy="62.7" r="1" fill="#fff" stroke="#111" stroke-width="0.5"/><path d="M9.0 69.7 H107" stroke="#111" stroke-width="0.85"/><circle cx="8.3" cy="69.7" r="1" fill="#fff" stroke="#111" stroke-width="0.5"/><rect x="11.5" y="38.3" width="90.5" height="31.4" fill="none" stroke="#000" stroke-width="1"/><rect x="31.7" y="66.7" width="1.3" height="2.7" fill="#000"/><path d="M73.6 59.1 H80.5" stroke="#000" stroke-width="0.8"/><path d="M54.0 65.7 H56.9" stroke="#000" stroke-width="1.0"/><rect x="41.5" y="58.8" width="3.3" height="2.8" fill="#000"/><rect x="21.1" y="58.0" width="1.9" height="1.3" fill="#000"/><rect x="76.5" y="55.6" width="1.8" height="1.4" fill="#000"/><path d="M62.0 64.1 V66.5" stroke="#000" stroke-width="0.8"/><path d="M61.6 58.7 H64.1" stroke="#000" stroke-width="0.8"/><path d="M58.4 45.6 V51.5" stroke="#000" stroke-width="0.8"/><path d="M76.2 56.6 H82.8" stroke="#000" stroke-width="1.0"/><path d="M95.1 50.4 V53.8" stroke="#000" stroke-width="1.0"/><path d="M85.1 46.4 H88.0" stroke="#000" stroke-width="1.0"/><path d="M30.7 57.5 H36.3" stroke="#000" stroke-width="0.5"/><path d="M66.0 54.5 V59.6" stroke="#000" stroke-width="0.8"/><path d="M84.5 48.2 V52.5" stroke="#000" stroke-width="1.0"/><rect x="22.6" y="56.1" width="1.4" height="2.2" fill="#000"/><path d="M16.3 51.4 H22.7" stroke="#000" stroke-width="1.0"/><path d="M40.9 58.2 H44.7" stroke="#000" stroke-width="0.8"/><rect x="53.8" y="60.6" width="1.6" height="2.8" fill="#000"/><rect x="32.3" y="57.0" width="3.1" height="1.8" fill="#000"/><path d="M73.2 49.7 H81.0" stroke="#000" stroke-width="0.5"/><path d="M31.3 57.4 H37.5" stroke="#000" stroke-width="0.8"/><path d="M40.9 38.8 V43.8" stroke="#000" stroke-width="1.0"/><path d="M31.5 46.2 H34.3" stroke="#000" stroke-width="1.0"/><rect x="81.5" y="45.6" width="3.0" height="2.4" fill="#000"/><rect x="65.2" y="54.7" width="3.4" height="1.3" fill="#000"/><path d="M77.8 43.8 V48.7" stroke="#000" stroke-width="0.5"/><path d="M62.0 43.3 V47.3" stroke="#000" stroke-width="0.5"/><path d="M52.5 43.3 H58.5" stroke="#000" stroke-width="0.5"/><path d="M90.1 44.4 V49.5" stroke="#000" stroke-width="0.8"/><rect x="38.7" y="43.6" width="1.6" height="3.0" fill="#000"/><rect x="58.5" y="45.6" width="2.8" height="2.9" fill="#000"/><path d="M85.7 59.8 H92.7" stroke="#000" stroke-width="1.0"/><path d="M21.7 58.2 H24.7" stroke="#000" stroke-width="1.0"/><rect x="15.1" y="65.9" width="1.7" height="2.6" fill="#000"/><path d="M52.9 43.6 H57.6" stroke="#000" stroke-width="0.8"/><path d="M77.4 40.9 H80.1" stroke="#000" stroke-width="0.8"/><path d="M85.5 42.4 V45.1" stroke="#000" stroke-width="1.0"/><path d="M95.4 45.8 V50.5" stroke="#000" stroke-width="1.0"/><path d="M25.0 64.9 H28.0" stroke="#000" stroke-width="0.5"/><path d="M89.3 64.0 V67.8" stroke="#000" stroke-width="1.0"/><path d="M15.2 64.4 V68.4" stroke="#000" stroke-width="0.8"/><path d="M22.2 50.5 H26.7" stroke="#000" stroke-width="1.0"/><path d="M80.7 60.3 H82.9" stroke="#000" stroke-width="0.8"/><path d="M57.8 51.3 H63.6" stroke="#000" stroke-width="0.5"/><path d="M65.7 60.9 H67.8" stroke="#000" stroke-width="0.5"/><rect x="86.0" y="61.9" width="2.6" height="1.2" fill="#000"/><path d="M48.5 51.5 V56.1" stroke="#000" stroke-width="1.0"/><path d="M15.2 49.8 H21.1" stroke="#000" stroke-width="0.8"/><path d="M68.2 68.6 V69.7" stroke="#000" stroke-width="0.5"/><rect x="37.4" y="66.2" width="2.2" height="2.3" fill="#000"/><rect x="68.7" y="40.8" width="2.5" height="2.5" fill="#000"/><path d="M62.9 46.7 V48.8" stroke="#000" stroke-width="0.5"/><path d="M57.2 64.7 H60.4" stroke="#000" stroke-width="0.8"/><rect x="81.4" y="51.9" width="3.2" height="2.2" fill="#000"/><path d="M84.6 45.0 H87.5" stroke="#000" stroke-width="0.8"/><rect x="70.8" y="53.6" width="2.4" height="2.7" fill="#000"/><path d="M87.9 66.4 H94.7" stroke="#000" stroke-width="0.5"/><path d="M71.1 57.6 V60.8" stroke="#000" stroke-width="1.0"/><path d="M76.0 54.0 H83.3" stroke="#000" stroke-width="1.0"/><rect x="16.9" y="56.3" width="1.6" height="1.7" fill="#000"/><path d="M80.8 45.5 H84.4" stroke="#000" stroke-width="0.8"/><path d="M49.3 62.6 H54.7" stroke="#000" stroke-width="0.8"/><path d="M60.2 44.0 V47.3" stroke="#000" stroke-width="1.0"/><path d="M26.9 58.8 H29.9" stroke="#000" stroke-width="0.8"/><path d="M34.4 62.6 V66.6" stroke="#000" stroke-width="0.5"/><path d="M82.6 56.2 H87.0" stroke="#000" stroke-width="1.0"/><path d="M93.8 43.7 V46.1" stroke="#000" stroke-width="0.8"/><path d="M31.9 52.9 H36.3" stroke="#000" stroke-width="0.5"/><rect x="24.0" y="39.2" width="1.4" height="1.5" fill="#000"/><rect x="45.1" y="43.0" width="2.0" height="2.9" fill="#000"/><rect x="64.8" y="55.5" width="1.8" height="2.7" fill="#000"/><path d="M58.0 55.3 V59.8" stroke="#000" stroke-width="1.0"/><rect x="94.2" y="53.4" width="2.4" height="1.6" fill="#000"/><path d="M33.0 61.3 V65.0" stroke="#000" stroke-width="0.8"/><path d="M96.4 67.1 H100.1" stroke="#000" stroke-width="0.8"/><rect x="35.6" y="65.6" width="2.2" height="2.1" fill="#000"/><rect x="23.7" y="53.5" width="2.2" height="1.8" fill="#000"/><path d="M48.8 60.8 H56.3" stroke="#000" stroke-width="0.5"/><path d="M84.0 68.6 V69.7" stroke="#000" stroke-width="0.5"/><path d="M20.7 44.7 V47.4" stroke="#000" stroke-width="0.5"/><path d="M78.6 42.7 H81.5" stroke="#000" stroke-width="0.5"/><path d="M87.7 52.8 V55.4" stroke="#000" stroke-width="0.8"/><path d="M44.5 59.7 V63.5" stroke="#000" stroke-width="0.8"/><path d="M52.4 65.7 V69.7" stroke="#000" stroke-width="1.0"/><path d="M57.5 64.2 V66.9" stroke="#000" stroke-width="0.8"/><path d="M66.0 67.3 V69.7" stroke="#000" stroke-width="0.8"/><rect x="94.8" y="45.6" width="3.0" height="2.1" fill="#000"/><path d="M31.4 60.2 H34.9" stroke="#000" stroke-width="0.5"/><rect x="45.3" y="51.9" width="3.4" height="2.1" fill="#000"/><path d="M38.1 53.9 H41.7" stroke="#000" stroke-width="1.0"/><path d="M50.3 51.7 V56.7" stroke="#000" stroke-width="1.0"/><path d="M28.3 64.9 H35.1" stroke="#000" stroke-width="1.0"/><path d="M35.2 62.1 V66.4" stroke="#000" stroke-width="0.8"/><path d="M95.8 58.3 V63.5" stroke="#000" stroke-width="1.0"/><path d="M19.7 39.3 V42.7" stroke="#000" stroke-width="0.8"/><rect x="33.2" y="64.6" width="2.8" height="1.6" fill="#000"/><path d="M17.1 63.2 H21.0" stroke="#000" stroke-width="0.8"/><path d="M33.6 47.1 H41.2" stroke="#000" stroke-width="1.0"/><path d="M49.4 56.5 V60.3" stroke="#000" stroke-width="0.8"/><path d="M78.9 58.3 H84.7" stroke="#000" stroke-width="0.8"/><path d="M63.3 57.2 V62.4" stroke="#000" stroke-width="1.0"/><path d="M94.3 61.8 H102.0" stroke="#000" stroke-width="0.5"/><path d="M25.8 47.5 V51.0" stroke="#000" stroke-width="1.0"/><rect x="96.5" y="55.4" width="1.9" height="2.2" fill="#000"/><path d="M94.6 43.9 H99.6" stroke="#000" stroke-width="1.0"/><path d="M43.5 56.4 V61.9" stroke="#000" stroke-width="0.5"/><path d="M14.6 40.9 V45.6" stroke="#000" stroke-width="0.8"/><path d="M17.0 68.6 V69.7" stroke="#000" stroke-width="0.5"/><path d="M64.7 57.6 V60.6" stroke="#000" stroke-width="0.8"/><path d="M70.6 56.6 H74.1" stroke="#000" stroke-width="1.0"/><path d="M65.4 50.8 H69.1" stroke="#000" stroke-width="0.5"/><rect x="49.0" y="48.5" width="1.7" height="2.2" fill="#000"/><rect x="32.6" y="59.2" width="2.4" height="2.1" fill="#000"/><path d="M93.4 57.9 V61.3" stroke="#000" stroke-width="0.8"/><path d="M12.5 64.2 V69.2" stroke="#000" stroke-width="1.0"/><path d="M56.5 56.5 V59.8" stroke="#000" stroke-width="1.0"/><path d="M69.0 52.8 V56.4" stroke="#000" stroke-width="0.8"/><path d="M60.5 66.6 H68.3" stroke="#000" stroke-width="0.8"/><rect x="22.8" y="39.7" width="2.5" height="1.6" fill="#000"/><path d="M90.9 62.2 V67.0" stroke="#000" stroke-width="0.5"/><path d="M43.7 54.8 H48.9" stroke="#000" stroke-width="0.8"/><path d="M57.5 40.2 H61.7" stroke="#000" stroke-width="1.0"/><path d="M79.4 38.8 H83.5" stroke="#000" stroke-width="0.5"/><path d="M36.7 52.6 H40.5" stroke="#000" stroke-width="1.0"/><rect x="20.0" y="58.5" width="1.3" height="1.3" fill="#000"/><rect x="66.4" y="56.4" width="1.3" height="2.6" fill="#000"/><path d="M85.6 39.4 V44.8" stroke="#000" stroke-width="0.8"/><rect x="67.6" y="41.9" width="1.3" height="1.7" fill="#000"/><path d="M78.2 54.4 H85.9" stroke="#000" stroke-width="0.5"/><path d="M73.9 57.4 H80.6" stroke="#000" stroke-width="0.5"/><rect x="24.8" y="46.6" width="1.6" height="2.2" fill="#000"/><path d="M90.0 44.4 V48.4" stroke="#000" stroke-width="0.5"/><path d="M66.9 57.6 H71.4" stroke="#000" stroke-width="1.0"/><path d="M94.9 57.8 H98.2" stroke="#000" stroke-width="0.8"/><path d="M43.0 58.8 V64.5" stroke="#000" stroke-width="0.5"/><path d="M47.1 41.1 H51.4" stroke="#000" stroke-width="0.8"/><path d="M57.8 54.9 H60.0" stroke="#000" stroke-width="1.0"/><path d="M95.5 59.9 V65.7" stroke="#000" stroke-width="0.8"/><path d="M46.9 56.8 V62.0" stroke="#000" stroke-width="0.5"/><path d="M64.1 62.9 V65.1" stroke="#000" stroke-width="0.5"/><rect x="88.6" y="57.5" width="2.6" height="1.2" fill="#000"/><path d="M79.0 41.9 V44.3" stroke="#000" stroke-width="0.5"/><path d="M42.1 61.4 H46.7" stroke="#000" stroke-width="0.5"/><rect x="76.9" y="56.3" width="1.3" height="2.5" fill="#000"/><rect x="53.2" y="46.2" width="3.5" height="1.9" fill="#000"/><path d="M88.1 42.5 H94.7" stroke="#000" stroke-width="0.8"/><path d="M76.7 47.2 H82.0" stroke="#000" stroke-width="0.8"/><path d="M76.3 49.0 V55.0" stroke="#000" stroke-width="1.0"/><path d="M83.1 48.8 V53.2" stroke="#000" stroke-width="1.0"/><rect x="66.7" y="57.6" width="1.5" height="1.5" fill="#000"/><path d="M59.8 61.2 V66.5" stroke="#000" stroke-width="0.5"/><path d="M49.4 39.8 H54.7" stroke="#000" stroke-width="0.5"/><path d="M45.9 51.8 h7.9" stroke="#e010e0" stroke-width="0.9"/><path d="M73.8 55.9 h7.9" stroke="#e010e0" stroke-width="0.9"/><path d="M70.5 60.0 h7.0" stroke="#e010e0" stroke-width="0.9"/><path d="M57.3 44.1 h4.7" stroke="#10b010" stroke-width="0.9"/><path d="M79.7 41.6 h2.1" stroke="#1010e0" stroke-width="0.9"/><path d="M31.1 50.0 h4.7" stroke="#1010e0" stroke-width="0.9"/><path d="M32.6 62.2 v5.9" stroke="#1010e0" stroke-width="0.9"/><path d="M71.3 55.5 h6.9" stroke="#1010e0" stroke-width="0.9"/><path d="M22.5 41.3 h9.7" stroke="#10b010" stroke-width="0.9"/><path d="M26.3 59.2 v3.6" stroke="#e010e0" stroke-width="0.9"/><path d="M61.8 40.1 h6.1" stroke="#10b010" stroke-width="0.9"/><path d="M19.4 53.9 h7.5" stroke="#1010e0" stroke-width="0.9"/><path d="M47.4 65.3 v7.2" stroke="#e010e0" stroke-width="0.9"/><path d="M89.3 65.5 h8.3" stroke="#e010e0" stroke-width="0.9"/><path d="M74.4 62.3 h5.2" stroke="#1010e0" stroke-width="0.9"/><path d="M47.2 53.4 v7.0" stroke="#1010e0" stroke-width="0.9"/><path d="M82.4 65.5 h7.1" stroke="#1010e0" stroke-width="0.9"/><path d="M91.5 40.2 v6.0" stroke="#1010e0" stroke-width="0.9"/><path d="M31.8 60.5 h3.8" stroke="#1010e0" stroke-width="0.9"/><path d="M74.3 49.7 h7.1" stroke="#1010e0" stroke-width="0.9"/><path d="M75.1 49.8 h8.8" stroke="#10b010" stroke-width="0.9"/><path d="M78.0 46.5 h2.0" stroke="#e010e0" stroke-width="0.9"/><path d="M94.2 54.1 v7.7" stroke="#1010e0" stroke-width="0.9"/><path d="M48.5 64.6 h5.1" stroke="#1010e0" stroke-width="0.9"/><path d="M63.3 45.5 v6.7" stroke="#e010e0" stroke-width="0.9"/><path d="M84.0 43.7 v4.6" stroke="#e010e0" stroke-width="0.9"/><path d="M73.5 56.3 v3.5" stroke="#1010e0" stroke-width="0.9"/><path d="M32.7 48.4 h3.3" stroke="#10b010" stroke-width="0.9"/><path d="M90.9 48.2 v2.2" stroke="#1010e0" stroke-width="0.9"/><path d="M30.7 64.4 h3.4" stroke="#10b010" stroke-width="0.9"/><path d="M56.7 62.0 h8.2" stroke="#1010e0" stroke-width="0.9"/><path d="M97.9 56.7 v4.1" stroke="#1010e0" stroke-width="0.9"/><path d="M46.4 58.5 v7.6" stroke="#1010e0" stroke-width="0.9"/><path d="M45.2 45.1 h2.7" stroke="#1010e0" stroke-width="0.9"/><path d="M54.4 44.0 h5.0" stroke="#1010e0" stroke-width="0.9"/><path d="M22.7 59.1 h3.8" stroke="#e010e0" stroke-width="0.9"/><path d="M93.0 66.2 v2.6" stroke="#1010e0" stroke-width="0.9"/><path d="M66.3 45.7 h5.8" stroke="#1010e0" stroke-width="0.9"/><path d="M61.2 50.5 v2.3" stroke="#1010e0" stroke-width="0.9"/><path d="M79.2 63.0 h3.4" stroke="#10b010" stroke-width="0.9"/><path d="M50.2 56.8 h9.8" stroke="#10b010" stroke-width="0.9"/><path d="M22.3 47.3 v7.6" stroke="#10b010" stroke-width="0.9"/><path d="M68.7 66.9 h6.0" stroke="#1010e0" stroke-width="0.9"/><path d="M90.3 42.2 h8.3" stroke="#1010e0" stroke-width="0.9"/><path d="M35.9 46.8 h6.2" stroke="#10b010" stroke-width="0.9"/><path d="M31.5 44.5 h8.6" stroke="#1010e0" stroke-width="0.9"/><path d="M33.5 55.2 v5.4" stroke="#1010e0" stroke-width="0.9"/><path d="M90.8 44.2 v3.4" stroke="#e010e0" stroke-width="0.9"/><path d="M100.0 40.0 v6.8" stroke="#e010e0" stroke-width="0.9"/><path d="M59.3 55.5 h9.2" stroke="#1010e0" stroke-width="0.9"/><path d="M68.5 48.2 h3.5" stroke="#1010e0" stroke-width="0.9"/><path d="M46.4 44.6 h9.3" stroke="#1010e0" stroke-width="0.9"/><path d="M34.9 48.6 v4.3" stroke="#10b010" stroke-width="0.9"/><path d="M51.4 45.5 v3.8" stroke="#1010e0" stroke-width="0.9"/><path d="M21.2 66.9 v3.2" stroke="#1010e0" stroke-width="0.9"/><path d="M22.3 41.9 v5.1" stroke="#1010e0" stroke-width="0.9"/><path d="M62.9 54.8 h8.2" stroke="#e010e0" stroke-width="0.9"/><path d="M33.6 64.5 h8.0" stroke="#1010e0" stroke-width="0.9"/><path d="M87.7 40.0 v6.2" stroke="#1010e0" stroke-width="0.9"/><path d="M35.5 51.8 v7.6" stroke="#1010e0" stroke-width="0.9"/><path d="M25.7 59.2 v3.3" stroke="#1010e0" stroke-width="0.9"/><path d="M39.1 42.0 h8.7" stroke="#10b010" stroke-width="0.9"/><path d="M97.7 44.7 h2.7" stroke="#1010e0" stroke-width="0.9"/><path d="M41.7 54.7 h2.5" stroke="#10b010" stroke-width="0.9"/><path d="M72.2 54.8 v5.7" stroke="#e010e0" stroke-width="0.9"/><path d="M89.5 42.9 v7.7" stroke="#1010e0" stroke-width="0.9"/><path d="M52.8 48.0 v3.1" stroke="#e010e0" stroke-width="0.9"/><path d="M32.6 47.6 v7.4" stroke="#10b010" stroke-width="0.9"/><path d="M96.9 62.7 v7.0" stroke="#10b010" stroke-width="0.9"/><path d="M49.8 60.6 h5.5" stroke="#10b010" stroke-width="0.9"/><path d="M59.3 60.7 v6.3" stroke="#1010e0" stroke-width="0.9"/><path d="M79.7 50.7 v4.6" stroke="#1010e0" stroke-width="0.9"/><path d="M19.7 63.6 v3.4" stroke="#1010e0" stroke-width="0.9"/><path d="M84.0 62.4 v2.4" stroke="#e010e0" stroke-width="0.9"/><path d="M64.5 68.0 v6.0" stroke="#10b010" stroke-width="0.9"/><path d="M45.3 50.6 v6.7" stroke="#1010e0" stroke-width="0.9"/><path d="M79.3 63.8 h6.8" stroke="#e010e0" stroke-width="0.9"/><path d="M77.9 61.0 v2.9" stroke="#1010e0" stroke-width="0.9"/><path d="M69.5 53.6 v2.5" stroke="#1010e0" stroke-width="0.9"/><path d="M22.1 50.0 v2.7" stroke="#10b010" stroke-width="0.9"/></symbol></defs></svg>
<div class="b" style="left:344px;top:257px;width:198px;height:126px;background:#eeeeee;border-radius:4px"></div>
<svg class="b" style="left:367px;top:261px" width="152" height="118" viewBox="0 0 152 118"><use href="#sheet0"/></svg>
<div class="t" style="left:344.40px;top:399.56px;font-size:16px;line-height:16px;color:#3b6ce8;letter-spacing:-0.050px;">A100</div>
<div class="t" style="left:343.80px;top:420.84px;font-size:12px;line-height:12px;color:#777;letter-spacing:0.045px;">Parking Deck Floor Plan</div>
<svg class="b" style="left:344px;top:437px" width="20" height="18" viewBox="0 0 20 18"><g fill="none" stroke="#3b6ce8" stroke-width="1.1"><path d="M2.2 13.6 V4.2 L8.9 0.9 L15.6 4.2 V5.6"/><path d="M2.2 13.6 H5 M6.4 13.6 H7.4 M8.6 13.6 H9.6"/><path d="M7.6 7.6 L13.8 12.4 M9.6 13.3 L13.8 9.8"/><circle cx="15.1" cy="8.3" r="1.5"/><circle cx="15.3" cy="13.7" r="1.5"/></g></svg>
<div class="b" style="left:570px;top:257px;width:198px;height:126px;background:#eeeeee;border-radius:4px"></div>
<svg class="b" style="left:593px;top:261px" width="152" height="118" viewBox="0 0 152 118"><use href="#sheet1"/></svg>
<div class="t" style="left:570.40px;top:399.56px;font-size:16px;line-height:16px;color:#3b6ce8;letter-spacing:-0.050px;">A102</div>
<div class="t" style="left:569.80px;top:420.84px;font-size:12px;line-height:12px;color:#777;letter-spacing:0.062px;">Second Floor Plan</div>
<svg class="b" style="left:570px;top:437px" width="20" height="18" viewBox="0 0 20 18"><g fill="none" stroke="#3b6ce8" stroke-width="1.1"><path d="M2.2 13.6 V4.2 L8.9 0.9 L15.6 4.2 V5.6"/><path d="M2.2 13.6 H5 M6.4 13.6 H7.4 M8.6 13.6 H9.6"/><path d="M7.6 7.6 L13.8 12.4 M9.6 13.3 L13.8 9.8"/><circle cx="15.1" cy="8.3" r="1.5"/><circle cx="15.3" cy="13.7" r="1.5"/></g></svg>
<div class="b" style="left:796px;top:257px;width:198px;height:126px;background:#eeeeee;border-radius:4px"></div>
<svg class="b" style="left:819px;top:261px" width="152" height="118" viewBox="0 0 152 118"><use href="#sheet2"/></svg>
<div class="t" style="left:796.40px;top:399.56px;font-size:16px;line-height:16px;color:#3b6ce8;letter-spacing:-0.050px;">A103</div>
<div class="t" style="left:795.80px;top:420.84px;font-size:12px;line-height:12px;color:#777;letter-spacing:0.067px;">Third Floor Plan</div>
<svg class="b" style="left:796px;top:437px" width="20" height="18" viewBox="0 0 20 18"><g fill="none" stroke="#3b6ce8" stroke-width="1.1"><path d="M2.2 13.6 V4.2 L8.9 0.9 L15.6 4.2 V5.6"/><path d="M2.2 13.6 H5 M6.4 13.6 H7.4 M8.6 13.6 H9.6"/><path d="M7.6 7.6 L13.8 12.4 M9.6 13.3 L13.8 9.8"/><circle cx="15.1" cy="8.3" r="1.5"/><circle cx="15.3" cy="13.7" r="1.5"/></g></svg>
<div class="b" style="left:1022px;top:257px;width:198px;height:126px;background:#eeeeee;border-radius:4px"></div>
<svg class="b" style="left:1045px;top:261px" width="152" height="118" viewBox="0 0 152 118"><use href="#sheet3"/></svg>
<div class="t" style="left:1022.40px;top:399.56px;font-size:16px;line-height:16px;color:#3b6ce8;letter-spacing:-0.050px;">A104</div>
<div class="t" style="left:1021.80px;top:420.84px;font-size:12px;line-height:12px;color:#777;letter-spacing:0.062px;">Fourth Floor Plan</div>
<svg class="b" style="left:1022px;top:437px" width="20" height="18" viewBox="0 0 20 18"><g fill="none" stroke="#3b6ce8" stroke-width="1.1"><path d="M2.2 13.6 V4.2 L8.9 0.9 L15.6 4.2 V5.6"/><path d="M2.2 13.6 H5 M6.4 13.6 H7.4 M8.6 13.6 H9.6"/><path d="M7.6 7.6 L13.8 12.4 M9.6 13.3 L13.8 9.8"/><circle cx="15.1" cy="8.3" r="1.5"/><circle cx="15.3" cy="13.7" r="1.5"/></g></svg>
<div class="b" style="left:344px;top:499px;width:198px;height:126px;background:#eeeeee;border-radius:4px"></div>
<svg class="b" style="left:367px;top:503px" width="152" height="118" viewBox="0 0 152 118"><use href="#sheet4"/></svg>
<div class="t" style="left:344.40px;top:641.56px;font-size:16px;line-height:16px;color:#3b6ce8;letter-spacing:-0.050px;">A105</div>
<div class="b" style="left:570px;top:499px;width:198px;height:126px;background:#eeeeee;border-radius:4px"></div>
<svg class="b" style="left:593px;top:503px" width="152" height="118" viewBox="0 0 152 118"><use href="#sheet5"/></svg>
<div class="t" style="left:570.40px;top:641.56px;font-size:16px;line-height:16px;color:#3b6ce8;letter-spacing:-0.050px;">A106</div>
<div class="b" style="left:796px;top:499px;width:198px;height:126px;background:#eeeeee;border-radius:4px"></div>
<svg class="b" style="left:819px;top:503px" width="152" height="118" viewBox="0 0 152 118"><use href="#sheet6"/></svg>
<div class="t" style="left:796.40px;top:641.56px;font-size:16px;line-height:16px;color:#3b6ce8;letter-spacing:-0.050px;">A107</div>
<div class="b" style="left:1022px;top:499px;width:198px;height:126px;background:#eeeeee;border-radius:4px"></div>
<svg class="b" style="left:1045px;top:503px" width="152" height="118" viewBox="0 0 152 118"><use href="#sheet7"/></svg>
<div class="t" style="left:1022.40px;top:641.56px;font-size:16px;line-height:16px;color:#3b6ce8;letter-spacing:-0.050px;">A108</div>
<div class="b" style="left:326px;top:657px;width:1127px;height:1px;background:#e0e0e0"></div>
<div class="t" style="left:346.50px;top:662.84px;font-size:12px;line-height:12px;color:#333;letter-spacing:-0.244px;">0 selected</div>
<svg class="b" style="left:0;top:0" width="1454" height="677" viewBox="0 0 1454 677">
<defs><filter id="sh" x="-50%" y="-50%" width="200%" height="200%"><feGaussianBlur stdDeviation="2.2"/></filter></defs>
<rect x="330.5" y="204.5" width="1118.2" height="457.1" rx="22.5" ry="22.5" fill="none" stroke="#ea1c24" stroke-width="4.8"/>
<path transform="translate(3.5,3.5)" d="M847.5 201 C840 190 833 180.5 833 171.4 A14.5 14.5 0 0 1 862 171.4 C862 180.5 855 190 847.5 201 Z" fill="#000" opacity="0.6" filter="url(#sh)"/>
<path d="M847.5 201 C840 190 833 180.5 833 171.4 A14.5 14.5 0 0 1 862 171.4 C862 180.5 855 190 847.5 201 Z" fill="#ea1c24"/>
</svg>
<div class="t" style="left:843.80px;top:165.73px;font-size:16.5px;line-height:16.5px;color:#fff;">3</div>
<div class="b" style="left:0px;top:0px;width:1454px;height:1px;background:#000"></div>
<div class="b" style="left:0px;top:0px;width:1px;height:677px;background:#000"></div>
<div class="b" style="left:1453px;top:0px;width:1px;height:677px;background:#000"></div>
<div class="b" style="left:0px;top:676px;width:1454px;height:1px;background:#000"></div>
</body></html>
